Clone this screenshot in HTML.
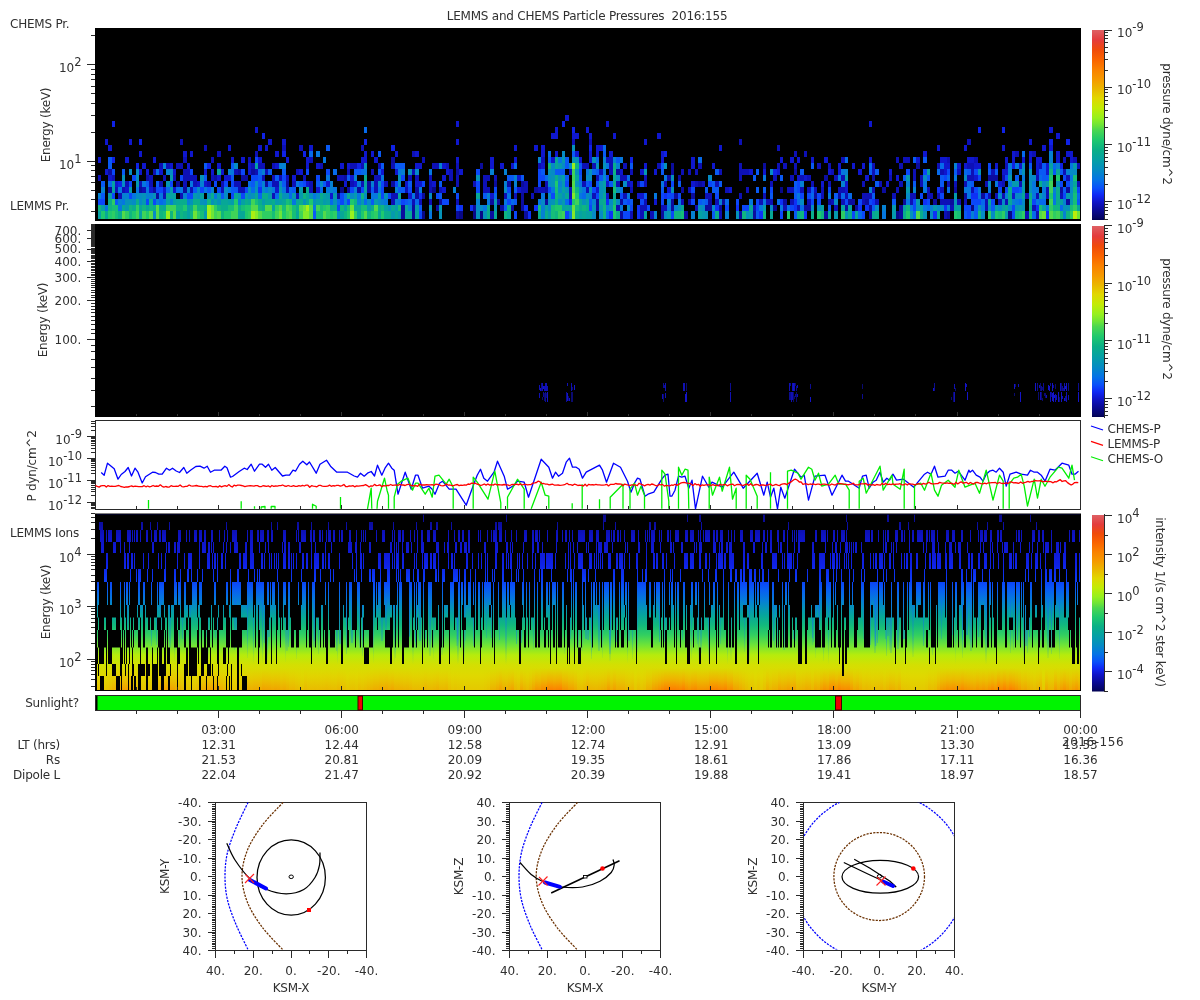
<!DOCTYPE html>
<html><head><meta charset="utf-8"><title>LEMMS and CHEMS Particle Pressures 2016:155</title>
<style>html,body{margin:0;padding:0;background:#fff;width:1200px;height:1000px;overflow:hidden}</style></head>
<body>
<svg width="1200" height="1000" viewBox="0 0 1200 1000" style="position:absolute;left:0;top:0;will-change:transform" font-family="'DejaVu Sans','Liberation Sans',sans-serif" font-size="12" fill="#303030"><style>.t{letter-spacing:-0.22px}</style>
<defs><linearGradient id="cb" x1="0" y1="0" x2="0" y2="1"><stop offset="0.000" stop-color="#de6064"/><stop offset="0.053" stop-color="#e43c3c"/><stop offset="0.105" stop-color="#f04b0a"/><stop offset="0.158" stop-color="#fa6400"/><stop offset="0.210" stop-color="#fa8200"/><stop offset="0.263" stop-color="#f59b00"/><stop offset="0.305" stop-color="#ebb400"/><stop offset="0.358" stop-color="#e1d700"/><stop offset="0.410" stop-color="#c3eb05"/><stop offset="0.463" stop-color="#96f01e"/><stop offset="0.500" stop-color="#6ee437"/><stop offset="0.526" stop-color="#4bd750"/><stop offset="0.579" stop-color="#1ec86e"/><stop offset="0.632" stop-color="#0aaf87"/><stop offset="0.684" stop-color="#05a0a5"/><stop offset="0.737" stop-color="#058cc3"/><stop offset="0.789" stop-color="#0573e6"/><stop offset="0.832" stop-color="#0a50fa"/><stop offset="0.868" stop-color="#0f28f5"/><stop offset="0.905" stop-color="#0f14c8"/><stop offset="0.947" stop-color="#0a0a96"/><stop offset="0.989" stop-color="#050564"/><stop offset="1.000" stop-color="#000050"/></linearGradient></defs>
<rect width="1200" height="1000" fill="#fff"/>
<text x="587.0" y="20.0" text-anchor="middle" font-size="12" xml:space="preserve" class="t">LEMMS and CHEMS Particle Pressures  2016:155</text>
<rect x="95" y="28" width="986" height="193" fill="#000"/>
<rect x="91" y="211" width="4" height="1" fill="#2a2a2a"/>
<rect x="91" y="199" width="4" height="1" fill="#2a2a2a"/>
<rect x="91" y="190" width="4" height="1" fill="#2a2a2a"/>
<rect x="91" y="182" width="4" height="1" fill="#2a2a2a"/>
<rect x="91" y="176" width="4" height="1" fill="#2a2a2a"/>
<rect x="91" y="170" width="4" height="1" fill="#2a2a2a"/>
<rect x="91" y="165" width="4" height="1" fill="#2a2a2a"/>
<rect x="87" y="161" width="8" height="1" fill="#2a2a2a"/>
<rect x="91" y="132" width="4" height="1" fill="#2a2a2a"/>
<rect x="91" y="115" width="4" height="1" fill="#2a2a2a"/>
<rect x="91" y="103" width="4" height="1" fill="#2a2a2a"/>
<rect x="91" y="93" width="4" height="1" fill="#2a2a2a"/>
<rect x="91" y="86" width="4" height="1" fill="#2a2a2a"/>
<rect x="91" y="79" width="4" height="1" fill="#2a2a2a"/>
<rect x="91" y="74" width="4" height="1" fill="#2a2a2a"/>
<rect x="91" y="69" width="4" height="1" fill="#2a2a2a"/>
<rect x="87" y="64" width="8" height="1" fill="#2a2a2a"/>
<rect x="91" y="35" width="4" height="1" fill="#2a2a2a"/>
<text x="81.5" y="72.1" text-anchor="end" font-size="12">10<tspan dy="-6" font-size="11.5">2</tspan></text>
<text x="81.5" y="168.8" text-anchor="end" font-size="12">10<tspan dy="-6" font-size="11.5">1</tspan></text>
<text class="t" transform="translate(50,125) rotate(-90)" text-anchor="middle">Energy (keV)</text>
<text x="10.0" y="28.0" text-anchor="start" font-size="12"  class="t">CHEMS Pr.</text>
<text x="10.0" y="210.0" text-anchor="start" font-size="12"  class="t">LEMMS Pr.</text>
<path fill="#080887" d="M340 187h4v6h-4zM422 211h3v8h-3zM432 187h4v6h-4zM459 211h4v8h-4zM473 211h3v8h-3zM480 211h3v8h-3zM773 205h4v6h-4zM780 187h3v6h-3zM896 211h3v8h-3zM971 205h3v6h-3zM1008 211h4v8h-4z"/>
<path fill="#0b0c9e" d="M108 187h4v6h-4zM108 169h4v6h-4zM139 187h3v6h-3zM146 175h3v6h-3zM153 187h3v6h-3zM156 193h3v6h-3zM176 181h4v6h-4zM183 187h4v6h-4zM214 175h3v6h-3zM238 169h3v6h-3zM241 175h4v6h-4zM245 175h3v6h-3zM251 169h4v6h-4zM265 181h3v6h-3zM286 181h3v6h-3zM337 193h3v6h-3zM344 175h3v6h-3zM347 187h3v6h-3zM357 187h4v6h-4zM367 187h4v6h-4zM367 181h4v6h-4zM391 181h4v6h-4zM391 157h4v6h-4zM401 211h4v8h-4zM401 205h4v6h-4zM412 211h3v8h-3zM412 205h3v6h-3zM415 193h4v6h-4zM415 187h4v6h-4zM422 193h3v6h-3zM436 205h3v6h-3zM439 199h3v6h-3zM456 211h3v8h-3zM456 169h3v6h-3zM473 205h3v6h-3zM480 163h3v6h-3zM490 211h4v8h-4zM490 199h4v6h-4zM494 181h3v6h-3zM497 199h3v6h-3zM500 205h4v6h-4zM507 181h4v6h-4zM511 205h3v6h-3zM521 205h3v6h-3zM521 199h3v6h-3zM521 193h3v6h-3zM521 181h3v6h-3zM524 211h4v8h-4zM534 187h4v6h-4zM545 199h3v6h-3zM545 187h3v6h-3zM596 205h3v6h-3zM596 199h3v6h-3zM616 169h4v6h-4zM620 211h3v8h-3zM620 199h3v6h-3zM661 211h3v8h-3zM667 175h4v6h-4zM671 205h3v6h-3zM671 199h3v6h-3zM671 169h3v6h-3zM671 163h3v6h-3zM674 193h4v6h-4zM678 175h3v6h-3zM681 187h3v6h-3zM684 211h4v8h-4zM688 199h3v6h-3zM691 193h4v6h-4zM698 181h4v6h-4zM705 205h3v6h-3zM708 205h4v6h-4zM708 199h4v6h-4zM719 205h3v6h-3zM722 199h3v6h-3zM739 211h3v8h-3zM753 211h3v8h-3zM763 163h3v6h-3zM783 199h4v6h-4zM794 169h3v6h-3zM804 205h3v6h-3zM807 205h4v6h-4zM814 193h3v6h-3zM824 211h4v8h-4zM824 175h4v6h-4zM828 199h3v6h-3zM838 193h3v6h-3zM845 205h3v6h-3zM848 199h4v6h-4zM852 199h3v6h-3zM855 205h3v6h-3zM865 199h4v6h-4zM869 211h3v8h-3zM869 205h3v6h-3zM872 175h3v6h-3zM882 187h4v6h-4zM899 211h4v8h-4zM899 205h4v6h-4zM903 199h3v6h-3zM916 163h4v6h-4zM933 199h4v6h-4zM947 211h3v8h-3zM950 199h4v6h-4zM954 187h3v6h-3zM964 193h3v6h-3zM981 193h4v6h-4zM988 175h3v6h-3zM991 175h4v6h-4zM995 175h3v6h-3zM1060 187h3v6h-3zM1066 199h4v6h-4zM1066 187h4v6h-4z"/>
<path fill="#0d10b6" d="M98 175h3v6h-3zM112 175h3v6h-3zM115 187h3v6h-3zM118 193h4v6h-4zM122 187h3v6h-3zM125 181h4v6h-4zM139 181h3v6h-3zM142 187h4v6h-4zM149 181h4v6h-4zM149 175h4v6h-4zM153 169h3v6h-3zM159 181h4v6h-4zM159 163h4v6h-4zM163 193h3v6h-3zM163 175h3v6h-3zM166 163h4v6h-4zM173 175h3v6h-3zM176 163h4v6h-4zM180 193h3v6h-3zM180 163h3v6h-3zM180 139h3v6h-3zM183 181h4v6h-4zM183 175h4v6h-4zM183 169h4v6h-4zM183 157h4v6h-4zM187 175h3v6h-3zM187 169h3v6h-3zM190 187h3v6h-3zM190 175h3v6h-3zM193 181h4v6h-4zM193 175h4v6h-4zM204 145h3v6h-3zM207 181h4v6h-4zM211 175h3v6h-3zM211 157h3v6h-3zM217 151h4v6h-4zM221 187h3v6h-3zM221 181h3v6h-3zM234 181h4v6h-4zM234 169h4v6h-4zM238 187h3v6h-3zM238 181h3v6h-3zM241 187h4v6h-4zM248 157h3v6h-3zM251 163h4v6h-4zM255 169h3v6h-3zM255 151h3v6h-3zM258 163h4v6h-4zM262 175h3v6h-3zM262 163h3v6h-3zM265 169h3v6h-3zM272 193h3v6h-3zM272 181h3v6h-3zM272 175h3v6h-3zM272 163h3v6h-3zM275 181h4v6h-4zM279 175h3v6h-3zM282 145h4v6h-4zM286 187h3v6h-3zM286 175h3v6h-3zM292 181h4v6h-4zM296 193h3v6h-3zM296 169h3v6h-3zM299 145h4v6h-4zM303 175h3v6h-3zM309 187h4v6h-4zM309 181h4v6h-4zM309 157h4v6h-4zM320 163h3v6h-3zM337 175h3v6h-3zM340 175h4v6h-4zM347 169h3v6h-3zM350 181h4v6h-4zM350 163h4v6h-4zM354 163h3v6h-3zM361 181h3v6h-3zM361 163h3v6h-3zM361 145h3v6h-3zM371 169h3v6h-3zM374 187h4v6h-4zM374 181h4v6h-4zM374 175h4v6h-4zM378 175h3v6h-3zM378 163h3v6h-3zM384 181h4v6h-4zM391 199h4v6h-4zM391 193h4v6h-4zM391 163h4v6h-4zM395 193h3v6h-3zM405 187h3v6h-3zM408 175h4v6h-4zM412 199h3v6h-3zM412 169h3v6h-3zM412 151h3v6h-3zM415 175h4v6h-4zM419 199h3v6h-3zM422 157h3v6h-3zM429 199h3v6h-3zM429 187h3v6h-3zM429 181h3v6h-3zM429 175h3v6h-3zM432 163h4v6h-4zM436 163h3v6h-3zM439 187h3v6h-3zM446 163h3v6h-3zM449 175h4v6h-4zM449 169h4v6h-4zM456 199h3v6h-3zM456 181h3v6h-3zM456 175h3v6h-3zM456 163h3v6h-3zM473 181h3v6h-3zM483 187h4v6h-4zM483 181h4v6h-4zM483 175h4v6h-4zM487 187h3v6h-3zM487 175h3v6h-3zM494 175h3v6h-3zM504 193h3v6h-3zM514 193h3v6h-3zM521 187h3v6h-3zM524 187h4v6h-4zM524 181h4v6h-4zM531 193h3v6h-3zM538 187h3v6h-3zM538 163h3v6h-3zM541 187h4v6h-4zM541 157h4v6h-4zM545 181h3v6h-3zM569 193h3v6h-3zM569 187h3v6h-3zM569 169h3v6h-3zM572 139h3v6h-3zM582 181h4v6h-4zM582 163h4v6h-4zM586 187h3v6h-3zM586 163h3v6h-3zM589 139h3v6h-3zM592 193h4v6h-4zM592 163h4v6h-4zM596 175h3v6h-3zM599 169h4v6h-4zM606 157h3v6h-3zM609 169h4v6h-4zM609 163h4v6h-4zM609 157h4v6h-4zM616 205h4v6h-4zM616 181h4v6h-4zM620 175h3v6h-3zM623 193h4v6h-4zM623 175h4v6h-4zM623 163h4v6h-4zM627 181h3v6h-3zM630 211h3v8h-3zM630 187h3v6h-3zM630 169h3v6h-3zM637 181h3v6h-3zM640 211h4v8h-4zM640 205h4v6h-4zM644 205h3v6h-3zM644 199h3v6h-3zM644 181h3v6h-3zM644 175h3v6h-3zM650 211h4v8h-4zM657 163h4v6h-4zM661 205h3v6h-3zM664 205h3v6h-3zM664 181h3v6h-3zM681 199h3v6h-3zM681 169h3v6h-3zM688 187h3v6h-3zM688 169h3v6h-3zM695 205h3v6h-3zM695 181h3v6h-3zM695 169h3v6h-3zM698 163h4v6h-4zM702 181h3v6h-3zM705 193h3v6h-3zM708 193h4v6h-4zM715 199h4v6h-4zM715 181h4v6h-4zM719 211h3v8h-3zM719 169h3v6h-3zM725 187h4v6h-4zM739 193h3v6h-3zM739 175h3v6h-3zM739 169h3v6h-3zM739 163h3v6h-3zM739 139h3v6h-3zM742 169h4v6h-4zM746 187h3v6h-3zM746 169h3v6h-3zM753 205h3v6h-3zM759 199h4v6h-4zM763 193h3v6h-3zM766 199h4v6h-4zM770 199h3v6h-3zM770 181h3v6h-3zM773 175h4v6h-4zM777 163h3v6h-3zM777 145h3v6h-3zM783 205h4v6h-4zM783 163h4v6h-4zM787 187h3v6h-3zM790 199h4v6h-4zM790 187h4v6h-4zM790 175h4v6h-4zM794 163h3v6h-3zM794 151h3v6h-3zM797 205h3v6h-3zM800 187h4v6h-4zM800 175h4v6h-4zM804 151h3v6h-3zM807 199h4v6h-4zM807 187h4v6h-4zM807 175h4v6h-4zM811 181h3v6h-3zM814 187h3v6h-3zM817 163h4v6h-4zM821 193h3v6h-3zM821 187h3v6h-3zM828 181h3v6h-3zM828 163h3v6h-3zM831 199h3v6h-3zM831 169h3v6h-3zM834 205h4v6h-4zM834 175h4v6h-4zM838 187h3v6h-3zM841 199h4v6h-4zM841 187h4v6h-4zM841 175h4v6h-4zM841 157h4v6h-4zM845 193h3v6h-3zM862 199h3v6h-3zM862 193h3v6h-3zM862 181h3v6h-3zM865 193h4v6h-4zM869 193h3v6h-3zM872 187h3v6h-3zM872 169h3v6h-3zM872 163h3v6h-3zM875 199h4v6h-4zM879 181h3v6h-3zM889 175h3v6h-3zM892 193h4v6h-4zM896 187h3v6h-3zM896 157h3v6h-3zM899 181h4v6h-4zM899 163h4v6h-4zM903 157h3v6h-3zM906 157h4v6h-4zM910 199h3v6h-3zM910 193h3v6h-3zM913 193h3v6h-3zM913 175h3v6h-3zM913 169h3v6h-3zM920 181h3v6h-3zM920 175h3v6h-3zM927 193h3v6h-3zM927 187h3v6h-3zM930 193h3v6h-3zM937 193h3v6h-3zM937 163h3v6h-3zM940 199h4v6h-4zM940 187h4v6h-4zM940 169h4v6h-4zM944 211h3v8h-3zM944 199h3v6h-3zM947 199h3v6h-3zM947 181h3v6h-3zM947 157h3v6h-3zM950 205h4v6h-4zM954 181h3v6h-3zM957 199h4v6h-4zM957 169h4v6h-4zM964 199h3v6h-3zM964 181h3v6h-3zM967 175h4v6h-4zM967 163h4v6h-4zM967 139h4v6h-4zM971 187h3v6h-3zM971 175h3v6h-3zM971 169h3v6h-3zM971 163h3v6h-3zM974 157h4v6h-4zM985 205h3v6h-3zM985 199h3v6h-3zM985 181h3v6h-3zM988 193h3v6h-3zM991 169h4v6h-4zM995 193h3v6h-3zM998 199h4v6h-4zM1002 193h3v6h-3zM1002 181h3v6h-3zM1002 175h3v6h-3zM1005 199h3v6h-3zM1005 163h3v6h-3zM1015 151h4v6h-4zM1019 181h3v6h-3zM1025 211h4v8h-4zM1025 193h4v6h-4zM1032 205h4v6h-4zM1032 151h4v6h-4zM1036 211h3v8h-3zM1036 193h3v6h-3zM1036 175h3v6h-3zM1039 163h3v6h-3zM1046 193h3v6h-3zM1046 187h3v6h-3zM1060 193h3v6h-3zM1063 169h3v6h-3zM1063 157h3v6h-3zM1066 175h4v6h-4zM1073 157h4v6h-4zM1077 181h3v6h-3zM1077 163h3v6h-3z"/>
<path fill="#0f17ce" d="M98 157h3v6h-3zM105 169h3v6h-3zM105 139h3v6h-3zM108 175h4v6h-4zM108 145h4v6h-4zM115 181h3v6h-3zM125 187h4v6h-4zM125 157h4v6h-4zM129 139h3v6h-3zM139 169h3v6h-3zM139 151h3v6h-3zM142 163h4v6h-4zM146 169h3v6h-3zM149 187h4v6h-4zM153 157h3v6h-3zM159 169h4v6h-4zM163 187h3v6h-3zM170 163h3v6h-3zM173 187h3v6h-3zM173 169h3v6h-3zM183 151h4v6h-4zM187 163h3v6h-3zM190 151h3v6h-3zM197 181h3v6h-3zM204 181h3v6h-3zM204 169h3v6h-3zM211 169h3v6h-3zM217 175h4v6h-4zM217 163h4v6h-4zM221 169h3v6h-3zM224 175h4v6h-4zM228 175h3v6h-3zM228 145h3v6h-3zM231 157h3v6h-3zM241 157h4v6h-4zM248 169h3v6h-3zM248 163h3v6h-3zM255 127h3v6h-3zM258 157h4v6h-4zM258 145h4v6h-4zM265 145h3v6h-3zM268 139h4v6h-4zM275 187h4v6h-4zM275 163h4v6h-4zM275 151h4v6h-4zM282 139h4v6h-4zM286 157h3v6h-3zM292 175h4v6h-4zM299 169h4v6h-4zM306 181h3v6h-3zM306 163h3v6h-3zM306 157h3v6h-3zM309 145h4v6h-4zM316 187h4v6h-4zM316 163h4v6h-4zM326 181h4v6h-4zM330 193h3v6h-3zM340 163h4v6h-4zM344 181h3v6h-3zM347 163h3v6h-3zM350 175h4v6h-4zM354 181h3v6h-3zM361 157h3v6h-3zM364 157h3v6h-3zM364 151h3v6h-3zM371 151h3v6h-3zM374 157h4v6h-4zM381 169h3v6h-3zM395 169h3v6h-3zM395 151h3v6h-3zM405 181h3v6h-3zM408 193h4v6h-4zM415 181h4v6h-4zM415 163h4v6h-4zM415 151h4v6h-4zM419 181h3v6h-3zM419 163h3v6h-3zM432 181h4v6h-4zM442 187h4v6h-4zM442 175h4v6h-4zM442 163h4v6h-4zM446 169h3v6h-3zM456 157h3v6h-3zM456 139h3v6h-3zM456 121h3v6h-3zM459 169h4v6h-4zM490 193h4v6h-4zM490 163h4v6h-4zM490 157h4v6h-4zM500 163h4v6h-4zM511 163h3v6h-3zM514 157h3v6h-3zM514 145h3v6h-3zM517 187h4v6h-4zM517 175h4v6h-4zM534 145h4v6h-4zM541 163h4v6h-4zM541 151h4v6h-4zM541 145h4v6h-4zM551 157h4v6h-4zM551 133h4v6h-4zM555 151h3v6h-3zM555 133h3v6h-3zM555 127h3v6h-3zM565 115h4v6h-4zM572 133h3v6h-3zM575 151h4v6h-4zM575 133h4v6h-4zM579 157h3v6h-3zM586 127h3v6h-3zM589 157h3v6h-3zM589 151h3v6h-3zM589 133h3v6h-3zM596 187h3v6h-3zM596 151h3v6h-3zM596 145h3v6h-3zM599 145h4v6h-4zM606 193h3v6h-3zM606 181h3v6h-3zM606 121h3v6h-3zM609 151h4v6h-4zM613 133h3v6h-3zM620 169h3v6h-3zM630 181h3v6h-3zM637 193h3v6h-3zM640 193h4v6h-4zM640 169h4v6h-4zM644 163h3v6h-3zM644 139h3v6h-3zM654 199h3v6h-3zM654 169h3v6h-3zM657 133h4v6h-4zM661 157h3v6h-3zM661 151h3v6h-3zM667 187h4v6h-4zM691 181h4v6h-4zM691 163h4v6h-4zM691 157h4v6h-4zM712 163h3v6h-3zM719 145h3v6h-3zM729 187h3v6h-3zM749 169h4v6h-4zM763 169h3v6h-3zM777 169h3v6h-3zM780 157h3v6h-3zM790 157h4v6h-4zM797 175h3v6h-3zM797 157h3v6h-3zM804 175h3v6h-3zM811 157h3v6h-3zM821 181h3v6h-3zM824 157h4v6h-4zM828 169h3v6h-3zM838 169h3v6h-3zM838 163h3v6h-3zM845 187h3v6h-3zM845 181h3v6h-3zM852 163h3v6h-3zM858 169h4v6h-4zM862 163h3v6h-3zM865 175h4v6h-4zM869 157h3v6h-3zM869 121h3v6h-3zM886 181h3v6h-3zM889 169h3v6h-3zM896 175h3v6h-3zM916 157h4v6h-4zM923 151h4v6h-4zM937 145h3v6h-3zM940 157h4v6h-4zM944 169h3v6h-3zM944 163h3v6h-3zM944 157h3v6h-3zM947 163h3v6h-3zM957 163h4v6h-4zM964 163h3v6h-3zM964 145h3v6h-3zM967 157h4v6h-4zM971 157h3v6h-3zM974 175h4v6h-4zM974 163h4v6h-4zM978 163h3v6h-3zM995 163h3v6h-3zM998 181h4v6h-4zM1002 169h3v6h-3zM1002 145h3v6h-3zM1005 169h3v6h-3zM1005 157h3v6h-3zM1012 193h3v6h-3zM1012 157h3v6h-3zM1012 151h3v6h-3zM1019 163h3v6h-3zM1022 157h3v6h-3zM1029 157h3v6h-3zM1029 151h3v6h-3zM1029 139h3v6h-3zM1036 169h3v6h-3zM1036 163h3v6h-3zM1036 157h3v6h-3zM1039 157h3v6h-3zM1042 145h4v6h-4zM1046 169h3v6h-3zM1046 163h3v6h-3zM1049 145h4v6h-4zM1049 127h4v6h-4zM1056 157h4v6h-4zM1056 151h4v6h-4zM1056 133h4v6h-4zM1066 151h4v6h-4zM1070 157h3v6h-3zM1070 151h3v6h-3z"/>
<path fill="#0f22e6" d="M112 157h3v6h-3zM112 121h3v6h-3zM118 181h4v6h-4zM136 163h3v6h-3zM139 139h3v6h-3zM207 163h4v6h-4zM262 133h3v6h-3zM282 151h4v6h-4zM303 151h3v6h-3zM357 163h4v6h-4zM364 139h3v6h-3zM391 145h4v6h-4zM562 121h3v6h-3zM569 199h3v6h-3zM572 127h3v6h-3zM589 145h3v6h-3zM630 157h3v6h-3zM664 151h3v6h-3zM773 169h4v6h-4zM978 127h3v6h-3zM1002 127h3v6h-3zM1012 163h3v6h-3zM1049 139h4v6h-4zM1060 163h3v6h-3zM1066 139h4v6h-4z"/>
<path fill="#0e31f6" d="M258 187h4v6h-4zM419 193h3v6h-3zM459 205h4v6h-4zM470 205h3v6h-3zM524 205h4v6h-4zM528 211h3v8h-3zM534 205h4v6h-4zM606 199h3v6h-3zM609 211h4v8h-4zM637 211h3v8h-3zM637 205h3v6h-3zM664 193h3v6h-3zM715 205h4v6h-4zM736 205h3v6h-3zM759 211h4v8h-4zM780 199h3v6h-3zM794 205h3v6h-3zM794 199h3v6h-3zM804 211h3v8h-3zM858 205h4v6h-4zM865 205h4v6h-4zM872 199h3v6h-3zM923 199h4v6h-4zM933 211h4v8h-4zM937 187h3v6h-3zM944 205h3v6h-3zM971 193h3v6h-3zM974 193h4v6h-4zM1036 205h3v6h-3zM1046 211h3v8h-3z"/>
<path fill="#0b47f9" d="M98 199h3v6h-3zM101 199h4v6h-4zM112 193h3v6h-3zM112 169h3v6h-3zM129 193h3v6h-3zM129 181h3v6h-3zM132 175h4v6h-4zM146 199h3v6h-3zM153 199h3v6h-3zM156 187h3v6h-3zM159 187h4v6h-4zM170 181h3v6h-3zM180 175h3v6h-3zM187 193h3v6h-3zM190 193h3v6h-3zM190 169h3v6h-3zM200 187h4v6h-4zM214 181h3v6h-3zM217 187h4v6h-4zM224 181h4v6h-4zM231 193h3v6h-3zM231 181h3v6h-3zM241 193h4v6h-4zM241 169h4v6h-4zM245 187h3v6h-3zM251 175h4v6h-4zM255 175h3v6h-3zM255 157h3v6h-3zM282 175h4v6h-4zM303 181h3v6h-3zM306 169h3v6h-3zM316 175h4v6h-4zM326 169h4v6h-4zM337 205h3v6h-3zM340 199h4v6h-4zM340 193h4v6h-4zM347 199h3v6h-3zM350 187h4v6h-4zM361 187h3v6h-3zM381 193h3v6h-3zM381 187h3v6h-3zM381 181h3v6h-3zM388 193h3v6h-3zM395 181h3v6h-3zM401 199h4v6h-4zM401 175h4v6h-4zM408 187h4v6h-4zM419 211h3v8h-3zM422 181h3v6h-3zM436 193h3v6h-3zM442 199h4v6h-4zM446 199h3v6h-3zM456 205h3v6h-3zM456 193h3v6h-3zM476 187h4v6h-4zM476 181h4v6h-4zM476 169h4v6h-4zM494 187h3v6h-3zM507 199h4v6h-4zM507 187h4v6h-4zM514 211h3v8h-3zM538 181h3v6h-3zM538 175h3v6h-3zM538 169h3v6h-3zM541 175h4v6h-4zM548 187h3v6h-3zM551 193h4v6h-4zM565 211h4v8h-4zM565 181h4v6h-4zM579 169h3v6h-3zM589 205h3v6h-3zM589 181h3v6h-3zM592 187h4v6h-4zM596 193h3v6h-3zM606 175h3v6h-3zM620 193h3v6h-3zM623 211h4v8h-4zM627 211h3v8h-3zM627 199h3v6h-3zM630 205h3v6h-3zM640 199h4v6h-4zM640 181h4v6h-4zM647 205h3v6h-3zM661 199h3v6h-3zM661 193h3v6h-3zM667 193h4v6h-4zM671 211h3v8h-3zM671 193h3v6h-3zM671 181h3v6h-3zM678 193h3v6h-3zM691 199h4v6h-4zM691 187h4v6h-4zM708 181h4v6h-4zM715 193h4v6h-4zM725 205h4v6h-4zM736 199h3v6h-3zM742 205h4v6h-4zM746 205h3v6h-3zM756 205h3v6h-3zM756 199h3v6h-3zM770 187h3v6h-3zM780 211h3v8h-3zM790 205h4v6h-4zM797 187h3v6h-3zM797 181h3v6h-3zM800 193h4v6h-4zM807 193h4v6h-4zM811 199h3v6h-3zM817 199h4v6h-4zM817 193h4v6h-4zM828 187h3v6h-3zM845 199h3v6h-3zM852 211h3v8h-3zM858 199h4v6h-4zM862 211h3v8h-3zM869 199h3v6h-3zM906 169h4v6h-4zM913 205h3v6h-3zM913 199h3v6h-3zM920 193h3v6h-3zM923 169h4v6h-4zM927 199h3v6h-3zM940 193h4v6h-4zM944 175h3v6h-3zM947 169h3v6h-3zM964 205h3v6h-3zM967 211h4v8h-4zM967 205h4v6h-4zM971 199h3v6h-3zM974 199h4v6h-4zM974 187h4v6h-4zM974 169h4v6h-4zM978 199h3v6h-3zM978 175h3v6h-3zM985 193h3v6h-3zM988 163h3v6h-3zM991 199h4v6h-4zM998 187h4v6h-4zM1005 187h3v6h-3zM1005 175h3v6h-3zM1012 211h3v8h-3zM1012 205h3v6h-3zM1012 187h3v6h-3zM1015 187h4v6h-4zM1032 199h4v6h-4zM1060 181h3v6h-3zM1063 193h3v6h-3zM1063 175h3v6h-3zM1066 181h4v6h-4zM1077 187h3v6h-3z"/>
<path fill="#095af4" d="M101 193h4v6h-4zM101 181h4v6h-4zM108 163h4v6h-4zM108 157h4v6h-4zM115 199h3v6h-3zM122 169h3v6h-3zM146 181h3v6h-3zM156 181h3v6h-3zM193 187h4v6h-4zM204 175h3v6h-3zM204 163h3v6h-3zM207 187h4v6h-4zM221 193h3v6h-3zM231 187h3v6h-3zM231 175h3v6h-3zM231 163h3v6h-3zM234 187h4v6h-4zM251 181h4v6h-4zM258 181h4v6h-4zM258 175h4v6h-4zM268 181h4v6h-4zM268 169h4v6h-4zM275 175h4v6h-4zM282 181h4v6h-4zM282 169h4v6h-4zM292 187h4v6h-4zM299 181h4v6h-4zM313 211h3v8h-3zM316 181h4v6h-4zM323 181h3v6h-3zM326 145h4v6h-4zM347 175h3v6h-3zM354 169h3v6h-3zM357 169h4v6h-4zM371 199h3v6h-3zM371 187h3v6h-3zM378 169h3v6h-3zM378 151h3v6h-3zM381 163h3v6h-3zM395 163h3v6h-3zM398 187h3v6h-3zM398 163h3v6h-3zM401 187h4v6h-4zM401 163h4v6h-4zM405 199h3v6h-3zM408 181h4v6h-4zM419 205h3v6h-3zM439 193h3v6h-3zM439 181h3v6h-3zM483 193h4v6h-4zM504 205h3v6h-3zM507 175h4v6h-4zM511 175h3v6h-3zM514 199h3v6h-3zM514 187h3v6h-3zM521 175h3v6h-3zM541 169h4v6h-4zM548 157h3v6h-3zM555 169h3v6h-3zM558 169h4v6h-4zM562 169h3v6h-3zM565 175h4v6h-4zM565 163h4v6h-4zM565 157h4v6h-4zM572 151h3v6h-3zM579 175h3v6h-3zM579 163h3v6h-3zM586 181h3v6h-3zM589 199h3v6h-3zM596 181h3v6h-3zM596 169h3v6h-3zM599 175h4v6h-4zM603 151h3v6h-3zM609 181h4v6h-4zM616 157h4v6h-4zM623 199h4v6h-4zM630 199h3v6h-3zM630 163h3v6h-3zM644 193h3v6h-3zM661 187h3v6h-3zM661 169h3v6h-3zM661 163h3v6h-3zM678 181h3v6h-3zM698 199h4v6h-4zM705 199h3v6h-3zM705 187h3v6h-3zM712 211h3v8h-3zM712 187h3v6h-3zM712 181h3v6h-3zM715 187h4v6h-4zM715 169h4v6h-4zM719 181h3v6h-3zM753 175h3v6h-3zM756 211h3v8h-3zM756 187h3v6h-3zM756 169h3v6h-3zM763 187h3v6h-3zM770 193h3v6h-3zM780 175h3v6h-3zM794 211h3v8h-3zM794 193h3v6h-3zM794 187h3v6h-3zM794 181h3v6h-3zM800 169h4v6h-4zM811 187h3v6h-3zM811 163h3v6h-3zM828 205h3v6h-3zM834 193h4v6h-4zM869 169h3v6h-3zM872 205h3v6h-3zM872 193h3v6h-3zM875 181h4v6h-4zM875 169h4v6h-4zM892 199h4v6h-4zM903 175h3v6h-3zM913 181h3v6h-3zM913 157h3v6h-3zM923 157h4v6h-4zM927 175h3v6h-3zM940 181h4v6h-4zM940 175h4v6h-4zM954 169h3v6h-3zM964 211h3v8h-3zM967 169h4v6h-4zM971 181h3v6h-3zM974 211h4v8h-4zM974 205h4v6h-4zM988 169h3v6h-3zM991 205h4v6h-4zM995 169h3v6h-3zM1015 175h4v6h-4zM1019 187h3v6h-3zM1029 163h3v6h-3zM1039 169h3v6h-3zM1042 175h4v6h-4zM1042 169h4v6h-4zM1042 163h4v6h-4zM1046 175h3v6h-3zM1053 169h3v6h-3zM1060 169h3v6h-3zM1063 187h3v6h-3zM1077 199h3v6h-3z"/>
<path fill="#066aeb" d="M108 181h4v6h-4zM156 169h3v6h-3zM159 199h4v6h-4zM166 187h4v6h-4zM176 187h4v6h-4zM248 181h3v6h-3zM251 187h4v6h-4zM258 193h4v6h-4zM258 169h4v6h-4zM275 193h4v6h-4zM289 193h3v6h-3zM289 187h3v6h-3zM309 151h4v6h-4zM320 187h3v6h-3zM330 199h3v6h-3zM333 169h4v6h-4zM337 199h3v6h-3zM361 169h3v6h-3zM364 199h3v6h-3zM364 127h3v6h-3zM408 199h4v6h-4zM415 199h4v6h-4zM494 193h3v6h-3zM511 199h3v6h-3zM514 163h3v6h-3zM545 175h3v6h-3zM548 151h3v6h-3zM565 199h4v6h-4zM582 193h4v6h-4zM592 169h4v6h-4zM596 157h3v6h-3zM603 145h3v6h-3zM606 211h3v8h-3zM627 175h3v6h-3zM698 157h4v6h-4zM702 199h3v6h-3zM725 199h4v6h-4zM777 199h3v6h-3zM787 205h3v6h-3zM797 199h3v6h-3zM800 205h4v6h-4zM811 193h3v6h-3zM841 193h4v6h-4zM845 157h3v6h-3zM848 193h4v6h-4zM858 211h4v8h-4zM869 163h3v6h-3zM913 211h3v8h-3zM927 205h3v6h-3zM937 169h3v6h-3zM940 163h4v6h-4zM947 187h3v6h-3zM947 175h3v6h-3zM964 169h3v6h-3zM967 181h4v6h-4zM981 199h4v6h-4zM1019 199h3v6h-3zM1022 151h3v6h-3zM1032 211h4v8h-4zM1039 199h3v6h-3zM1039 175h3v6h-3zM1042 199h4v6h-4zM1053 163h3v6h-3zM1060 205h3v6h-3zM1077 193h3v6h-3z"/>
<path fill="#0577e0" d="M105 205h3v6h-3zM118 205h4v6h-4zM118 187h4v6h-4zM122 199h3v6h-3zM132 193h4v6h-4zM136 187h3v6h-3zM142 181h4v6h-4zM146 187h3v6h-3zM159 193h4v6h-4zM163 199h3v6h-3zM180 187h3v6h-3zM190 181h3v6h-3zM204 187h3v6h-3zM214 193h3v6h-3zM228 187h3v6h-3zM231 169h3v6h-3zM265 187h3v6h-3zM272 187h3v6h-3zM282 187h4v6h-4zM292 199h4v6h-4zM296 181h3v6h-3zM313 205h3v6h-3zM313 193h3v6h-3zM316 151h4v6h-4zM323 157h3v6h-3zM326 187h4v6h-4zM326 175h4v6h-4zM333 187h4v6h-4zM344 193h3v6h-3zM357 193h4v6h-4zM357 181h4v6h-4zM364 169h3v6h-3zM371 193h3v6h-3zM374 193h4v6h-4zM378 187h3v6h-3zM381 175h3v6h-3zM384 199h4v6h-4zM398 199h3v6h-3zM398 169h3v6h-3zM412 193h3v6h-3zM419 187h3v6h-3zM429 211h3v8h-3zM429 169h3v6h-3zM483 205h4v6h-4zM487 199h3v6h-3zM504 199h3v6h-3zM507 193h4v6h-4zM538 199h3v6h-3zM541 193h4v6h-4zM551 187h4v6h-4zM558 157h4v6h-4zM579 193h3v6h-3zM579 181h3v6h-3zM582 187h4v6h-4zM586 169h3v6h-3zM603 169h3v6h-3zM606 163h3v6h-3zM620 205h3v6h-3zM620 187h3v6h-3zM620 157h3v6h-3zM627 193h3v6h-3zM654 193h3v6h-3zM661 181h3v6h-3zM664 175h3v6h-3zM667 205h4v6h-4zM678 199h3v6h-3zM749 199h4v6h-4zM759 205h4v6h-4zM763 199h3v6h-3zM763 175h3v6h-3zM780 205h3v6h-3zM797 193h3v6h-3zM828 193h3v6h-3zM838 175h3v6h-3zM841 169h4v6h-4zM882 211h4v8h-4zM906 199h4v6h-4zM910 205h3v6h-3zM923 205h4v6h-4zM923 187h4v6h-4zM923 181h4v6h-4zM954 175h3v6h-3zM964 187h3v6h-3zM967 193h4v6h-4zM967 187h4v6h-4zM978 193h3v6h-3zM978 187h3v6h-3zM981 205h4v6h-4zM988 187h3v6h-3zM995 181h3v6h-3zM1008 181h4v6h-4zM1008 163h4v6h-4zM1015 199h4v6h-4zM1015 163h4v6h-4zM1019 169h3v6h-3zM1022 175h3v6h-3zM1032 193h4v6h-4zM1032 187h4v6h-4zM1032 181h4v6h-4zM1036 199h3v6h-3zM1036 187h3v6h-3zM1042 187h4v6h-4zM1046 205h3v6h-3zM1053 199h3v6h-3zM1053 193h3v6h-3zM1070 175h3v6h-3zM1070 163h3v6h-3z"/>
<path fill="#0581d2" d="M98 193h3v6h-3zM101 187h4v6h-4zM118 199h4v6h-4zM122 193h3v6h-3zM125 193h4v6h-4zM146 193h3v6h-3zM149 193h4v6h-4zM156 199h3v6h-3zM163 163h3v6h-3zM166 169h4v6h-4zM170 199h3v6h-3zM183 193h4v6h-4zM187 199h3v6h-3zM187 187h3v6h-3zM200 181h4v6h-4zM211 187h3v6h-3zM228 169h3v6h-3zM238 199h3v6h-3zM262 181h3v6h-3zM262 169h3v6h-3zM279 163h3v6h-3zM282 163h4v6h-4zM330 187h3v6h-3zM330 181h3v6h-3zM344 199h3v6h-3zM354 187h3v6h-3zM354 175h3v6h-3zM357 199h4v6h-4zM371 181h3v6h-3zM381 199h3v6h-3zM395 199h3v6h-3zM395 187h3v6h-3zM401 169h4v6h-4zM408 205h4v6h-4zM439 163h3v6h-3zM453 187h3v6h-3zM476 199h4v6h-4zM487 193h3v6h-3zM490 169h4v6h-4zM504 181h3v6h-3zM504 169h3v6h-3zM514 181h3v6h-3zM514 175h3v6h-3zM538 157h3v6h-3zM541 211h4v8h-4zM541 205h4v6h-4zM558 181h4v6h-4zM569 211h3v8h-3zM589 193h3v6h-3zM592 199h4v6h-4zM603 157h3v6h-3zM606 205h3v6h-3zM613 157h3v6h-3zM616 163h4v6h-4zM654 211h3v8h-3zM667 199h4v6h-4zM674 205h4v6h-4zM691 211h4v8h-4zM719 199h3v6h-3zM725 211h4v8h-4zM800 181h4v6h-4zM841 181h4v6h-4zM845 169h3v6h-3zM869 187h3v6h-3zM882 205h4v6h-4zM906 181h4v6h-4zM913 187h3v6h-3zM930 205h3v6h-3zM947 205h3v6h-3zM954 163h3v6h-3zM971 211h3v8h-3zM1005 193h3v6h-3zM1008 169h4v6h-4zM1012 199h3v6h-3zM1042 193h4v6h-4zM1049 157h4v6h-4zM1049 151h4v6h-4zM1053 187h3v6h-3zM1056 163h4v6h-4zM1063 211h3v8h-3zM1063 199h3v6h-3zM1066 169h4v6h-4z"/>
<path fill="#058bc5" d="M122 181h3v6h-3zM129 169h3v6h-3zM132 199h4v6h-4zM136 193h3v6h-3zM136 175h3v6h-3zM136 169h3v6h-3zM139 199h3v6h-3zM139 193h3v6h-3zM153 211h3v8h-3zM170 169h3v6h-3zM197 187h3v6h-3zM204 199h3v6h-3zM224 193h4v6h-4zM224 187h4v6h-4zM234 163h4v6h-4zM248 193h3v6h-3zM255 181h3v6h-3zM262 187h3v6h-3zM268 187h4v6h-4zM279 181h3v6h-3zM316 193h4v6h-4zM320 181h3v6h-3zM337 211h3v8h-3zM350 193h4v6h-4zM364 193h3v6h-3zM367 199h4v6h-4zM378 199h3v6h-3zM378 181h3v6h-3zM398 181h3v6h-3zM415 169h4v6h-4zM429 193h3v6h-3zM476 205h4v6h-4zM480 205h3v6h-3zM504 187h3v6h-3zM541 199h4v6h-4zM548 205h3v6h-3zM548 199h3v6h-3zM548 193h3v6h-3zM548 181h3v6h-3zM548 175h3v6h-3zM551 169h4v6h-4zM551 163h4v6h-4zM558 199h4v6h-4zM558 187h4v6h-4zM562 163h3v6h-3zM562 151h3v6h-3zM569 163h3v6h-3zM579 187h3v6h-3zM586 193h3v6h-3zM586 175h3v6h-3zM589 175h3v6h-3zM592 211h4v8h-4zM599 211h4v8h-4zM603 175h3v6h-3zM609 199h4v6h-4zM616 199h4v6h-4zM616 175h4v6h-4zM623 181h4v6h-4zM627 205h3v6h-3zM664 211h3v8h-3zM702 205h3v6h-3zM708 175h4v6h-4zM712 205h3v6h-3zM770 205h3v6h-3zM770 169h3v6h-3zM800 199h4v6h-4zM811 205h3v6h-3zM834 199h4v6h-4zM875 205h4v6h-4zM906 193h4v6h-4zM923 175h4v6h-4zM930 211h3v8h-3zM937 205h3v6h-3zM940 205h4v6h-4zM964 175h3v6h-3zM981 211h4v8h-4zM988 181h3v6h-3zM991 211h4v8h-4zM998 205h4v6h-4zM998 193h4v6h-4zM1002 199h3v6h-3zM1008 205h4v6h-4zM1015 193h4v6h-4zM1019 193h3v6h-3zM1022 199h3v6h-3zM1022 163h3v6h-3zM1029 175h3v6h-3zM1032 175h4v6h-4zM1042 181h4v6h-4zM1070 187h3v6h-3zM1070 181h3v6h-3zM1070 169h3v6h-3zM1073 169h4v6h-4z"/>
<path fill="#0592b9" d="M122 175h3v6h-3zM125 199h4v6h-4zM129 199h3v6h-3zM142 193h4v6h-4zM153 193h3v6h-3zM166 181h4v6h-4zM190 199h3v6h-3zM197 193h3v6h-3zM200 199h4v6h-4zM200 175h4v6h-4zM207 193h4v6h-4zM211 199h3v6h-3zM217 199h4v6h-4zM248 187h3v6h-3zM251 193h4v6h-4zM255 187h3v6h-3zM282 193h4v6h-4zM286 193h3v6h-3zM303 199h3v6h-3zM309 193h4v6h-4zM313 199h3v6h-3zM333 199h4v6h-4zM364 163h3v6h-3zM384 193h4v6h-4zM388 205h3v6h-3zM398 175h3v6h-3zM408 169h4v6h-4zM429 205h3v6h-3zM439 211h3v8h-3zM476 211h4v8h-4zM476 175h4v6h-4zM483 211h4v8h-4zM494 205h3v6h-3zM548 169h3v6h-3zM551 199h4v6h-4zM551 181h4v6h-4zM551 175h4v6h-4zM558 175h4v6h-4zM562 193h3v6h-3zM565 187h4v6h-4zM572 157h3v6h-3zM572 145h3v6h-3zM575 181h4v6h-4zM575 169h4v6h-4zM575 157h4v6h-4zM582 199h4v6h-4zM589 187h3v6h-3zM589 169h3v6h-3zM592 205h4v6h-4zM592 157h4v6h-4zM596 163h3v6h-3zM599 193h4v6h-4zM599 187h4v6h-4zM599 181h4v6h-4zM603 163h3v6h-3zM609 205h4v6h-4zM616 187h4v6h-4zM664 163h3v6h-3zM671 187h3v6h-3zM671 175h3v6h-3zM678 205h3v6h-3zM698 205h4v6h-4zM705 211h3v8h-3zM736 211h3v8h-3zM746 211h3v8h-3zM817 205h4v6h-4zM845 211h3v8h-3zM910 211h3v8h-3zM916 205h4v6h-4zM923 211h4v8h-4zM954 199h3v6h-3zM978 205h3v6h-3zM978 169h3v6h-3zM988 205h3v6h-3zM1015 205h4v6h-4zM1022 205h3v6h-3zM1022 169h3v6h-3zM1029 187h3v6h-3zM1029 181h3v6h-3zM1029 169h3v6h-3zM1056 181h4v6h-4zM1063 205h3v6h-3zM1066 205h4v6h-4zM1070 193h3v6h-3z"/>
<path fill="#059aae" d="M108 193h4v6h-4zM125 205h4v6h-4zM129 187h3v6h-3zM136 181h3v6h-3zM142 199h4v6h-4zM170 187h3v6h-3zM170 175h3v6h-3zM193 193h4v6h-4zM204 211h3v8h-3zM217 193h4v6h-4zM231 199h3v6h-3zM238 193h3v6h-3zM245 193h3v6h-3zM262 199h3v6h-3zM268 193h4v6h-4zM275 199h4v6h-4zM279 187h3v6h-3zM292 193h4v6h-4zM299 193h4v6h-4zM299 187h4v6h-4zM323 199h3v6h-3zM326 193h4v6h-4zM333 193h4v6h-4zM354 193h3v6h-3zM361 199h3v6h-3zM367 205h4v6h-4zM374 199h4v6h-4zM391 211h4v8h-4zM395 205h3v6h-3zM398 211h3v8h-3zM415 205h4v6h-4zM439 205h3v6h-3zM494 199h3v6h-3zM548 211h3v8h-3zM558 163h4v6h-4zM562 199h3v6h-3zM562 181h3v6h-3zM562 157h3v6h-3zM599 205h4v6h-4zM603 187h3v6h-3zM644 169h3v6h-3zM667 211h4v8h-4zM702 211h3v8h-3zM749 211h4v8h-4zM763 205h3v6h-3zM834 211h4v8h-4zM845 175h3v6h-3zM892 211h4v8h-4zM892 205h4v6h-4zM906 187h4v6h-4zM906 175h4v6h-4zM916 199h4v6h-4zM933 205h4v6h-4zM954 193h3v6h-3zM995 205h3v6h-3zM1005 211h3v8h-3zM1008 175h4v6h-4zM1012 181h3v6h-3zM1015 181h4v6h-4zM1019 205h3v6h-3zM1022 187h3v6h-3zM1022 181h3v6h-3zM1039 193h3v6h-3zM1046 181h3v6h-3zM1066 193h4v6h-4zM1070 199h3v6h-3zM1073 163h4v6h-4z"/>
<path fill="#05a1a3" d="M98 211h3v8h-3zM101 205h4v6h-4zM112 187h3v6h-3zM112 181h3v6h-3zM139 211h3v8h-3zM166 199h4v6h-4zM170 193h3v6h-3zM173 199h3v6h-3zM173 193h3v6h-3zM176 211h4v8h-4zM187 211h3v8h-3zM187 205h3v6h-3zM200 193h4v6h-4zM214 199h3v6h-3zM228 199h3v6h-3zM241 199h4v6h-4zM255 163h3v6h-3zM272 205h3v6h-3zM279 199h3v6h-3zM316 199h4v6h-4zM323 193h3v6h-3zM326 199h4v6h-4zM344 205h3v6h-3zM364 187h3v6h-3zM364 181h3v6h-3zM378 193h3v6h-3zM384 205h4v6h-4zM405 205h3v6h-3zM415 211h4v8h-4zM545 205h3v6h-3zM558 193h4v6h-4zM562 205h3v6h-3zM562 187h3v6h-3zM562 175h3v6h-3zM569 205h3v6h-3zM579 211h3v8h-3zM586 211h3v8h-3zM586 199h3v6h-3zM589 211h3v8h-3zM603 181h3v6h-3zM644 211h3v8h-3zM698 211h4v8h-4zM821 205h3v6h-3zM841 205h4v6h-4zM848 205h4v6h-4zM903 205h3v6h-3zM920 205h3v6h-3zM927 169h3v6h-3zM954 205h3v6h-3zM957 205h4v6h-4zM1002 205h3v6h-3zM1042 205h4v6h-4zM1049 163h4v6h-4zM1060 199h3v6h-3z"/>
<path fill="#07a797" d="M105 211h3v8h-3zM122 205h3v6h-3zM139 205h3v6h-3zM146 205h3v6h-3zM163 205h3v6h-3zM166 193h4v6h-4zM176 199h4v6h-4zM217 169h4v6h-4zM221 199h3v6h-3zM224 199h4v6h-4zM234 193h4v6h-4zM238 211h3v8h-3zM241 211h4v8h-4zM248 199h3v6h-3zM255 193h3v6h-3zM265 199h3v6h-3zM268 199h4v6h-4zM282 199h4v6h-4zM296 211h3v8h-3zM296 199h3v6h-3zM306 199h3v6h-3zM306 193h3v6h-3zM320 199h3v6h-3zM340 211h4v8h-4zM347 193h3v6h-3zM354 205h3v6h-3zM357 211h4v8h-4zM357 205h4v6h-4zM378 211h3v8h-3zM391 205h4v6h-4zM395 211h3v8h-3zM398 193h3v6h-3zM405 211h3v8h-3zM408 211h4v8h-4zM476 193h4v6h-4zM494 211h3v8h-3zM507 211h4v8h-4zM555 163h3v6h-3zM555 157h3v6h-3zM565 205h4v6h-4zM565 193h4v6h-4zM575 175h4v6h-4zM579 199h3v6h-3zM582 211h4v8h-4zM599 199h4v6h-4zM603 193h3v6h-3zM613 193h3v6h-3zM613 175h3v6h-3zM681 205h3v6h-3zM749 205h4v6h-4zM770 211h3v8h-3zM797 211h3v8h-3zM828 211h3v8h-3zM855 211h3v8h-3zM872 211h3v8h-3zM937 211h3v8h-3zM988 199h3v6h-3zM1005 205h3v6h-3zM1008 199h4v6h-4zM1008 193h4v6h-4zM1022 193h3v6h-3zM1056 169h4v6h-4zM1073 181h4v6h-4zM1077 205h3v6h-3z"/>
<path fill="#09ad8c" d="M108 199h4v6h-4zM118 211h4v8h-4zM132 205h4v6h-4zM136 199h3v6h-3zM149 199h4v6h-4zM153 205h3v6h-3zM159 205h4v6h-4zM180 199h3v6h-3zM183 211h4v8h-4zM183 199h4v6h-4zM190 205h3v6h-3zM193 199h4v6h-4zM197 199h3v6h-3zM204 205h3v6h-3zM211 193h3v6h-3zM221 205h3v6h-3zM224 205h4v6h-4zM238 205h3v6h-3zM245 199h3v6h-3zM258 199h4v6h-4zM262 205h3v6h-3zM262 193h3v6h-3zM265 193h3v6h-3zM272 199h3v6h-3zM279 193h3v6h-3zM296 205h3v6h-3zM299 199h4v6h-4zM306 187h3v6h-3zM320 193h3v6h-3zM330 205h3v6h-3zM333 205h4v6h-4zM364 175h3v6h-3zM371 205h3v6h-3zM378 205h3v6h-3zM384 211h4v8h-4zM388 211h3v8h-3zM487 211h3v8h-3zM487 205h3v6h-3zM507 205h4v6h-4zM538 211h3v8h-3zM545 211h3v8h-3zM555 199h3v6h-3zM555 175h3v6h-3zM575 211h4v8h-4zM579 205h3v6h-3zM586 205h3v6h-3zM603 199h3v6h-3zM613 181h3v6h-3zM613 163h3v6h-3zM616 211h4v8h-4zM715 211h4v8h-4zM811 211h3v8h-3zM848 211h4v8h-4zM875 211h4v8h-4zM903 211h3v8h-3zM920 211h3v8h-3zM1008 187h4v6h-4zM1029 205h3v6h-3zM1029 193h3v6h-3zM1039 181h3v6h-3zM1056 199h4v6h-4zM1056 193h4v6h-4zM1056 187h4v6h-4z"/>
<path fill="#0fb581" d="M98 205h3v6h-3zM108 205h4v6h-4zM129 211h3v8h-3zM129 205h3v6h-3zM142 205h4v6h-4zM149 205h4v6h-4zM159 211h4v8h-4zM170 211h3v8h-3zM176 205h4v6h-4zM180 211h3v8h-3zM180 205h3v6h-3zM190 211h3v8h-3zM197 205h3v6h-3zM200 205h4v6h-4zM207 199h4v6h-4zM217 205h4v6h-4zM221 211h3v8h-3zM258 205h4v6h-4zM289 199h3v6h-3zM303 193h3v6h-3zM340 205h4v6h-4zM344 211h3v8h-3zM354 199h3v6h-3zM361 193h3v6h-3zM367 211h4v8h-4zM381 205h3v6h-3zM504 211h3v8h-3zM548 163h3v6h-3zM555 211h3v8h-3zM555 193h3v6h-3zM575 187h4v6h-4zM575 163h4v6h-4zM582 205h4v6h-4zM603 211h3v8h-3zM603 205h3v6h-3zM613 199h3v6h-3zM613 169h3v6h-3zM674 211h4v8h-4zM678 211h3v8h-3zM742 211h4v8h-4zM763 211h3v8h-3zM800 211h4v8h-4zM821 211h3v8h-3zM906 205h4v6h-4zM978 211h3v8h-3zM1015 211h4v8h-4zM1029 199h3v6h-3zM1049 169h4v6h-4zM1053 205h3v6h-3zM1056 205h4v6h-4zM1060 211h3v8h-3zM1066 211h4v8h-4zM1073 187h4v6h-4z"/>
<path fill="#16be78" d="M112 205h3v6h-3zM115 211h3v8h-3zM115 205h3v6h-3zM163 211h3v8h-3zM200 211h4v8h-4zM228 205h3v6h-3zM231 205h3v6h-3zM241 205h4v6h-4zM255 199h3v6h-3zM272 211h3v8h-3zM282 205h4v6h-4zM286 199h3v6h-3zM292 211h4v8h-4zM292 205h4v6h-4zM316 211h4v8h-4zM320 211h3v8h-3zM320 205h3v6h-3zM347 205h3v6h-3zM361 205h3v6h-3zM364 205h3v6h-3zM398 205h3v6h-3zM538 205h3v6h-3zM551 211h4v8h-4zM551 205h4v6h-4zM555 187h3v6h-3zM575 205h4v6h-4zM613 187h3v6h-3zM681 211h3v8h-3zM957 211h4v8h-4zM998 211h4v8h-4zM1019 211h3v8h-3zM1029 211h3v8h-3zM1039 205h3v6h-3zM1070 205h3v6h-3zM1073 199h4v6h-4zM1073 193h4v6h-4zM1073 175h4v6h-4z"/>
<path fill="#1ec86e" d="M101 211h4v8h-4zM108 211h4v8h-4zM132 211h4v8h-4zM146 211h3v8h-3zM183 205h4v6h-4zM224 211h4v8h-4zM228 211h3v8h-3zM234 199h4v6h-4zM245 211h3v8h-3zM245 205h3v6h-3zM248 205h3v6h-3zM282 211h4v8h-4zM309 199h4v6h-4zM323 205h3v6h-3zM330 211h3v8h-3zM347 211h3v8h-3zM350 199h4v6h-4zM361 211h3v8h-3zM371 211h3v8h-3zM381 211h3v8h-3zM555 205h3v6h-3zM555 181h3v6h-3zM558 205h4v6h-4zM572 199h3v6h-3zM575 193h4v6h-4zM613 211h3v8h-3zM613 205h3v6h-3zM787 211h3v8h-3zM817 211h4v8h-4zM906 211h4v8h-4zM954 211h3v8h-3zM995 211h3v8h-3zM1049 193h4v6h-4zM1049 175h4v6h-4zM1056 175h4v6h-4z"/>
<path fill="#2ecd63" d="M112 211h3v8h-3zM112 199h3v6h-3zM125 211h4v8h-4zM136 205h3v6h-3zM197 211h3v8h-3zM214 205h3v6h-3zM248 211h3v8h-3zM262 211h3v8h-3zM265 211h3v8h-3zM268 211h4v8h-4zM275 205h4v6h-4zM326 211h4v8h-4zM326 205h4v6h-4zM333 211h4v8h-4zM354 211h3v8h-3zM374 211h4v8h-4zM558 211h4v8h-4zM841 211h4v8h-4zM988 211h3v8h-3zM1002 211h3v8h-3zM1022 211h3v8h-3zM1049 205h4v6h-4zM1053 211h3v8h-3zM1070 211h3v8h-3zM1073 205h4v6h-4z"/>
<path fill="#3fd358" d="M136 211h3v8h-3zM142 211h4v8h-4zM166 205h4v6h-4zM170 205h3v6h-3zM173 205h3v6h-3zM193 205h4v6h-4zM214 211h3v8h-3zM231 211h3v8h-3zM234 211h4v8h-4zM234 205h4v6h-4zM251 199h4v6h-4zM275 211h4v8h-4zM286 211h3v8h-3zM289 205h3v6h-3zM299 211h4v8h-4zM316 205h4v6h-4zM562 211h3v8h-3zM572 175h3v6h-3zM572 169h3v6h-3zM575 199h4v6h-4zM1049 199h4v6h-4zM1049 187h4v6h-4zM1049 181h4v6h-4zM1056 211h4v8h-4z"/>
<path fill="#53da4a" d="M122 211h3v8h-3zM149 211h4v8h-4zM156 211h3v8h-3zM156 205h3v6h-3zM173 211h3v8h-3zM217 211h4v8h-4zM251 205h4v6h-4zM255 205h3v6h-3zM258 211h4v8h-4zM265 205h3v6h-3zM268 205h4v6h-4zM279 205h3v6h-3zM286 205h3v6h-3zM289 211h3v8h-3zM299 205h4v6h-4zM309 211h4v8h-4zM309 205h4v6h-4zM323 211h3v8h-3zM364 211h3v8h-3zM374 205h4v6h-4zM572 187h3v6h-3zM572 181h3v6h-3zM916 211h4v8h-4zM1039 211h3v8h-3zM1049 211h4v8h-4z"/>
<path fill="#6ee437" d="M193 211h4v8h-4zM211 211h3v8h-3zM211 205h3v6h-3zM279 211h3v8h-3zM303 205h3v6h-3zM350 205h4v6h-4zM572 205h3v6h-3zM1042 211h4v8h-4zM1077 211h3v8h-3z"/>
<path fill="#84ea29" d="M255 211h3v8h-3zM303 211h3v8h-3zM306 211h3v8h-3zM572 211h3v8h-3zM572 193h3v6h-3z"/>
<path fill="#99f01d" d="M166 211h4v8h-4zM207 205h4v6h-4zM350 211h4v8h-4zM572 163h3v6h-3z"/>
<path fill="#aaee13" d="M207 211h4v8h-4zM251 211h4v8h-4zM306 205h3v6h-3z"/>
<path fill="#bbec0a" d="M1073 211h4v8h-4z"/>
<rect x="1092" y="30.0" width="12" height="190.0" fill="url(#cb)"/>
<rect x="1104" y="30" width="1" height="190" fill="#2a2a2a"/>
<rect x="1104" y="219" width="4" height="1" fill="#2a2a2a"/>
<rect x="1104" y="214" width="4" height="1" fill="#2a2a2a"/>
<rect x="1104" y="210" width="4" height="1" fill="#2a2a2a"/>
<rect x="1104" y="207" width="4" height="1" fill="#2a2a2a"/>
<rect x="1104" y="204" width="4" height="1" fill="#2a2a2a"/>
<rect x="1104" y="201" width="8" height="1" fill="#2a2a2a"/>
<rect x="1104" y="184" width="4" height="1" fill="#2a2a2a"/>
<rect x="1104" y="174" width="4" height="1" fill="#2a2a2a"/>
<rect x="1104" y="167" width="4" height="1" fill="#2a2a2a"/>
<rect x="1104" y="161" width="4" height="1" fill="#2a2a2a"/>
<rect x="1104" y="157" width="4" height="1" fill="#2a2a2a"/>
<rect x="1104" y="153" width="4" height="1" fill="#2a2a2a"/>
<rect x="1104" y="150" width="4" height="1" fill="#2a2a2a"/>
<rect x="1104" y="147" width="4" height="1" fill="#2a2a2a"/>
<rect x="1104" y="144" width="8" height="1" fill="#2a2a2a"/>
<rect x="1104" y="127" width="4" height="1" fill="#2a2a2a"/>
<rect x="1104" y="117" width="4" height="1" fill="#2a2a2a"/>
<rect x="1104" y="110" width="4" height="1" fill="#2a2a2a"/>
<rect x="1104" y="104" width="4" height="1" fill="#2a2a2a"/>
<rect x="1104" y="100" width="4" height="1" fill="#2a2a2a"/>
<rect x="1104" y="96" width="4" height="1" fill="#2a2a2a"/>
<rect x="1104" y="92" width="4" height="1" fill="#2a2a2a"/>
<rect x="1104" y="89" width="4" height="1" fill="#2a2a2a"/>
<rect x="1104" y="87" width="8" height="1" fill="#2a2a2a"/>
<rect x="1104" y="70" width="4" height="1" fill="#2a2a2a"/>
<rect x="1104" y="59" width="4" height="1" fill="#2a2a2a"/>
<rect x="1104" y="52" width="4" height="1" fill="#2a2a2a"/>
<rect x="1104" y="47" width="4" height="1" fill="#2a2a2a"/>
<rect x="1104" y="42" width="4" height="1" fill="#2a2a2a"/>
<rect x="1104" y="38" width="4" height="1" fill="#2a2a2a"/>
<rect x="1104" y="35" width="4" height="1" fill="#2a2a2a"/>
<rect x="1104" y="32" width="4" height="1" fill="#2a2a2a"/>
<rect x="1104" y="30" width="8" height="1" fill="#2a2a2a"/>
<text x="1117.0" y="36.9" text-anchor="start" font-size="12">10<tspan dy="-6" font-size="11.5">-9</tspan></text>
<text x="1117.0" y="94.2" text-anchor="start" font-size="12">10<tspan dy="-6" font-size="11.5">-10</tspan></text>
<text x="1117.0" y="151.5" text-anchor="start" font-size="12">10<tspan dy="-6" font-size="11.5">-11</tspan></text>
<text x="1117.0" y="208.8" text-anchor="start" font-size="12">10<tspan dy="-6" font-size="11.5">-12</tspan></text>
<text class="t" transform="translate(1163,124) rotate(90)" text-anchor="middle">pressure dyne/cm^2</text>
<rect x="95" y="224" width="986" height="193" fill="#000"/>
<rect x="91" y="406" width="4" height="1" fill="#2a2a2a"/>
<rect x="91" y="390" width="4" height="1" fill="#2a2a2a"/>
<rect x="91" y="378" width="4" height="1" fill="#2a2a2a"/>
<rect x="91" y="367" width="4" height="1" fill="#2a2a2a"/>
<rect x="91" y="359" width="4" height="1" fill="#2a2a2a"/>
<rect x="91" y="351" width="4" height="1" fill="#2a2a2a"/>
<rect x="91" y="345" width="4" height="1" fill="#2a2a2a"/>
<rect x="87" y="339" width="8" height="1" fill="#2a2a2a"/>
<rect x="91" y="333" width="4" height="1" fill="#2a2a2a"/>
<rect x="91" y="329" width="4" height="1" fill="#2a2a2a"/>
<rect x="91" y="324" width="4" height="1" fill="#2a2a2a"/>
<rect x="91" y="320" width="4" height="1" fill="#2a2a2a"/>
<rect x="91" y="316" width="4" height="1" fill="#2a2a2a"/>
<rect x="91" y="312" width="4" height="1" fill="#2a2a2a"/>
<rect x="91" y="309" width="4" height="1" fill="#2a2a2a"/>
<rect x="91" y="306" width="4" height="1" fill="#2a2a2a"/>
<rect x="91" y="303" width="4" height="1" fill="#2a2a2a"/>
<rect x="87" y="300" width="8" height="1" fill="#2a2a2a"/>
<rect x="91" y="297" width="4" height="1" fill="#2a2a2a"/>
<rect x="91" y="295" width="4" height="1" fill="#2a2a2a"/>
<rect x="91" y="292" width="4" height="1" fill="#2a2a2a"/>
<rect x="91" y="290" width="4" height="1" fill="#2a2a2a"/>
<rect x="91" y="287" width="4" height="1" fill="#2a2a2a"/>
<rect x="91" y="285" width="4" height="1" fill="#2a2a2a"/>
<rect x="91" y="283" width="4" height="1" fill="#2a2a2a"/>
<rect x="91" y="281" width="4" height="1" fill="#2a2a2a"/>
<rect x="91" y="279" width="4" height="1" fill="#2a2a2a"/>
<rect x="87" y="277" width="8" height="1" fill="#2a2a2a"/>
<rect x="91" y="275" width="4" height="1" fill="#2a2a2a"/>
<rect x="91" y="274" width="4" height="1" fill="#2a2a2a"/>
<rect x="91" y="272" width="4" height="1" fill="#2a2a2a"/>
<rect x="91" y="270" width="4" height="1" fill="#2a2a2a"/>
<rect x="91" y="269" width="4" height="1" fill="#2a2a2a"/>
<rect x="91" y="267" width="4" height="1" fill="#2a2a2a"/>
<rect x="91" y="266" width="4" height="1" fill="#2a2a2a"/>
<rect x="91" y="264" width="4" height="1" fill="#2a2a2a"/>
<rect x="91" y="263" width="4" height="1" fill="#2a2a2a"/>
<rect x="87" y="261" width="8" height="1" fill="#2a2a2a"/>
<rect x="91" y="260" width="4" height="1" fill="#2a2a2a"/>
<rect x="91" y="258" width="4" height="1" fill="#2a2a2a"/>
<rect x="91" y="257" width="4" height="1" fill="#2a2a2a"/>
<rect x="91" y="256" width="4" height="1" fill="#2a2a2a"/>
<rect x="91" y="255" width="4" height="1" fill="#2a2a2a"/>
<rect x="91" y="253" width="4" height="1" fill="#2a2a2a"/>
<rect x="91" y="252" width="4" height="1" fill="#2a2a2a"/>
<rect x="91" y="251" width="4" height="1" fill="#2a2a2a"/>
<rect x="91" y="250" width="4" height="1" fill="#2a2a2a"/>
<rect x="87" y="249" width="8" height="1" fill="#2a2a2a"/>
<rect x="91" y="248" width="4" height="1" fill="#2a2a2a"/>
<rect x="91" y="246" width="4" height="1" fill="#2a2a2a"/>
<rect x="91" y="245" width="4" height="1" fill="#2a2a2a"/>
<rect x="91" y="244" width="4" height="1" fill="#2a2a2a"/>
<rect x="91" y="243" width="4" height="1" fill="#2a2a2a"/>
<rect x="91" y="242" width="4" height="1" fill="#2a2a2a"/>
<rect x="91" y="241" width="4" height="1" fill="#2a2a2a"/>
<rect x="91" y="240" width="4" height="1" fill="#2a2a2a"/>
<rect x="91" y="239" width="4" height="1" fill="#2a2a2a"/>
<rect x="87" y="238" width="8" height="1" fill="#2a2a2a"/>
<rect x="91" y="237" width="4" height="1" fill="#2a2a2a"/>
<rect x="91" y="237" width="4" height="1" fill="#2a2a2a"/>
<rect x="91" y="236" width="4" height="1" fill="#2a2a2a"/>
<rect x="91" y="235" width="4" height="1" fill="#2a2a2a"/>
<rect x="91" y="234" width="4" height="1" fill="#2a2a2a"/>
<rect x="91" y="233" width="4" height="1" fill="#2a2a2a"/>
<rect x="91" y="232" width="4" height="1" fill="#2a2a2a"/>
<rect x="91" y="231" width="4" height="1" fill="#2a2a2a"/>
<rect x="91" y="231" width="4" height="1" fill="#2a2a2a"/>
<rect x="87" y="230" width="8" height="1" fill="#2a2a2a"/>
<rect x="91" y="229" width="4" height="1" fill="#2a2a2a"/>
<rect x="91" y="228" width="4" height="1" fill="#2a2a2a"/>
<rect x="91" y="227" width="4" height="1" fill="#2a2a2a"/>
<rect x="91" y="227" width="4" height="1" fill="#2a2a2a"/>
<rect x="91" y="226" width="4" height="1" fill="#2a2a2a"/>
<rect x="91" y="225" width="4" height="1" fill="#2a2a2a"/>
<rect x="91" y="224" width="4" height="1" fill="#2a2a2a"/>
<rect x="91" y="224" width="4" height="1" fill="#2a2a2a"/>
<text x="81.3" y="234.6" text-anchor="end" font-size="12" >700.</text>
<text x="81.3" y="243.2" text-anchor="end" font-size="12" >600.</text>
<text x="81.3" y="253.4" text-anchor="end" font-size="12" >500.</text>
<text x="81.3" y="265.9" text-anchor="end" font-size="12" >400.</text>
<text x="81.3" y="282.1" text-anchor="end" font-size="12" >300.</text>
<text x="81.3" y="304.8" text-anchor="end" font-size="12" >200.</text>
<text x="81.3" y="343.6" text-anchor="end" font-size="12" >100.</text>
<text class="t" transform="translate(46.5,320) rotate(-90)" text-anchor="middle">Energy (keV)</text>
<rect x="539" y="385" width="1" height="5" fill="#1010b4"/>
<rect x="539" y="393" width="1" height="5" fill="#1010b4"/>
<rect x="540" y="388" width="1" height="3" fill="#1414c8"/>
<rect x="541" y="383" width="1" height="8" fill="#0c0c90"/>
<rect x="542" y="383" width="1" height="8" fill="#1010b4"/>
<rect x="542" y="397" width="1" height="3" fill="#0a0a70"/>
<rect x="543" y="386" width="1" height="3" fill="#1414c8"/>
<rect x="543" y="392" width="1" height="5" fill="#0c0c90"/>
<rect x="544" y="386" width="1" height="5" fill="#1010b4"/>
<rect x="544" y="393" width="1" height="8" fill="#0a0a70"/>
<rect x="545" y="383" width="1" height="8" fill="#1010b4"/>
<rect x="545" y="392" width="1" height="10" fill="#0c0c90"/>
<rect x="546" y="383" width="1" height="8" fill="#1010b4"/>
<rect x="546" y="393" width="1" height="5" fill="#0a0a70"/>
<rect x="547" y="386" width="1" height="5" fill="#1010b4"/>
<rect x="547" y="392" width="1" height="10" fill="#1414c8"/>
<rect x="566" y="392" width="1" height="10" fill="#0c0c90"/>
<rect x="567" y="383" width="1" height="3" fill="#1010b4"/>
<rect x="567" y="393" width="1" height="8" fill="#1414c8"/>
<rect x="568" y="396" width="1" height="5" fill="#0a0a70"/>
<rect x="569" y="398" width="1" height="3" fill="#1414c8"/>
<rect x="571" y="383" width="1" height="8" fill="#1010b4"/>
<rect x="571" y="392" width="1" height="10" fill="#0a0a70"/>
<rect x="572" y="387" width="1" height="3" fill="#0a0a70"/>
<rect x="572" y="392" width="1" height="10" fill="#0a0a70"/>
<rect x="574" y="385" width="1" height="5" fill="#1414c8"/>
<rect x="662" y="394" width="1" height="5" fill="#1010b4"/>
<rect x="663" y="383" width="1" height="5" fill="#0c0c90"/>
<rect x="663" y="394" width="1" height="8" fill="#0a0a70"/>
<rect x="664" y="385" width="1" height="3" fill="#0c0c90"/>
<rect x="665" y="383" width="1" height="8" fill="#1010b4"/>
<rect x="665" y="393" width="1" height="5" fill="#1010b4"/>
<rect x="683" y="383" width="1" height="8" fill="#1010b4"/>
<rect x="684" y="383" width="1" height="8" fill="#1010b4"/>
<rect x="685" y="394" width="1" height="8" fill="#1414c8"/>
<rect x="686" y="383" width="1" height="8" fill="#0a0a70"/>
<rect x="686" y="392" width="1" height="10" fill="#1414c8"/>
<rect x="730" y="383" width="1" height="8" fill="#0c0c90"/>
<rect x="730" y="392" width="1" height="10" fill="#1010b4"/>
<rect x="789" y="383" width="1" height="8" fill="#1010b4"/>
<rect x="789" y="392" width="1" height="8" fill="#0c0c90"/>
<rect x="790" y="383" width="1" height="3" fill="#0c0c90"/>
<rect x="790" y="392" width="1" height="8" fill="#0c0c90"/>
<rect x="791" y="392" width="1" height="10" fill="#1010b4"/>
<rect x="792" y="383" width="1" height="8" fill="#1010b4"/>
<rect x="792" y="392" width="1" height="8" fill="#1010b4"/>
<rect x="793" y="383" width="1" height="8" fill="#1414c8"/>
<rect x="793" y="392" width="1" height="10" fill="#0a0a70"/>
<rect x="794" y="383" width="1" height="8" fill="#1010b4"/>
<rect x="794" y="396" width="1" height="3" fill="#0a0a70"/>
<rect x="795" y="383" width="1" height="3" fill="#0a0a70"/>
<rect x="795" y="394" width="1" height="3" fill="#0c0c90"/>
<rect x="796" y="386" width="1" height="5" fill="#0c0c90"/>
<rect x="796" y="392" width="1" height="10" fill="#0a0a70"/>
<rect x="797" y="385" width="1" height="3" fill="#1010b4"/>
<rect x="797" y="394" width="1" height="3" fill="#1010b4"/>
<rect x="810" y="384" width="1" height="5" fill="#0c0c90"/>
<rect x="810" y="397" width="1" height="5" fill="#1414c8"/>
<rect x="862" y="384" width="1" height="5" fill="#0a0a70"/>
<rect x="862" y="394" width="1" height="5" fill="#0c0c90"/>
<rect x="933" y="388" width="1" height="3" fill="#1414c8"/>
<rect x="934" y="383" width="1" height="8" fill="#0c0c90"/>
<rect x="951" y="397" width="1" height="3" fill="#0a0a70"/>
<rect x="953" y="392" width="1" height="10" fill="#0a0a70"/>
<rect x="954" y="384" width="1" height="5" fill="#1010b4"/>
<rect x="954" y="392" width="1" height="10" fill="#1010b4"/>
<rect x="955" y="388" width="1" height="3" fill="#0a0a70"/>
<rect x="965" y="383" width="1" height="8" fill="#1414c8"/>
<rect x="966" y="384" width="1" height="3" fill="#1010b4"/>
<rect x="967" y="392" width="1" height="8" fill="#1414c8"/>
<rect x="1014" y="384" width="1" height="5" fill="#1414c8"/>
<rect x="1014" y="393" width="1" height="3" fill="#0a0a70"/>
<rect x="1015" y="384" width="1" height="3" fill="#0a0a70"/>
<rect x="1018" y="384" width="1" height="3" fill="#1010b4"/>
<rect x="1020" y="392" width="1" height="10" fill="#1414c8"/>
<rect x="1035" y="383" width="1" height="8" fill="#1414c8"/>
<rect x="1037" y="383" width="1" height="8" fill="#0c0c90"/>
<rect x="1038" y="392" width="1" height="8" fill="#0a0a70"/>
<rect x="1039" y="385" width="1" height="3" fill="#1010b4"/>
<rect x="1040" y="383" width="1" height="8" fill="#0a0a70"/>
<rect x="1040" y="392" width="1" height="8" fill="#1010b4"/>
<rect x="1041" y="386" width="1" height="5" fill="#0c0c90"/>
<rect x="1041" y="392" width="1" height="8" fill="#0a0a70"/>
<rect x="1042" y="387" width="1" height="3" fill="#0a0a70"/>
<rect x="1042" y="398" width="1" height="3" fill="#0a0a70"/>
<rect x="1043" y="383" width="1" height="8" fill="#0c0c90"/>
<rect x="1044" y="393" width="1" height="3" fill="#0a0a70"/>
<rect x="1045" y="393" width="1" height="5" fill="#0a0a70"/>
<rect x="1046" y="395" width="1" height="3" fill="#1010b4"/>
<rect x="1048" y="385" width="1" height="5" fill="#1414c8"/>
<rect x="1049" y="386" width="1" height="5" fill="#1414c8"/>
<rect x="1050" y="383" width="1" height="3" fill="#0c0c90"/>
<rect x="1050" y="392" width="1" height="10" fill="#1010b4"/>
<rect x="1051" y="392" width="1" height="5" fill="#0c0c90"/>
<rect x="1052" y="383" width="1" height="8" fill="#1414c8"/>
<rect x="1052" y="393" width="1" height="8" fill="#1414c8"/>
<rect x="1053" y="385" width="1" height="3" fill="#0c0c90"/>
<rect x="1053" y="392" width="1" height="10" fill="#1414c8"/>
<rect x="1054" y="395" width="1" height="3" fill="#1414c8"/>
<rect x="1055" y="384" width="1" height="5" fill="#0a0a70"/>
<rect x="1055" y="394" width="1" height="8" fill="#1010b4"/>
<rect x="1056" y="395" width="1" height="5" fill="#1010b4"/>
<rect x="1058" y="392" width="1" height="10" fill="#1414c8"/>
<rect x="1059" y="397" width="1" height="5" fill="#0a0a70"/>
<rect x="1060" y="383" width="1" height="8" fill="#1010b4"/>
<rect x="1061" y="383" width="1" height="8" fill="#0a0a70"/>
<rect x="1061" y="392" width="1" height="10" fill="#1414c8"/>
<rect x="1062" y="386" width="1" height="5" fill="#0c0c90"/>
<rect x="1062" y="396" width="1" height="3" fill="#1010b4"/>
<rect x="1063" y="388" width="1" height="3" fill="#0c0c90"/>
<rect x="1064" y="383" width="1" height="8" fill="#1010b4"/>
<rect x="1064" y="398" width="1" height="3" fill="#1414c8"/>
<rect x="1065" y="386" width="1" height="3" fill="#1414c8"/>
<rect x="1065" y="396" width="1" height="5" fill="#0c0c90"/>
<rect x="1066" y="383" width="1" height="8" fill="#1414c8"/>
<rect x="1066" y="392" width="1" height="10" fill="#1010b4"/>
<rect x="1068" y="383" width="1" height="8" fill="#0c0c90"/>
<rect x="1068" y="395" width="1" height="5" fill="#1010b4"/>
<rect x="1078" y="383" width="1" height="8" fill="#0c0c90"/>
<rect x="1078" y="392" width="1" height="10" fill="#1414c8"/>
<rect x="1092" y="226" width="12" height="191" fill="url(#cb)"/>
<rect x="1104" y="226" width="1" height="192" fill="#2a2a2a"/>
<rect x="1104" y="415" width="4" height="1" fill="#2a2a2a"/>
<rect x="1104" y="411" width="4" height="1" fill="#2a2a2a"/>
<rect x="1104" y="407" width="4" height="1" fill="#2a2a2a"/>
<rect x="1104" y="404" width="4" height="1" fill="#2a2a2a"/>
<rect x="1104" y="401" width="4" height="1" fill="#2a2a2a"/>
<rect x="1104" y="398" width="8" height="1" fill="#2a2a2a"/>
<rect x="1104" y="381" width="4" height="1" fill="#2a2a2a"/>
<rect x="1104" y="371" width="4" height="1" fill="#2a2a2a"/>
<rect x="1104" y="363" width="4" height="1" fill="#2a2a2a"/>
<rect x="1104" y="358" width="4" height="1" fill="#2a2a2a"/>
<rect x="1104" y="353" width="4" height="1" fill="#2a2a2a"/>
<rect x="1104" y="349" width="4" height="1" fill="#2a2a2a"/>
<rect x="1104" y="346" width="4" height="1" fill="#2a2a2a"/>
<rect x="1104" y="343" width="4" height="1" fill="#2a2a2a"/>
<rect x="1104" y="340" width="8" height="1" fill="#2a2a2a"/>
<rect x="1104" y="323" width="4" height="1" fill="#2a2a2a"/>
<rect x="1104" y="313" width="4" height="1" fill="#2a2a2a"/>
<rect x="1104" y="306" width="4" height="1" fill="#2a2a2a"/>
<rect x="1104" y="300" width="4" height="1" fill="#2a2a2a"/>
<rect x="1104" y="296" width="4" height="1" fill="#2a2a2a"/>
<rect x="1104" y="292" width="4" height="1" fill="#2a2a2a"/>
<rect x="1104" y="288" width="4" height="1" fill="#2a2a2a"/>
<rect x="1104" y="285" width="4" height="1" fill="#2a2a2a"/>
<rect x="1104" y="283" width="8" height="1" fill="#2a2a2a"/>
<rect x="1104" y="265" width="4" height="1" fill="#2a2a2a"/>
<rect x="1104" y="255" width="4" height="1" fill="#2a2a2a"/>
<rect x="1104" y="248" width="4" height="1" fill="#2a2a2a"/>
<rect x="1104" y="242" width="4" height="1" fill="#2a2a2a"/>
<rect x="1104" y="238" width="4" height="1" fill="#2a2a2a"/>
<rect x="1104" y="234" width="4" height="1" fill="#2a2a2a"/>
<rect x="1104" y="231" width="4" height="1" fill="#2a2a2a"/>
<rect x="1104" y="228" width="4" height="1" fill="#2a2a2a"/>
<rect x="1104" y="225" width="8" height="1" fill="#2a2a2a"/>
<text x="1117.0" y="233.1" text-anchor="start" font-size="12">10<tspan dy="-6" font-size="11.5">-9</tspan></text>
<text x="1117.0" y="290.8" text-anchor="start" font-size="12">10<tspan dy="-6" font-size="11.5">-10</tspan></text>
<text x="1117.0" y="348.5" text-anchor="start" font-size="12">10<tspan dy="-6" font-size="11.5">-11</tspan></text>
<text x="1117.0" y="406.2" text-anchor="start" font-size="12">10<tspan dy="-6" font-size="11.5">-12</tspan></text>
<text class="t" transform="translate(1163,319) rotate(90)" text-anchor="middle">pressure dyne/cm^2</text>
<rect x="95.5" y="420.5" width="985" height="89.0" fill="#fff" stroke="#2a2a2a" stroke-width="1"/>
<rect x="91" y="508" width="4" height="1" fill="#2a2a2a"/>
<rect x="91" y="507" width="4" height="1" fill="#2a2a2a"/>
<rect x="91" y="505" width="4" height="1" fill="#2a2a2a"/>
<rect x="91" y="504" width="4" height="1" fill="#2a2a2a"/>
<rect x="91" y="503" width="4" height="1" fill="#2a2a2a"/>
<rect x="87" y="502" width="8" height="1" fill="#2a2a2a"/>
<rect x="91" y="495" width="4" height="1" fill="#2a2a2a"/>
<rect x="91" y="491" width="4" height="1" fill="#2a2a2a"/>
<rect x="91" y="489" width="4" height="1" fill="#2a2a2a"/>
<rect x="91" y="487" width="4" height="1" fill="#2a2a2a"/>
<rect x="91" y="485" width="4" height="1" fill="#2a2a2a"/>
<rect x="91" y="483" width="4" height="1" fill="#2a2a2a"/>
<rect x="91" y="482" width="4" height="1" fill="#2a2a2a"/>
<rect x="91" y="481" width="4" height="1" fill="#2a2a2a"/>
<rect x="87" y="480" width="8" height="1" fill="#2a2a2a"/>
<rect x="91" y="473" width="4" height="1" fill="#2a2a2a"/>
<rect x="91" y="470" width="4" height="1" fill="#2a2a2a"/>
<rect x="91" y="467" width="4" height="1" fill="#2a2a2a"/>
<rect x="91" y="465" width="4" height="1" fill="#2a2a2a"/>
<rect x="91" y="463" width="4" height="1" fill="#2a2a2a"/>
<rect x="91" y="461" width="4" height="1" fill="#2a2a2a"/>
<rect x="91" y="460" width="4" height="1" fill="#2a2a2a"/>
<rect x="91" y="459" width="4" height="1" fill="#2a2a2a"/>
<rect x="87" y="458" width="8" height="1" fill="#2a2a2a"/>
<rect x="91" y="452" width="4" height="1" fill="#2a2a2a"/>
<rect x="91" y="448" width="4" height="1" fill="#2a2a2a"/>
<rect x="91" y="445" width="4" height="1" fill="#2a2a2a"/>
<rect x="91" y="443" width="4" height="1" fill="#2a2a2a"/>
<rect x="91" y="441" width="4" height="1" fill="#2a2a2a"/>
<rect x="91" y="440" width="4" height="1" fill="#2a2a2a"/>
<rect x="91" y="438" width="4" height="1" fill="#2a2a2a"/>
<rect x="91" y="437" width="4" height="1" fill="#2a2a2a"/>
<rect x="87" y="436" width="8" height="1" fill="#2a2a2a"/>
<rect x="91" y="430" width="4" height="1" fill="#2a2a2a"/>
<rect x="91" y="426" width="4" height="1" fill="#2a2a2a"/>
<rect x="91" y="423" width="4" height="1" fill="#2a2a2a"/>
<rect x="91" y="421" width="4" height="1" fill="#2a2a2a"/>
<text x="82.0" y="444.3" text-anchor="end" font-size="12">10<tspan dy="-6" font-size="11.5">-9</tspan></text>
<text x="82.0" y="466.2" text-anchor="end" font-size="12">10<tspan dy="-6" font-size="11.5">-10</tspan></text>
<text x="82.0" y="488.1" text-anchor="end" font-size="12">10<tspan dy="-6" font-size="11.5">-11</tspan></text>
<text x="82.0" y="510.0" text-anchor="end" font-size="12">10<tspan dy="-6" font-size="11.5">-12</tspan></text>
<text class="t" transform="translate(35.5,466) rotate(-90)" text-anchor="middle">P dyn/cm^2</text>
<polyline fill="none" stroke="#0000ff" stroke-width="1.3" stroke-linejoin="round" points="101.2,472.5 104.2,475.2 107.5,463.2 114.2,468.8 118.0,479.2 121.2,474.5 125.0,471.5 128.2,467.5 131.5,476.0 135.0,468.2 138.0,472.2 142.2,483.0 145.5,476.8 152.5,472.2 155.5,472.5 158.8,474.2 162.2,474.2 166.5,468.2 169.5,470.2 172.5,468.2 176.2,471.0 179.5,472.5 183.8,467.5 186.8,473.2 190.5,470.2 195.8,466.5 200.0,466.2 204.0,468.2 207.2,466.2 210.5,472.2 214.2,470.2 221.0,470.2 224.8,466.2 227.0,467.8 230.5,477.2 232.5,476.5 239.2,471.5 244.2,468.2 247.2,469.5 251.2,464.2 254.5,471.2 259.5,464.2 262.2,464.2 265.5,467.2 268.5,464.2 271.8,470.2 275.2,467.5 282.5,476.0 286.0,475.2 289.5,475.2 293.0,470.2 295.5,471.2 299.5,464.2 302.8,461.2 306.8,464.8 309.5,462.0 316.2,473.2 320.0,464.2 326.5,460.2 330.5,466.2 336.8,472.2 347.5,472.2 354.2,476.0 357.5,477.2 360.5,473.2 364.2,476.2 367.5,473.2 371.2,471.5 374.5,476.0 377.5,465.2 381.8,475.2 385.0,468.2 388.5,463.2 391.8,468.2 394.2,470.2 398.0,494.2 401.2,484.2 405.2,472.2 408.0,480.2 411.2,489.2 415.5,475.2 418.0,475.2 422.5,488.2 429.0,486.2 432.2,489.2 435.0,494.2 439.5,483.2 442.5,481.2 449.2,489.2 456.0,489.2 466.2,505.2 473.0,486.2 477.2,475.2 480.5,469.2 483.8,478.2 487.5,481.2 494.0,472.2 497.5,461.2 504.2,476.2 507.5,489.2 514.2,485.2 517.5,481.2 524.2,482.2 528.5,497.2 541.2,459.2 548.8,467.2 552.5,478.2 555.5,472.2 558.5,476.2 562.5,473.2 566.2,462.2 569.5,458.2 572.5,467.2 576.2,467.2 579.2,469.2 582.5,478.2 586.2,472.2 599.5,465.2 602.5,470.2 606.5,482.2 613.5,463.2 620.5,467.2 627.5,481.2 631.0,492.2 634.5,483.2 637.5,478.2 640.0,479.2 645.0,496.2 648.0,494.2 653.8,492.2 661.8,479.2 665.0,475.2 668.0,474.2 670.0,496.2 671.8,496.2 675.0,490.2 678.5,476.2 681.8,477.2 685.0,476.2 688.8,488.2 692.0,480.2 695.5,508.8 702.5,476.2 708.8,487.2 712.0,482.2 722.2,487.2 733.8,472.2 743.2,488.2 757.2,473.2 763.8,495.2 767.2,482.2 770.5,497.2 773.8,488.2 777.5,508.8 780.8,487.2 784.8,498.2 794.5,469.2 801.0,477.2 804.2,475.2 808.5,500.2 815.0,476.2 825.0,475.2 832.0,495.2 842.0,475.2 845.5,481.2 848.5,481.2 859.2,488.2 862.5,476.2 866.2,475.2 869.2,488.2 873.0,482.2 876.2,480.2 880.0,472.2 883.2,482.2 886.8,478.2 889.5,480.2 893.0,474.2 896.5,480.2 903.5,479.2 913.8,487.2 924.5,474.2 927.5,472.2 931.0,474.2 934.5,466.2 938.0,477.2 945.0,476.2 948.2,470.2 951.8,470.2 955.0,473.2 958.2,471.2 965.0,480.2 968.8,470.2 970.0,472.2 972.5,470.2 976.2,475.2 980.0,477.2 983.0,481.2 986.2,474.2 989.5,471.2 993.0,470.2 996.2,472.2 999.5,468.2 1003.2,472.2 1006.2,486.2 1010.0,474.2 1016.2,472.2 1021.2,474.2 1027.5,475.2 1030.5,470.2 1034.2,472.2 1037.5,472.2 1041.2,475.2 1045.0,481.2 1050.0,469.2 1055.0,470.2 1062.0,463.2 1068.8,465.2 1072.0,474.2 1075.0,474.2 1078.5,471.2"/>
<path fill="none" stroke="#00ee00" stroke-width="1.3" stroke-linejoin="round" d="M148.5 508.8L148.5 500.0M241.2 508.8L241.2 501.2M254.5 508.8L254.5 506.2M340.5 508.8L340.5 497.0M261.2 508.8L261.2 507.0L265.0 506.5L265.0 508.8M271.2 508.8L271.2 506.5L275.0 506.5L275.0 508.8M312.5 508.8L312.5 504.2L316.2 506.2L316.2 508.8M367.5 508.8L371.2 488.2L371.8 508.8M377.0 508.8L377.5 501.2L384.5 478.2L387.0 490.2L388.5 495.2L388.5 508.8M394.2 508.8L394.2 497.2L397.5 484.2L401.2 481.2L408.0 478.2L412.5 490.2L415.5 483.2L418.0 483.2L425.2 494.2L429.0 488.2L432.2 497.2L435.0 476.2L439.0 475.2L446.2 484.2L449.2 479.2L453.2 487.2L453.2 508.8M473.2 508.8L473.2 477.2L477.2 482.2L488.0 499.2L494.8 471.2L500.8 502.8L500.8 508.8M507.5 508.8L507.5 497.2L517.5 479.2L524.2 489.2L524.2 508.8M531.2 508.8L541.2 482.2L545.2 495.2L548.8 496.2L548.8 508.8M572.2 508.8L572.2 503.2M582.2 508.8L582.2 484.2M599.5 508.8L599.5 499.2M610.2 508.8L610.2 497.2L623.0 484.2L623.0 508.8M630.0 508.8L630.0 489.2L634.5 483.2L637.5 495.2L641.0 486.2L644.5 495.2L644.5 508.8M661.8 508.8L661.8 470.2L665.0 474.2L668.8 501.2L668.8 508.8M678.5 508.8L678.5 467.2L681.8 475.2L685.0 469.2L688.0 470.2L688.8 508.8M709.2 508.8L709.2 477.2L712.5 495.2L719.5 477.2L722.2 491.2L729.5 467.2L732.5 499.2L736.2 488.2L736.2 508.8M746.2 508.8L746.2 475.2L750.0 479.2L757.2 496.2L757.2 508.8M770.5 508.8L770.5 472.2M787.5 508.8L787.5 471.2L791.2 470.2L798.0 473.2L801.0 479.2L808.5 467.2L811.8 469.2L815.0 480.2L818.5 473.2L821.8 486.2L828.5 484.2L835.2 475.2L838.8 484.2L845.5 484.2L849.2 490.2L849.2 508.8M859.2 508.8L859.2 481.2L863.2 478.2L866.2 493.2L880.0 466.2L883.2 490.2L892.0 475.2L893.0 484.2L900.2 489.2L904.2 469.2L904.2 508.8M914.5 508.8L914.5 485.2L920.8 483.2L924.5 490.2L931.0 473.2L934.5 490.2L938.0 496.2L941.5 485.2L948.2 480.2L955.0 487.2L958.8 470.2L965.0 487.2L970.0 485.2L975.0 483.2L979.5 493.2L986.2 470.2L993.0 500.2L999.5 475.2L1003.2 481.2L1003.2 508.8M1009.2 508.8L1009.2 484.2L1013.8 478.2L1017.5 477.2L1021.2 474.2L1024.2 486.2L1027.5 506.2L1034.2 479.2L1037.5 498.2L1041.2 479.2L1045.0 486.2L1050.0 477.2L1058.5 467.2L1062.0 468.2L1068.8 478.2L1072.0 465.2L1074.5 480.2"/>
<polyline fill="none" stroke="#ff0000" stroke-width="1.3" stroke-linejoin="round" points="95.5,485.6 97.3,486.4 99.1,487.1 100.9,485.9 102.7,485.6 104.5,485.6 106.3,487.1 108.1,485.6 109.9,486.3 111.7,486.2 113.5,486.3 115.3,486.3 117.1,485.8 118.9,485.5 120.7,486.5 122.5,486.9 124.3,487.4 126.1,486.8 127.9,487.0 129.7,486.5 131.5,485.8 133.3,486.7 135.1,486.2 136.9,486.4 138.7,486.7 140.5,486.7 142.3,486.6 144.1,485.7 145.9,486.8 147.7,486.0 149.5,486.8 151.3,486.4 153.1,485.5 154.9,486.4 156.7,486.0 158.5,486.3 160.3,484.8 162.1,486.3 163.9,487.1 165.7,486.5 167.5,487.0 169.3,487.1 171.1,485.7 172.9,486.4 174.7,486.3 176.5,486.1 178.3,486.3 180.1,485.0 181.9,486.6 183.7,486.8 185.5,486.4 187.3,486.3 189.1,485.0 190.9,485.9 192.7,486.1 194.5,485.8 196.3,485.5 198.1,486.0 199.9,486.3 201.7,486.4 203.5,486.8 205.3,486.3 207.1,486.9 208.9,485.8 210.7,485.7 212.5,486.7 214.3,486.7 216.1,486.3 217.9,487.2 219.7,485.7 221.5,486.9 223.3,486.2 225.1,485.7 226.9,486.4 228.7,484.6 230.5,486.1 232.3,487.0 234.1,485.2 235.9,485.9 237.7,485.2 239.5,485.2 241.3,485.5 243.1,485.8 244.9,486.6 246.7,486.2 248.5,485.8 250.3,485.6 252.1,485.9 253.9,486.2 255.7,485.6 257.5,485.7 259.3,486.6 261.1,486.7 262.9,485.7 264.7,486.0 266.5,486.3 268.3,485.8 270.1,487.0 271.9,485.5 273.7,486.3 275.5,486.0 277.3,486.2 279.1,485.7 280.9,485.7 282.7,485.0 284.5,486.0 286.3,486.4 288.1,485.5 289.9,486.1 291.7,486.3 293.5,485.7 295.3,486.4 297.1,486.4 298.9,485.6 300.7,486.1 302.5,485.3 304.3,486.0 306.1,485.2 307.9,485.2 309.7,487.2 311.5,485.7 313.3,486.1 315.1,486.3 316.9,486.8 318.7,485.4 320.5,485.4 322.3,486.1 324.1,486.4 325.9,486.3 327.7,486.2 329.5,485.1 331.3,486.3 333.1,485.7 334.9,486.0 336.7,485.4 338.5,485.4 340.3,486.2 342.1,485.6 343.9,484.5 345.7,486.5 347.5,486.6 349.3,485.8 351.1,486.2 352.9,485.6 354.7,486.8 356.5,485.9 358.3,486.2 360.1,485.8 361.9,485.6 363.7,485.5 365.5,484.6 367.3,485.6 369.1,487.0 370.9,485.8 372.7,486.1 374.5,484.4 376.3,485.6 378.1,485.4 379.9,484.8 381.7,486.6 383.5,485.7 385.3,485.8 387.1,485.4 388.9,485.5 390.7,484.5 392.5,485.3 394.3,485.1 396.1,484.9 397.9,485.5 399.7,484.3 401.5,485.0 403.3,485.0 405.1,485.5 406.9,484.6 408.7,484.3 410.5,485.3 412.3,485.5 414.1,485.9 415.9,485.6 417.7,486.3 419.5,484.1 421.3,485.0 423.1,484.9 424.9,485.0 426.7,484.6 428.5,484.8 430.3,484.8 432.1,484.7 433.9,485.4 435.7,484.2 437.5,484.4 439.3,484.9 441.1,485.6 442.9,485.8 444.7,485.3 446.5,484.0 448.3,485.2 450.1,485.0 451.9,485.6 453.7,485.6 455.5,484.9 457.3,484.5 459.1,485.6 460.9,485.1 462.7,485.4 464.5,484.9 466.3,485.1 468.1,484.0 469.9,484.3 471.7,483.1 473.5,483.3 475.3,483.2 477.1,484.2 478.9,484.5 480.7,485.5 482.5,484.8 484.3,484.0 486.1,485.1 487.9,484.0 489.7,485.1 491.5,484.6 493.3,485.1 495.1,484.0 496.9,484.8 498.7,484.6 500.5,484.8 502.3,485.0 504.1,484.5 505.9,484.8 507.7,484.8 509.5,485.7 511.3,484.7 513.1,484.4 514.9,484.6 516.7,484.2 518.5,484.9 520.3,483.9 522.1,485.0 523.9,484.4 525.7,484.3 527.5,484.9 529.3,484.7 531.1,484.6 532.9,483.1 534.7,482.9 536.5,482.5 538.3,481.1 540.1,481.9 541.9,483.7 543.7,483.5 545.5,484.1 547.3,484.2 549.1,484.8 550.9,484.5 552.7,484.2 554.5,485.2 556.3,485.1 558.1,485.0 559.9,485.4 561.7,485.2 563.5,484.9 565.3,484.3 567.1,483.3 568.9,484.7 570.7,484.7 572.5,485.4 574.3,484.2 576.1,484.7 577.9,485.5 579.7,485.2 581.5,485.4 583.3,486.0 585.1,484.2 586.9,486.1 588.7,484.3 590.5,484.9 592.3,484.6 594.1,485.0 595.9,484.4 597.7,484.8 599.5,484.9 601.3,485.1 603.1,485.2 604.9,484.9 606.7,484.3 608.5,485.9 610.3,484.4 612.1,484.3 613.9,484.3 615.7,483.5 617.5,484.0 619.3,484.0 621.1,484.1 622.9,485.7 624.7,484.1 626.5,484.7 628.3,485.1 630.1,485.3 631.9,484.8 633.7,484.8 635.5,485.0 637.3,485.6 639.1,483.2 640.9,484.2 642.7,484.8 644.5,485.9 646.3,484.9 648.1,484.3 649.9,485.1 651.7,484.0 653.5,484.5 655.3,485.3 657.1,486.0 658.9,484.4 660.7,484.8 662.5,484.4 664.3,486.1 666.1,485.3 667.9,485.7 669.7,485.8 671.5,485.0 673.3,485.3 675.1,484.3 676.9,485.4 678.7,484.4 680.5,483.2 682.3,482.6 684.1,482.4 685.9,482.8 687.7,483.1 689.5,483.3 691.3,484.3 693.1,485.6 694.9,483.6 696.7,484.8 698.5,484.3 700.3,486.3 702.1,484.8 703.9,485.3 705.7,484.8 707.5,484.9 709.3,484.9 711.1,485.5 712.9,484.6 714.7,485.3 716.5,485.2 718.3,485.8 720.1,484.3 721.9,485.1 723.7,484.7 725.5,484.5 727.3,485.8 729.1,484.9 730.9,484.4 732.7,484.1 734.5,485.7 736.3,484.7 738.1,484.3 739.9,484.6 741.7,485.1 743.5,485.4 745.3,484.5 747.1,484.1 748.9,485.4 750.7,483.7 752.5,485.6 754.3,485.0 756.1,484.5 757.9,484.6 759.7,485.7 761.5,484.8 763.3,485.0 765.1,485.3 766.9,485.1 768.7,484.6 770.5,484.0 772.3,485.7 774.1,485.1 775.9,484.4 777.7,485.2 779.5,485.6 781.3,484.3 783.1,483.8 784.9,483.7 786.7,484.6 788.5,483.3 790.3,482.4 792.1,481.1 793.9,479.7 795.7,479.2 797.5,480.3 799.3,482.0 801.1,481.9 802.9,484.3 804.7,483.8 806.5,483.9 808.3,484.6 810.1,484.0 811.9,484.4 813.7,484.0 815.5,484.6 817.3,484.2 819.1,484.1 820.9,485.0 822.7,484.2 824.5,484.1 826.3,484.3 828.1,484.9 829.9,485.2 831.7,484.0 833.5,484.7 835.3,485.0 837.1,483.8 838.9,483.4 840.7,483.6 842.5,483.8 844.3,484.4 846.1,484.3 847.9,484.9 849.7,484.3 851.5,484.1 853.3,483.2 855.1,484.9 856.9,484.8 858.7,484.8 860.5,483.8 862.3,483.8 864.1,483.9 865.9,483.5 867.7,485.1 869.5,484.4 871.3,485.1 873.1,484.6 874.9,485.4 876.7,484.5 878.5,484.8 880.3,485.2 882.1,483.4 883.9,484.7 885.7,483.2 887.5,484.7 889.3,484.1 891.1,484.6 892.9,483.9 894.7,484.5 896.5,484.1 898.3,484.1 900.1,483.7 901.9,484.8 903.7,484.9 905.5,483.8 907.3,485.0 909.1,483.6 910.9,484.1 912.7,484.1 914.5,484.8 916.3,484.3 918.1,483.7 919.9,484.2 921.7,484.3 923.5,483.4 925.3,484.1 927.1,483.5 928.9,482.3 930.7,483.5 932.5,483.8 934.3,483.9 936.1,483.7 937.9,483.6 939.7,482.4 941.5,482.9 943.3,483.1 945.1,483.4 946.9,482.9 948.7,483.3 950.5,483.2 952.3,483.5 954.1,484.4 955.9,482.3 957.7,483.9 959.5,482.7 961.3,481.8 963.1,483.3 964.9,482.7 966.7,482.5 968.5,484.0 970.3,482.5 972.1,483.4 973.9,484.1 975.7,482.5 977.5,482.4 979.3,483.2 981.1,483.7 982.9,483.9 984.7,483.2 986.5,483.8 988.3,482.8 990.1,482.8 991.9,482.6 993.7,482.6 995.5,482.5 997.3,483.7 999.1,482.5 1000.9,483.2 1002.7,483.5 1004.5,483.4 1006.3,482.8 1008.1,483.5 1009.9,482.1 1011.7,482.0 1013.5,482.9 1015.3,482.7 1017.1,483.0 1018.9,483.3 1020.7,482.0 1022.5,483.3 1024.3,482.7 1026.1,482.1 1027.9,481.3 1029.7,482.2 1031.5,481.5 1033.3,481.4 1035.1,480.5 1036.9,480.8 1038.7,480.8 1040.5,480.6 1042.3,481.6 1044.1,481.7 1045.9,481.2 1047.7,481.7 1049.5,481.4 1051.3,481.9 1053.1,482.8 1054.9,481.6 1056.7,481.8 1058.5,480.6 1060.3,479.7 1062.1,481.5 1063.9,480.8 1065.7,480.7 1067.5,482.6 1069.3,483.9 1071.1,485.0 1072.9,484.1 1074.7,482.6 1076.5,482.4 1078.3,482.6"/>
<line x1="1091" y1="426.0" x2="1103" y2="430.0" stroke="#0000ff" stroke-width="1.2"/>
<text x="1107.5" y="432.5" text-anchor="start" font-size="12"  class="t">CHEMS-P</text>
<line x1="1091" y1="441.4" x2="1103" y2="445.4" stroke="#ff0000" stroke-width="1.2"/>
<text x="1107.5" y="447.9" text-anchor="start" font-size="12"  class="t">LEMMS-P</text>
<line x1="1091" y1="456.8" x2="1103" y2="460.8" stroke="#00ee00" stroke-width="1.2"/>
<text x="1107.5" y="463.3" text-anchor="start" font-size="12"  class="t">CHEMS-O</text>
<defs><linearGradient id="g4" x1="0" y1="513.5" x2="0" y2="691.0" gradientUnits="userSpaceOnUse"><stop offset="0.0028" stop-color="#080887"/><stop offset="0.0648" stop-color="#0b0da4"/><stop offset="0.1211" stop-color="#0e13c2"/><stop offset="0.2056" stop-color="#0f19d4"/><stop offset="0.2901" stop-color="#0f22e6"/><stop offset="0.3746" stop-color="#0c3cf8"/><stop offset="0.4310" stop-color="#085ef2"/><stop offset="0.4873" stop-color="#057cd9"/><stop offset="0.5268" stop-color="#0591bc"/><stop offset="0.5718" stop-color="#06a49d"/><stop offset="0.6282" stop-color="#12b97d"/><stop offset="0.6845" stop-color="#32cf60"/><stop offset="0.7408" stop-color="#6ee437"/><stop offset="0.7972" stop-color="#b6ec0c"/><stop offset="0.8535" stop-color="#d4df02"/><stop offset="0.9155" stop-color="#e0d800"/><stop offset="0.9662" stop-color="#e3ce00"/><stop offset="0.9972" stop-color="#e5c800"/></linearGradient>
<linearGradient id="og" x1="0" y1="668" x2="0" y2="690" gradientUnits="userSpaceOnUse"><stop offset="0" stop-color="#ff8000" stop-opacity="0"/><stop offset="0.5" stop-color="#ff8c00" stop-opacity="0.45"/><stop offset="1" stop-color="#ff7800" stop-opacity="0.95"/></linearGradient>
<linearGradient id="bg" x1="0" y1="600" x2="0" y2="665" gradientUnits="userSpaceOnUse"><stop offset="0" stop-color="#1060ff" stop-opacity="0.5"/><stop offset="0.6" stop-color="#1080e0" stop-opacity="0.45"/><stop offset="1" stop-color="#20a0a0" stop-opacity="0"/></linearGradient></defs>
<rect x="95" y="513.5" width="986" height="177.5" fill="#000"/>
<rect x="97" y="514.5" width="983" height="175.5" fill="url(#g4)"/>
<rect x="97" y="668" width="3" height="22" fill="url(#og)" opacity="0.09"/>
<rect x="100" y="668" width="3" height="22" fill="url(#og)" opacity="0.05"/>
<rect x="103" y="668" width="3" height="22" fill="url(#og)" opacity="0.06"/>
<rect x="106" y="668" width="3" height="22" fill="url(#og)" opacity="0.11"/>
<rect x="109" y="668" width="3" height="22" fill="url(#og)" opacity="0.20"/>
<rect x="112" y="668" width="3" height="22" fill="url(#og)" opacity="0.30"/>
<rect x="115" y="668" width="3" height="22" fill="url(#og)" opacity="0.41"/>
<rect x="118" y="668" width="3" height="22" fill="url(#og)" opacity="0.49"/>
<rect x="121" y="668" width="3" height="22" fill="url(#og)" opacity="0.54"/>
<rect x="124" y="668" width="3" height="22" fill="url(#og)" opacity="0.55"/>
<rect x="127" y="668" width="3" height="22" fill="url(#og)" opacity="0.51"/>
<rect x="130" y="668" width="3" height="22" fill="url(#og)" opacity="0.43"/>
<rect x="133" y="668" width="3" height="22" fill="url(#og)" opacity="0.33"/>
<rect x="136" y="668" width="3" height="22" fill="url(#og)" opacity="0.23"/>
<rect x="139" y="668" width="3" height="22" fill="url(#og)" opacity="0.13"/>
<rect x="142" y="668" width="3" height="22" fill="url(#og)" opacity="0.07"/>
<rect x="145" y="668" width="3" height="22" fill="url(#og)" opacity="0.05"/>
<rect x="148" y="668" width="3" height="22" fill="url(#og)" opacity="0.07"/>
<rect x="151" y="668" width="3" height="22" fill="url(#og)" opacity="0.14"/>
<rect x="154" y="668" width="3" height="22" fill="url(#og)" opacity="0.23"/>
<rect x="157" y="668" width="3" height="22" fill="url(#og)" opacity="0.34"/>
<rect x="160" y="668" width="3" height="22" fill="url(#og)" opacity="0.44"/>
<rect x="163" y="668" width="3" height="22" fill="url(#og)" opacity="0.51"/>
<rect x="166" y="668" width="3" height="22" fill="url(#og)" opacity="0.55"/>
<rect x="169" y="668" width="3" height="22" fill="url(#og)" opacity="0.54"/>
<rect x="172" y="668" width="3" height="22" fill="url(#og)" opacity="0.49"/>
<rect x="175" y="668" width="3" height="22" fill="url(#og)" opacity="0.40"/>
<rect x="178" y="668" width="3" height="22" fill="url(#og)" opacity="0.30"/>
<rect x="181" y="668" width="3" height="22" fill="url(#og)" opacity="0.19"/>
<rect x="184" y="668" width="3" height="22" fill="url(#og)" opacity="0.11"/>
<rect x="187" y="668" width="3" height="22" fill="url(#og)" opacity="0.06"/>
<rect x="190" y="668" width="3" height="22" fill="url(#og)" opacity="0.05"/>
<rect x="193" y="668" width="3" height="22" fill="url(#og)" opacity="0.09"/>
<rect x="196" y="668" width="3" height="22" fill="url(#og)" opacity="0.17"/>
<rect x="199" y="668" width="3" height="22" fill="url(#og)" opacity="0.27"/>
<rect x="202" y="668" width="3" height="22" fill="url(#og)" opacity="0.37"/>
<rect x="205" y="668" width="3" height="22" fill="url(#og)" opacity="0.47"/>
<rect x="208" y="668" width="3" height="22" fill="url(#og)" opacity="0.53"/>
<rect x="211" y="668" width="3" height="22" fill="url(#og)" opacity="0.55"/>
<rect x="214" y="668" width="3" height="22" fill="url(#og)" opacity="0.53"/>
<rect x="217" y="668" width="3" height="22" fill="url(#og)" opacity="0.46"/>
<rect x="220" y="668" width="3" height="22" fill="url(#og)" opacity="0.37"/>
<rect x="223" y="668" width="3" height="22" fill="url(#og)" opacity="0.26"/>
<rect x="226" y="668" width="3" height="22" fill="url(#og)" opacity="0.16"/>
<rect x="229" y="668" width="3" height="22" fill="url(#og)" opacity="0.09"/>
<rect x="232" y="668" width="3" height="22" fill="url(#og)" opacity="0.05"/>
<rect x="235" y="668" width="3" height="22" fill="url(#og)" opacity="0.06"/>
<rect x="238" y="668" width="3" height="22" fill="url(#og)" opacity="0.11"/>
<rect x="241" y="668" width="3" height="22" fill="url(#og)" opacity="0.20"/>
<rect x="244" y="668" width="3" height="22" fill="url(#og)" opacity="0.30"/>
<rect x="247" y="668" width="3" height="22" fill="url(#og)" opacity="0.41"/>
<rect x="250" y="668" width="3" height="22" fill="url(#og)" opacity="0.35"/>
<rect x="253" y="668" width="3" height="22" fill="url(#og)" opacity="0.40"/>
<rect x="256" y="668" width="3" height="22" fill="url(#og)" opacity="0.41"/>
<rect x="259" y="668" width="3" height="22" fill="url(#og)" opacity="0.42"/>
<rect x="262" y="668" width="3" height="22" fill="url(#og)" opacity="0.53"/>
<rect x="265" y="668" width="3" height="22" fill="url(#og)" opacity="0.51"/>
<rect x="268" y="668" width="3" height="22" fill="url(#og)" opacity="0.50"/>
<rect x="271" y="668" width="3" height="22" fill="url(#og)" opacity="0.46"/>
<rect x="274" y="668" width="3" height="22" fill="url(#og)" opacity="0.49"/>
<rect x="277" y="668" width="3" height="22" fill="url(#og)" opacity="0.47"/>
<rect x="280" y="668" width="3" height="22" fill="url(#og)" opacity="0.38"/>
<rect x="283" y="668" width="3" height="22" fill="url(#og)" opacity="0.42"/>
<rect x="286" y="668" width="3" height="22" fill="url(#og)" opacity="0.34"/>
<rect x="289" y="668" width="3" height="22" fill="url(#og)" opacity="0.26"/>
<rect x="292" y="668" width="3" height="22" fill="url(#og)" opacity="0.27"/>
<rect x="295" y="668" width="3" height="22" fill="url(#og)" opacity="0.20"/>
<rect x="298" y="668" width="3" height="22" fill="url(#og)" opacity="0.15"/>
<rect x="301" y="668" width="3" height="22" fill="url(#og)" opacity="0.09"/>
<rect x="304" y="668" width="3" height="22" fill="url(#og)" opacity="0.21"/>
<rect x="307" y="668" width="3" height="22" fill="url(#og)" opacity="0.14"/>
<rect x="310" y="668" width="3" height="22" fill="url(#og)" opacity="0.17"/>
<rect x="313" y="668" width="3" height="22" fill="url(#og)" opacity="0.18"/>
<rect x="316" y="668" width="3" height="22" fill="url(#og)" opacity="0.17"/>
<rect x="319" y="668" width="3" height="22" fill="url(#og)" opacity="0.18"/>
<rect x="322" y="668" width="3" height="22" fill="url(#og)" opacity="0.19"/>
<rect x="325" y="668" width="3" height="22" fill="url(#og)" opacity="0.22"/>
<rect x="328" y="668" width="3" height="22" fill="url(#og)" opacity="0.20"/>
<rect x="331" y="668" width="3" height="22" fill="url(#og)" opacity="0.18"/>
<rect x="334" y="668" width="3" height="22" fill="url(#og)" opacity="0.17"/>
<rect x="337" y="668" width="3" height="22" fill="url(#og)" opacity="0.24"/>
<rect x="340" y="668" width="3" height="22" fill="url(#og)" opacity="0.20"/>
<rect x="343" y="668" width="3" height="22" fill="url(#og)" opacity="0.16"/>
<rect x="346" y="668" width="3" height="22" fill="url(#og)" opacity="0.06"/>
<rect x="349" y="668" width="3" height="22" fill="url(#og)" opacity="0.11"/>
<rect x="352" y="668" width="3" height="22" fill="url(#og)" opacity="0.12"/>
<rect x="355" y="668" width="3" height="22" fill="url(#og)" opacity="0.08"/>
<rect x="358" y="668" width="3" height="22" fill="url(#og)" opacity="0.17"/>
<rect x="361" y="668" width="3" height="22" fill="url(#og)" opacity="0.14"/>
<rect x="364" y="668" width="3" height="22" fill="url(#og)" opacity="0.19"/>
<rect x="367" y="668" width="3" height="22" fill="url(#og)" opacity="0.25"/>
<rect x="370" y="668" width="3" height="22" fill="url(#og)" opacity="0.31"/>
<rect x="373" y="668" width="3" height="22" fill="url(#og)" opacity="0.37"/>
<rect x="376" y="668" width="3" height="22" fill="url(#og)" opacity="0.38"/>
<rect x="379" y="668" width="3" height="22" fill="url(#og)" opacity="0.44"/>
<rect x="382" y="668" width="3" height="22" fill="url(#og)" opacity="0.43"/>
<rect x="385" y="668" width="3" height="22" fill="url(#og)" opacity="0.47"/>
<rect x="388" y="668" width="3" height="22" fill="url(#og)" opacity="0.40"/>
<rect x="391" y="668" width="3" height="22" fill="url(#og)" opacity="0.46"/>
<rect x="394" y="668" width="3" height="22" fill="url(#og)" opacity="0.34"/>
<rect x="397" y="668" width="3" height="22" fill="url(#og)" opacity="0.34"/>
<rect x="400" y="668" width="3" height="22" fill="url(#og)" opacity="0.33"/>
<rect x="403" y="668" width="3" height="22" fill="url(#og)" opacity="0.30"/>
<rect x="406" y="668" width="3" height="22" fill="url(#og)" opacity="0.31"/>
<rect x="409" y="668" width="3" height="22" fill="url(#og)" opacity="0.27"/>
<rect x="412" y="668" width="3" height="22" fill="url(#og)" opacity="0.20"/>
<rect x="415" y="668" width="3" height="22" fill="url(#og)" opacity="0.20"/>
<rect x="418" y="668" width="3" height="22" fill="url(#og)" opacity="0.20"/>
<rect x="421" y="668" width="3" height="22" fill="url(#og)" opacity="0.22"/>
<rect x="424" y="668" width="3" height="22" fill="url(#og)" opacity="0.29"/>
<rect x="427" y="668" width="3" height="22" fill="url(#og)" opacity="0.23"/>
<rect x="430" y="668" width="3" height="22" fill="url(#og)" opacity="0.24"/>
<rect x="433" y="668" width="3" height="22" fill="url(#og)" opacity="0.28"/>
<rect x="436" y="668" width="3" height="22" fill="url(#og)" opacity="0.33"/>
<rect x="439" y="668" width="3" height="22" fill="url(#og)" opacity="0.24"/>
<rect x="442" y="668" width="3" height="22" fill="url(#og)" opacity="0.24"/>
<rect x="445" y="668" width="3" height="22" fill="url(#og)" opacity="0.28"/>
<rect x="448" y="668" width="3" height="22" fill="url(#og)" opacity="0.14"/>
<rect x="451" y="668" width="3" height="22" fill="url(#og)" opacity="0.06"/>
<rect x="454" y="668" width="3" height="22" fill="url(#og)" opacity="0.09"/>
<rect x="457" y="668" width="3" height="22" fill="url(#og)" opacity="0.06"/>
<rect x="484" y="668" width="3" height="22" fill="url(#og)" opacity="0.04"/>
<rect x="487" y="668" width="3" height="22" fill="url(#og)" opacity="0.09"/>
<rect x="490" y="668" width="3" height="22" fill="url(#og)" opacity="0.28"/>
<rect x="493" y="668" width="3" height="22" fill="url(#og)" opacity="0.30"/>
<rect x="496" y="668" width="3" height="22" fill="url(#og)" opacity="0.41"/>
<rect x="499" y="668" width="3" height="22" fill="url(#og)" opacity="0.53"/>
<rect x="502" y="668" width="3" height="22" fill="url(#og)" opacity="0.38"/>
<rect x="505" y="668" width="3" height="22" fill="url(#og)" opacity="0.35"/>
<rect x="508" y="668" width="3" height="22" fill="url(#og)" opacity="0.43"/>
<rect x="511" y="668" width="3" height="22" fill="url(#og)" opacity="0.50"/>
<rect x="514" y="668" width="3" height="22" fill="url(#og)" opacity="0.25"/>
<rect x="517" y="668" width="3" height="22" fill="url(#og)" opacity="0.17"/>
<rect x="520" y="668" width="3" height="22" fill="url(#og)" opacity="0.44"/>
<rect x="523" y="668" width="3" height="22" fill="url(#og)" opacity="0.30"/>
<rect x="526" y="668" width="3" height="22" fill="url(#og)" opacity="0.22"/>
<rect x="529" y="668" width="3" height="22" fill="url(#og)" opacity="0.32"/>
<rect x="532" y="668" width="3" height="22" fill="url(#og)" opacity="0.49"/>
<rect x="535" y="668" width="3" height="22" fill="url(#og)" opacity="0.67"/>
<rect x="538" y="668" width="3" height="22" fill="url(#og)" opacity="0.65"/>
<rect x="541" y="668" width="3" height="22" fill="url(#og)" opacity="0.81"/>
<rect x="544" y="668" width="3" height="22" fill="url(#og)" opacity="0.80"/>
<rect x="547" y="668" width="3" height="22" fill="url(#og)" opacity="0.95"/>
<rect x="550" y="668" width="3" height="22" fill="url(#og)" opacity="0.97"/>
<rect x="553" y="668" width="3" height="22" fill="url(#og)" opacity="0.91"/>
<rect x="556" y="668" width="3" height="22" fill="url(#og)" opacity="0.95"/>
<rect x="559" y="668" width="3" height="22" fill="url(#og)" opacity="0.97"/>
<rect x="562" y="668" width="3" height="22" fill="url(#og)" opacity="0.73"/>
<rect x="565" y="668" width="3" height="22" fill="url(#og)" opacity="0.70"/>
<rect x="568" y="668" width="3" height="22" fill="url(#og)" opacity="0.55"/>
<rect x="571" y="668" width="3" height="22" fill="url(#og)" opacity="0.54"/>
<rect x="574" y="668" width="3" height="22" fill="url(#og)" opacity="0.41"/>
<rect x="577" y="668" width="3" height="22" fill="url(#og)" opacity="0.22"/>
<rect x="580" y="668" width="3" height="22" fill="url(#og)" opacity="0.16"/>
<rect x="583" y="668" width="3" height="22" fill="url(#og)" opacity="0.24"/>
<rect x="586" y="668" width="3" height="22" fill="url(#og)" opacity="0.38"/>
<rect x="589" y="668" width="3" height="22" fill="url(#og)" opacity="0.29"/>
<rect x="592" y="668" width="3" height="22" fill="url(#og)" opacity="0.27"/>
<rect x="595" y="668" width="3" height="22" fill="url(#og)" opacity="0.26"/>
<rect x="598" y="668" width="3" height="22" fill="url(#og)" opacity="0.30"/>
<rect x="601" y="668" width="3" height="22" fill="url(#og)" opacity="0.35"/>
<rect x="604" y="668" width="3" height="22" fill="url(#og)" opacity="0.40"/>
<rect x="607" y="668" width="3" height="22" fill="url(#og)" opacity="0.59"/>
<rect x="610" y="668" width="3" height="22" fill="url(#og)" opacity="0.40"/>
<rect x="613" y="668" width="3" height="22" fill="url(#og)" opacity="0.55"/>
<rect x="616" y="668" width="3" height="22" fill="url(#og)" opacity="0.38"/>
<rect x="619" y="668" width="3" height="22" fill="url(#og)" opacity="0.39"/>
<rect x="622" y="668" width="3" height="22" fill="url(#og)" opacity="0.38"/>
<rect x="625" y="668" width="3" height="22" fill="url(#og)" opacity="0.27"/>
<rect x="628" y="668" width="3" height="22" fill="url(#og)" opacity="0.20"/>
<rect x="631" y="668" width="3" height="22" fill="url(#og)" opacity="0.24"/>
<rect x="634" y="668" width="3" height="22" fill="url(#og)" opacity="0.06"/>
<rect x="637" y="668" width="3" height="22" fill="url(#og)" opacity="0.17"/>
<rect x="640" y="668" width="3" height="22" fill="url(#og)" opacity="0.09"/>
<rect x="643" y="668" width="3" height="22" fill="url(#og)" opacity="0.15"/>
<rect x="646" y="668" width="3" height="22" fill="url(#og)" opacity="0.35"/>
<rect x="649" y="668" width="3" height="22" fill="url(#og)" opacity="0.36"/>
<rect x="652" y="668" width="3" height="22" fill="url(#og)" opacity="0.55"/>
<rect x="655" y="668" width="3" height="22" fill="url(#og)" opacity="0.63"/>
<rect x="658" y="668" width="3" height="22" fill="url(#og)" opacity="0.74"/>
<rect x="661" y="668" width="3" height="22" fill="url(#og)" opacity="0.87"/>
<rect x="664" y="668" width="3" height="22" fill="url(#og)" opacity="0.98"/>
<rect x="667" y="668" width="3" height="22" fill="url(#og)" opacity="1.00"/>
<rect x="670" y="668" width="3" height="22" fill="url(#og)" opacity="1.00"/>
<rect x="673" y="668" width="3" height="22" fill="url(#og)" opacity="1.00"/>
<rect x="676" y="668" width="3" height="22" fill="url(#og)" opacity="0.95"/>
<rect x="679" y="668" width="3" height="22" fill="url(#og)" opacity="0.90"/>
<rect x="682" y="668" width="3" height="22" fill="url(#og)" opacity="1.00"/>
<rect x="685" y="668" width="3" height="22" fill="url(#og)" opacity="0.80"/>
<rect x="688" y="668" width="3" height="22" fill="url(#og)" opacity="0.71"/>
<rect x="691" y="668" width="3" height="22" fill="url(#og)" opacity="0.81"/>
<rect x="694" y="668" width="3" height="22" fill="url(#og)" opacity="0.85"/>
<rect x="697" y="668" width="3" height="22" fill="url(#og)" opacity="0.71"/>
<rect x="700" y="668" width="3" height="22" fill="url(#og)" opacity="0.71"/>
<rect x="703" y="668" width="3" height="22" fill="url(#og)" opacity="0.72"/>
<rect x="706" y="668" width="3" height="22" fill="url(#og)" opacity="0.74"/>
<rect x="709" y="668" width="3" height="22" fill="url(#og)" opacity="0.94"/>
<rect x="712" y="668" width="3" height="22" fill="url(#og)" opacity="0.96"/>
<rect x="715" y="668" width="3" height="22" fill="url(#og)" opacity="0.96"/>
<rect x="718" y="668" width="3" height="22" fill="url(#og)" opacity="0.89"/>
<rect x="721" y="668" width="3" height="22" fill="url(#og)" opacity="0.86"/>
<rect x="724" y="668" width="3" height="22" fill="url(#og)" opacity="0.93"/>
<rect x="727" y="668" width="3" height="22" fill="url(#og)" opacity="0.72"/>
<rect x="730" y="668" width="3" height="22" fill="url(#og)" opacity="0.80"/>
<rect x="733" y="668" width="3" height="22" fill="url(#og)" opacity="0.53"/>
<rect x="736" y="668" width="3" height="22" fill="url(#og)" opacity="0.50"/>
<rect x="739" y="668" width="3" height="22" fill="url(#og)" opacity="0.39"/>
<rect x="742" y="668" width="3" height="22" fill="url(#og)" opacity="0.29"/>
<rect x="745" y="668" width="3" height="22" fill="url(#og)" opacity="0.18"/>
<rect x="748" y="668" width="3" height="22" fill="url(#og)" opacity="0.09"/>
<rect x="751" y="668" width="3" height="22" fill="url(#og)" opacity="0.11"/>
<rect x="757" y="668" width="3" height="22" fill="url(#og)" opacity="0.09"/>
<rect x="763" y="668" width="3" height="22" fill="url(#og)" opacity="0.13"/>
<rect x="766" y="668" width="3" height="22" fill="url(#og)" opacity="0.34"/>
<rect x="769" y="668" width="3" height="22" fill="url(#og)" opacity="0.23"/>
<rect x="772" y="668" width="3" height="22" fill="url(#og)" opacity="0.33"/>
<rect x="775" y="668" width="3" height="22" fill="url(#og)" opacity="0.35"/>
<rect x="778" y="668" width="3" height="22" fill="url(#og)" opacity="0.52"/>
<rect x="781" y="668" width="3" height="22" fill="url(#og)" opacity="0.46"/>
<rect x="784" y="668" width="3" height="22" fill="url(#og)" opacity="0.50"/>
<rect x="787" y="668" width="3" height="22" fill="url(#og)" opacity="0.57"/>
<rect x="790" y="668" width="3" height="22" fill="url(#og)" opacity="0.48"/>
<rect x="793" y="668" width="3" height="22" fill="url(#og)" opacity="0.54"/>
<rect x="796" y="668" width="3" height="22" fill="url(#og)" opacity="0.26"/>
<rect x="799" y="668" width="3" height="22" fill="url(#og)" opacity="0.30"/>
<rect x="802" y="668" width="3" height="22" fill="url(#og)" opacity="0.34"/>
<rect x="805" y="668" width="3" height="22" fill="url(#og)" opacity="0.42"/>
<rect x="808" y="668" width="3" height="22" fill="url(#og)" opacity="0.40"/>
<rect x="811" y="668" width="3" height="22" fill="url(#og)" opacity="0.28"/>
<rect x="814" y="668" width="3" height="22" fill="url(#og)" opacity="0.46"/>
<rect x="817" y="668" width="3" height="22" fill="url(#og)" opacity="0.41"/>
<rect x="820" y="668" width="3" height="22" fill="url(#og)" opacity="0.60"/>
<rect x="823" y="668" width="3" height="22" fill="url(#og)" opacity="0.74"/>
<rect x="826" y="668" width="3" height="22" fill="url(#og)" opacity="0.66"/>
<rect x="829" y="668" width="3" height="22" fill="url(#og)" opacity="0.87"/>
<rect x="832" y="668" width="3" height="22" fill="url(#og)" opacity="0.92"/>
<rect x="835" y="668" width="3" height="22" fill="url(#og)" opacity="0.76"/>
<rect x="838" y="668" width="3" height="22" fill="url(#og)" opacity="0.92"/>
<rect x="841" y="668" width="3" height="22" fill="url(#og)" opacity="0.84"/>
<rect x="844" y="668" width="3" height="22" fill="url(#og)" opacity="0.81"/>
<rect x="847" y="668" width="3" height="22" fill="url(#og)" opacity="0.82"/>
<rect x="850" y="668" width="3" height="22" fill="url(#og)" opacity="0.63"/>
<rect x="853" y="668" width="3" height="22" fill="url(#og)" opacity="0.42"/>
<rect x="856" y="668" width="3" height="22" fill="url(#og)" opacity="0.48"/>
<rect x="859" y="668" width="3" height="22" fill="url(#og)" opacity="0.34"/>
<rect x="862" y="668" width="3" height="22" fill="url(#og)" opacity="0.21"/>
<rect x="865" y="668" width="3" height="22" fill="url(#og)" opacity="0.24"/>
<rect x="868" y="668" width="3" height="22" fill="url(#og)" opacity="0.21"/>
<rect x="871" y="668" width="3" height="22" fill="url(#og)" opacity="0.15"/>
<rect x="874" y="668" width="3" height="22" fill="url(#og)" opacity="0.18"/>
<rect x="877" y="668" width="3" height="22" fill="url(#og)" opacity="0.18"/>
<rect x="880" y="668" width="3" height="22" fill="url(#og)" opacity="0.27"/>
<rect x="883" y="668" width="3" height="22" fill="url(#og)" opacity="0.18"/>
<rect x="886" y="668" width="3" height="22" fill="url(#og)" opacity="0.26"/>
<rect x="889" y="668" width="3" height="22" fill="url(#og)" opacity="0.36"/>
<rect x="892" y="668" width="3" height="22" fill="url(#og)" opacity="0.33"/>
<rect x="895" y="668" width="3" height="22" fill="url(#og)" opacity="0.23"/>
<rect x="898" y="668" width="3" height="22" fill="url(#og)" opacity="0.32"/>
<rect x="901" y="668" width="3" height="22" fill="url(#og)" opacity="0.09"/>
<rect x="904" y="668" width="3" height="22" fill="url(#og)" opacity="0.07"/>
<rect x="907" y="668" width="3" height="22" fill="url(#og)" opacity="0.06"/>
<rect x="925" y="668" width="3" height="22" fill="url(#og)" opacity="0.05"/>
<rect x="928" y="668" width="3" height="22" fill="url(#og)" opacity="0.17"/>
<rect x="931" y="668" width="3" height="22" fill="url(#og)" opacity="0.15"/>
<rect x="934" y="668" width="3" height="22" fill="url(#og)" opacity="0.21"/>
<rect x="937" y="668" width="3" height="22" fill="url(#og)" opacity="0.41"/>
<rect x="940" y="668" width="3" height="22" fill="url(#og)" opacity="0.61"/>
<rect x="943" y="668" width="3" height="22" fill="url(#og)" opacity="0.67"/>
<rect x="946" y="668" width="3" height="22" fill="url(#og)" opacity="0.76"/>
<rect x="949" y="668" width="3" height="22" fill="url(#og)" opacity="0.73"/>
<rect x="952" y="668" width="3" height="22" fill="url(#og)" opacity="0.78"/>
<rect x="955" y="668" width="3" height="22" fill="url(#og)" opacity="0.73"/>
<rect x="958" y="668" width="3" height="22" fill="url(#og)" opacity="0.74"/>
<rect x="961" y="668" width="3" height="22" fill="url(#og)" opacity="0.84"/>
<rect x="964" y="668" width="3" height="22" fill="url(#og)" opacity="0.73"/>
<rect x="967" y="668" width="3" height="22" fill="url(#og)" opacity="0.68"/>
<rect x="970" y="668" width="3" height="22" fill="url(#og)" opacity="0.62"/>
<rect x="973" y="668" width="3" height="22" fill="url(#og)" opacity="0.58"/>
<rect x="976" y="668" width="3" height="22" fill="url(#og)" opacity="0.68"/>
<rect x="979" y="668" width="3" height="22" fill="url(#og)" opacity="0.61"/>
<rect x="982" y="668" width="3" height="22" fill="url(#og)" opacity="0.67"/>
<rect x="985" y="668" width="3" height="22" fill="url(#og)" opacity="0.60"/>
<rect x="988" y="668" width="3" height="22" fill="url(#og)" opacity="0.73"/>
<rect x="991" y="668" width="3" height="22" fill="url(#og)" opacity="0.84"/>
<rect x="994" y="668" width="3" height="22" fill="url(#og)" opacity="0.72"/>
<rect x="997" y="668" width="3" height="22" fill="url(#og)" opacity="1.00"/>
<rect x="1000" y="668" width="3" height="22" fill="url(#og)" opacity="0.86"/>
<rect x="1003" y="668" width="3" height="22" fill="url(#og)" opacity="1.00"/>
<rect x="1006" y="668" width="3" height="22" fill="url(#og)" opacity="0.83"/>
<rect x="1009" y="668" width="3" height="22" fill="url(#og)" opacity="0.96"/>
<rect x="1012" y="668" width="3" height="22" fill="url(#og)" opacity="0.88"/>
<rect x="1015" y="668" width="3" height="22" fill="url(#og)" opacity="0.75"/>
<rect x="1018" y="668" width="3" height="22" fill="url(#og)" opacity="0.61"/>
<rect x="1021" y="668" width="3" height="22" fill="url(#og)" opacity="0.43"/>
<rect x="1024" y="668" width="3" height="22" fill="url(#og)" opacity="0.47"/>
<rect x="1027" y="668" width="3" height="22" fill="url(#og)" opacity="0.35"/>
<rect x="1030" y="668" width="3" height="22" fill="url(#og)" opacity="0.26"/>
<rect x="1033" y="668" width="3" height="22" fill="url(#og)" opacity="0.19"/>
<rect x="1036" y="668" width="3" height="22" fill="url(#og)" opacity="0.28"/>
<rect x="1039" y="668" width="3" height="22" fill="url(#og)" opacity="0.37"/>
<rect x="1045" y="668" width="3" height="22" fill="url(#og)" opacity="0.43"/>
<rect x="1048" y="668" width="3" height="22" fill="url(#og)" opacity="0.27"/>
<rect x="1051" y="668" width="3" height="22" fill="url(#og)" opacity="0.27"/>
<rect x="1054" y="668" width="3" height="22" fill="url(#og)" opacity="0.60"/>
<rect x="1057" y="668" width="3" height="22" fill="url(#og)" opacity="0.41"/>
<rect x="1060" y="668" width="3" height="22" fill="url(#og)" opacity="0.59"/>
<rect x="1063" y="668" width="3" height="22" fill="url(#og)" opacity="0.73"/>
<rect x="1066" y="668" width="3" height="22" fill="url(#og)" opacity="0.58"/>
<rect x="1069" y="668" width="3" height="22" fill="url(#og)" opacity="0.44"/>
<rect x="1072" y="668" width="3" height="22" fill="url(#og)" opacity="0.58"/>
<rect x="1075" y="668" width="3" height="22" fill="url(#og)" opacity="0.70"/>
<rect x="1078" y="668" width="2" height="22" fill="url(#og)" opacity="0.53"/>
<rect x="923" y="600" width="1" height="46" fill="url(#bg)" opacity="0.91"/>
<rect x="336" y="600" width="1" height="51" fill="url(#bg)" opacity="0.92"/>
<rect x="783" y="600" width="2" height="50" fill="url(#bg)" opacity="0.94"/>
<rect x="848" y="600" width="1" height="50" fill="url(#bg)" opacity="0.79"/>
<rect x="816" y="600" width="1" height="49" fill="url(#bg)" opacity="0.76"/>
<rect x="285" y="600" width="1" height="62" fill="url(#bg)" opacity="0.58"/>
<rect x="812" y="600" width="1" height="38" fill="url(#bg)" opacity="0.88"/>
<rect x="458" y="600" width="1" height="63" fill="url(#bg)" opacity="0.71"/>
<rect x="156" y="600" width="1" height="45" fill="url(#bg)" opacity="0.70"/>
<rect x="890" y="600" width="2" height="53" fill="url(#bg)" opacity="0.94"/>
<rect x="1013" y="600" width="1" height="50" fill="url(#bg)" opacity="0.52"/>
<rect x="564" y="600" width="1" height="54" fill="url(#bg)" opacity="0.52"/>
<rect x="318" y="600" width="1" height="54" fill="url(#bg)" opacity="0.74"/>
<rect x="1039" y="600" width="2" height="40" fill="url(#bg)" opacity="0.51"/>
<rect x="412" y="600" width="2" height="64" fill="url(#bg)" opacity="0.46"/>
<rect x="602" y="600" width="1" height="58" fill="url(#bg)" opacity="0.57"/>
<rect x="682" y="600" width="1" height="40" fill="url(#bg)" opacity="0.67"/>
<rect x="578" y="600" width="1" height="55" fill="url(#bg)" opacity="0.80"/>
<rect x="381" y="600" width="2" height="41" fill="url(#bg)" opacity="0.67"/>
<rect x="262" y="600" width="1" height="63" fill="url(#bg)" opacity="0.74"/>
<rect x="499" y="600" width="1" height="40" fill="url(#bg)" opacity="0.85"/>
<rect x="486" y="600" width="1" height="38" fill="url(#bg)" opacity="0.48"/>
<rect x="235" y="600" width="2" height="40" fill="url(#bg)" opacity="0.71"/>
<rect x="730" y="600" width="2" height="60" fill="url(#bg)" opacity="0.45"/>
<rect x="866" y="600" width="1" height="43" fill="url(#bg)" opacity="0.55"/>
<rect x="268" y="600" width="2" height="37" fill="url(#bg)" opacity="0.69"/>
<rect x="516" y="600" width="1" height="44" fill="url(#bg)" opacity="0.98"/>
<rect x="234" y="600" width="1" height="50" fill="url(#bg)" opacity="0.85"/>
<rect x="217" y="600" width="1" height="65" fill="url(#bg)" opacity="0.83"/>
<rect x="903" y="600" width="2" height="39" fill="url(#bg)" opacity="0.95"/>
<rect x="730" y="600" width="1" height="47" fill="url(#bg)" opacity="0.58"/>
<rect x="351" y="600" width="2" height="43" fill="url(#bg)" opacity="0.88"/>
<rect x="962" y="600" width="1" height="40" fill="url(#bg)" opacity="0.88"/>
<rect x="932" y="600" width="1" height="55" fill="url(#bg)" opacity="0.88"/>
<rect x="815" y="600" width="1" height="58" fill="url(#bg)" opacity="0.48"/>
<rect x="1051" y="600" width="1" height="54" fill="url(#bg)" opacity="0.95"/>
<rect x="1059" y="600" width="1" height="59" fill="url(#bg)" opacity="0.64"/>
<rect x="533" y="600" width="1" height="49" fill="url(#bg)" opacity="0.62"/>
<rect x="581" y="600" width="2" height="51" fill="url(#bg)" opacity="0.40"/>
<rect x="823" y="600" width="1" height="61" fill="url(#bg)" opacity="0.80"/>
<rect x="174" y="600" width="1" height="61" fill="url(#bg)" opacity="0.63"/>
<rect x="659" y="600" width="1" height="42" fill="url(#bg)" opacity="0.92"/>
<rect x="286" y="600" width="2" height="51" fill="url(#bg)" opacity="0.68"/>
<rect x="182" y="600" width="1" height="39" fill="url(#bg)" opacity="0.77"/>
<rect x="1017" y="600" width="1" height="40" fill="url(#bg)" opacity="0.95"/>
<rect x="429" y="600" width="2" height="56" fill="url(#bg)" opacity="0.80"/>
<rect x="536" y="600" width="1" height="35" fill="url(#bg)" opacity="0.84"/>
<rect x="385" y="600" width="2" height="47" fill="url(#bg)" opacity="0.58"/>
<rect x="339" y="600" width="2" height="44" fill="url(#bg)" opacity="0.94"/>
<rect x="864" y="600" width="1" height="44" fill="url(#bg)" opacity="0.75"/>
<rect x="698" y="600" width="1" height="60" fill="url(#bg)" opacity="0.68"/>
<rect x="616" y="600" width="1" height="42" fill="url(#bg)" opacity="0.97"/>
<rect x="877" y="600" width="1" height="43" fill="url(#bg)" opacity="0.89"/>
<rect x="627" y="600" width="1" height="63" fill="url(#bg)" opacity="0.62"/>
<rect x="264" y="600" width="1" height="43" fill="url(#bg)" opacity="0.86"/>
<rect x="520" y="600" width="2" height="43" fill="url(#bg)" opacity="0.97"/>
<rect x="1076" y="600" width="2" height="46" fill="url(#bg)" opacity="0.53"/>
<rect x="688" y="600" width="1" height="54" fill="url(#bg)" opacity="0.62"/>
<rect x="491" y="600" width="2" height="38" fill="url(#bg)" opacity="0.76"/>
<rect x="288" y="600" width="1" height="47" fill="url(#bg)" opacity="0.90"/>
<rect x="935" y="600" width="1" height="43" fill="url(#bg)" opacity="0.66"/>
<rect x="587" y="600" width="1" height="40" fill="url(#bg)" opacity="0.68"/>
<rect x="359" y="600" width="1" height="48" fill="url(#bg)" opacity="0.66"/>
<rect x="266" y="600" width="2" height="64" fill="url(#bg)" opacity="0.99"/>
<rect x="886" y="600" width="1" height="56" fill="url(#bg)" opacity="0.98"/>
<rect x="291" y="600" width="1" height="35" fill="url(#bg)" opacity="0.95"/>
<rect x="897" y="600" width="2" height="49" fill="url(#bg)" opacity="0.87"/>
<rect x="481" y="600" width="1" height="37" fill="url(#bg)" opacity="0.42"/>
<rect x="749" y="600" width="1" height="62" fill="url(#bg)" opacity="0.94"/>
<rect x="969" y="600" width="1" height="39" fill="url(#bg)" opacity="0.46"/>
<rect x="978" y="600" width="1" height="37" fill="url(#bg)" opacity="0.82"/>
<rect x="215" y="600" width="1" height="38" fill="url(#bg)" opacity="0.55"/>
<rect x="1027" y="600" width="1" height="53" fill="url(#bg)" opacity="0.92"/>
<rect x="1039" y="600" width="1" height="57" fill="url(#bg)" opacity="0.47"/>
<rect x="720" y="600" width="1" height="44" fill="url(#bg)" opacity="0.52"/>
<rect x="293" y="600" width="1" height="37" fill="url(#bg)" opacity="0.97"/>
<rect x="464" y="600" width="1" height="61" fill="url(#bg)" opacity="0.73"/>
<rect x="169" y="600" width="2" height="48" fill="url(#bg)" opacity="0.70"/>
<rect x="409" y="600" width="1" height="37" fill="url(#bg)" opacity="0.75"/>
<rect x="259" y="600" width="1" height="58" fill="url(#bg)" opacity="0.53"/>
<rect x="889" y="600" width="1" height="50" fill="url(#bg)" opacity="0.50"/>
<rect x="885" y="600" width="1" height="39" fill="url(#bg)" opacity="0.68"/>
<rect x="465" y="600" width="1" height="41" fill="url(#bg)" opacity="0.42"/>
<rect x="1023" y="600" width="1" height="61" fill="url(#bg)" opacity="0.74"/>
<rect x="609" y="600" width="2" height="61" fill="url(#bg)" opacity="0.95"/>
<rect x="691" y="600" width="1" height="59" fill="url(#bg)" opacity="0.58"/>
<rect x="457" y="600" width="1" height="39" fill="url(#bg)" opacity="0.47"/>
<rect x="700" y="600" width="2" height="53" fill="url(#bg)" opacity="0.63"/>
<rect x="395" y="600" width="1" height="58" fill="url(#bg)" opacity="0.89"/>
<rect x="585" y="600" width="2" height="39" fill="url(#bg)" opacity="0.75"/>
<rect x="708" y="600" width="1" height="64" fill="url(#bg)" opacity="0.93"/>
<rect x="970" y="600" width="2" height="51" fill="url(#bg)" opacity="0.77"/>
<rect x="247" y="600" width="1" height="58" fill="url(#bg)" opacity="0.76"/>
<rect x="560" y="600" width="1" height="40" fill="url(#bg)" opacity="0.73"/>
<rect x="863" y="600" width="1" height="39" fill="url(#bg)" opacity="0.48"/>
<rect x="800" y="600" width="2" height="50" fill="url(#bg)" opacity="0.44"/>
<rect x="296" y="600" width="1" height="59" fill="url(#bg)" opacity="0.71"/>
<rect x="556" y="600" width="1" height="53" fill="url(#bg)" opacity="0.63"/>
<rect x="456" y="600" width="2" height="46" fill="url(#bg)" opacity="0.47"/>
<rect x="151" y="600" width="1" height="46" fill="url(#bg)" opacity="0.81"/>
<rect x="415" y="600" width="1" height="42" fill="url(#bg)" opacity="0.85"/>
<rect x="952" y="600" width="2" height="35" fill="url(#bg)" opacity="0.84"/>
<rect x="313" y="600" width="2" height="47" fill="url(#bg)" opacity="0.53"/>
<rect x="138" y="600" width="1" height="35" fill="url(#bg)" opacity="0.63"/>
<rect x="637" y="600" width="1" height="52" fill="url(#bg)" opacity="0.60"/>
<rect x="818" y="600" width="2" height="36" fill="url(#bg)" opacity="0.88"/>
<rect x="812" y="600" width="1" height="45" fill="url(#bg)" opacity="0.42"/>
<rect x="588" y="600" width="1" height="40" fill="url(#bg)" opacity="0.80"/>
<rect x="912" y="600" width="2" height="57" fill="url(#bg)" opacity="0.52"/>
<rect x="955" y="600" width="1" height="64" fill="url(#bg)" opacity="0.43"/>
<rect x="556" y="600" width="1" height="38" fill="url(#bg)" opacity="0.63"/>
<rect x="874" y="600" width="2" height="53" fill="url(#bg)" opacity="0.71"/>
<rect x="160" y="600" width="2" height="58" fill="url(#bg)" opacity="0.51"/>
<rect x="314" y="600" width="1" height="41" fill="url(#bg)" opacity="0.84"/>
<rect x="744" y="600" width="1" height="52" fill="url(#bg)" opacity="0.54"/>
<rect x="875" y="600" width="1" height="46" fill="url(#bg)" opacity="0.94"/>
<rect x="828" y="600" width="1" height="64" fill="url(#bg)" opacity="0.67"/>
<rect x="373" y="600" width="1" height="63" fill="url(#bg)" opacity="0.64"/>
<rect x="962" y="600" width="1" height="58" fill="url(#bg)" opacity="0.73"/>
<rect x="813" y="600" width="1" height="42" fill="url(#bg)" opacity="0.64"/>
<rect x="473" y="600" width="1" height="46" fill="url(#bg)" opacity="0.94"/>
<rect x="569" y="600" width="2" height="39" fill="url(#bg)" opacity="0.67"/>
<rect x="688" y="600" width="2" height="63" fill="url(#bg)" opacity="0.74"/>
<rect x="598" y="600" width="2" height="51" fill="url(#bg)" opacity="0.86"/>
<rect x="697" y="600" width="1" height="44" fill="url(#bg)" opacity="0.57"/>
<rect x="591" y="600" width="1" height="59" fill="url(#bg)" opacity="0.76"/>
<rect x="409" y="600" width="1" height="36" fill="url(#bg)" opacity="0.80"/>
<rect x="394" y="600" width="1" height="65" fill="url(#bg)" opacity="0.77"/>
<rect x="887" y="600" width="2" height="36" fill="url(#bg)" opacity="0.57"/>
<rect x="208" y="600" width="1" height="59" fill="url(#bg)" opacity="0.68"/>
<rect x="1025" y="600" width="2" height="46" fill="url(#bg)" opacity="0.96"/>
<rect x="609" y="600" width="2" height="54" fill="url(#bg)" opacity="0.80"/>
<rect x="441" y="600" width="2" height="55" fill="url(#bg)" opacity="0.56"/>
<rect x="664" y="600" width="1" height="42" fill="url(#bg)" opacity="0.78"/>
<rect x="773" y="600" width="1" height="41" fill="url(#bg)" opacity="0.93"/>
<rect x="632" y="600" width="1" height="59" fill="url(#bg)" opacity="0.78"/>
<rect x="776" y="600" width="2" height="48" fill="url(#bg)" opacity="0.72"/>
<rect x="415" y="600" width="2" height="48" fill="url(#bg)" opacity="0.97"/>
<rect x="941" y="600" width="1" height="39" fill="url(#bg)" opacity="0.60"/>
<rect x="793" y="600" width="2" height="39" fill="url(#bg)" opacity="0.83"/>
<rect x="190" y="600" width="1" height="41" fill="url(#bg)" opacity="0.54"/>
<rect x="774" y="600" width="1" height="49" fill="url(#bg)" opacity="0.50"/>
<rect x="666" y="600" width="1" height="49" fill="url(#bg)" opacity="0.63"/>
<rect x="1010" y="600" width="1" height="53" fill="url(#bg)" opacity="0.63"/>
<rect x="433" y="600" width="1" height="59" fill="url(#bg)" opacity="0.47"/>
<rect x="591" y="600" width="1" height="59" fill="url(#bg)" opacity="0.65"/>
<rect x="870" y="600" width="1" height="45" fill="url(#bg)" opacity="0.89"/>
<rect x="1047" y="600" width="2" height="58" fill="url(#bg)" opacity="0.71"/>
<rect x="425" y="600" width="1" height="39" fill="url(#bg)" opacity="0.83"/>
<rect x="419" y="600" width="2" height="41" fill="url(#bg)" opacity="0.81"/>
<rect x="895" y="600" width="1" height="51" fill="url(#bg)" opacity="0.66"/>
<rect x="253" y="600" width="1" height="64" fill="url(#bg)" opacity="0.79"/>
<rect x="875" y="600" width="2" height="46" fill="url(#bg)" opacity="0.41"/>
<rect x="99" y="600" width="1" height="57" fill="url(#bg)" opacity="0.67"/>
<rect x="800" y="600" width="2" height="55" fill="url(#bg)" opacity="0.79"/>
<rect x="238" y="600" width="2" height="57" fill="url(#bg)" opacity="0.47"/>
<rect x="985" y="600" width="2" height="64" fill="url(#bg)" opacity="0.76"/>
<rect x="346" y="600" width="1" height="54" fill="url(#bg)" opacity="0.98"/>
<rect x="362" y="600" width="1" height="56" fill="url(#bg)" opacity="0.93"/>
<rect x="179" y="600" width="1" height="55" fill="url(#bg)" opacity="0.57"/>
<rect x="457" y="600" width="1" height="64" fill="url(#bg)" opacity="0.88"/>
<rect x="628" y="600" width="2" height="41" fill="url(#bg)" opacity="0.72"/>
<rect x="126" y="600" width="2" height="35" fill="url(#bg)" opacity="0.73"/>
<rect x="206" y="600" width="2" height="37" fill="url(#bg)" opacity="0.50"/>
<rect x="727" y="600" width="1" height="65" fill="url(#bg)" opacity="0.78"/>
<rect x="337" y="600" width="1" height="64" fill="url(#bg)" opacity="0.69"/>
<rect x="1029" y="600" width="1" height="37" fill="url(#bg)" opacity="0.92"/>
<rect x="795" y="600" width="1" height="41" fill="url(#bg)" opacity="0.55"/>
<rect x="966" y="600" width="2" height="35" fill="url(#bg)" opacity="0.94"/>
<rect x="505" y="600" width="2" height="65" fill="url(#bg)" opacity="0.66"/>
<path fill="#000" d="M97 647.5v16.5h1v-16.5zM97 617.5v12.5h1v-12.5zM97 514.5v67.5h1v-67.5zM98 664v12h1v-12zM98 630v17.5h1v-17.5zM98 605v12.5h1v-12.5zM98 514.5v67.5h1v-67.5zM99 530v134h1v-134zM99 514.5v7.5h1v-7.5zM100 676v14h1v-14zM100 542v122h1v-122zM100 514.5v7.5h1v-7.5zM101 676v14h1v-14zM101 553v111h1v-111zM101 514.5v7.5h1v-7.5zM102 676v14h1v-14zM102 553v111h1v-111zM102 514.5v7.5h1v-7.5zM103 676v14h1v-14zM103 553v111h1v-111zM103 514.5v15.5h1v-15.5zM104 630v17.5h1v-17.5zM104 582v35.5h1v-35.5zM104 514.5v54.5h1v-54.5zM105 630v17.5h1v-17.5zM105 582v35.5h1v-35.5zM105 514.5v54.5h1v-54.5zM106 582v94h1v-94zM106 542v11h1v-11zM106 514.5v15.5h1v-15.5zM107 605v25h1v-25zM107 569v13h1v-13zM107 514.5v38.5h1v-38.5zM108 542v122h1v-122zM108 514.5v15.5h1v-15.5zM109 542v122h1v-122zM109 514.5v15.5h1v-15.5zM110 605v59h1v-59zM110 542v40h1v-40zM110 514.5v15.5h1v-15.5zM111 605v59h1v-59zM111 542v40h1v-40zM111 514.5v15.5h1v-15.5zM112 664v12h1v-12zM112 630v17.5h1v-17.5zM112 514.5v103h1v-103zM113 664v12h1v-12zM113 630v17.5h1v-17.5zM113 553v64.5h1v-64.5zM113 514.5v27.5h1v-27.5zM114 664v12h1v-12zM114 630v17.5h1v-17.5zM114 553v64.5h1v-64.5zM114 514.5v27.5h1v-27.5zM115 664v12h1v-12zM115 630v17.5h1v-17.5zM115 553v64.5h1v-64.5zM115 514.5v27.5h1v-27.5zM116 676v14h1v-14zM116 542v105.5h1v-105.5zM116 514.5v15.5h1v-15.5zM117 676v14h1v-14zM117 542v105.5h1v-105.5zM117 514.5v15.5h1v-15.5zM118 676v14h1v-14zM118 542v105.5h1v-105.5zM118 514.5v15.5h1v-15.5zM119 676v14h1v-14zM119 542v105.5h1v-105.5zM119 514.5v15.5h1v-15.5zM120 630v46h1v-46zM120 553v29h1v-29zM120 514.5v15.5h1v-15.5zM121 647.5v42.5h1v-42.5zM121 514.5v103h1v-103zM122 514.5v149.5h1v-149.5zM123 514.5v115.5h1v-115.5zM124 630v34h1v-34zM124 569v13h1v-13zM124 514.5v27.5h1v-27.5zM125 664v12h1v-12zM125 569v48.5h1v-48.5zM125 514.5v38.5h1v-38.5zM126 605v59h1v-59zM126 514.5v67.5h1v-67.5zM127 630v17.5h1v-17.5zM127 569v13h1v-13zM127 542v11h1v-11zM127 514.5v15.5h1v-15.5zM128 664v26h1v-26zM128 630v17.5h1v-17.5zM128 569v36h1v-36zM128 542v11h1v-11zM128 514.5v15.5h1v-15.5zM129 605v59h1v-59zM129 553v29h1v-29zM129 514.5v15.5h1v-15.5zM130 582v35.5h1v-35.5zM130 542v27h1v-27zM130 514.5v15.5h1v-15.5zM131 676v14h1v-14zM131 569v78.5h1v-78.5zM131 514.5v38.5h1v-38.5zM132 647.5v42.5h1v-42.5zM132 569v61h1v-61zM132 542v11h1v-11zM132 514.5v15.5h1v-15.5zM133 664v12h1v-12zM133 630v17.5h1v-17.5zM133 514.5v103h1v-103zM134 676v14h1v-14zM134 569v61h1v-61zM134 542v11h1v-11zM134 514.5v15.5h1v-15.5zM135 676v14h1v-14zM135 514.5v115.5h1v-115.5zM136 582v48h1v-48zM136 542v27h1v-27zM136 514.5v15.5h1v-15.5zM137 617.5v12.5h1v-12.5zM137 542v63h1v-63zM137 514.5v15.5h1v-15.5zM138 664v26h1v-26zM138 630v17.5h1v-17.5zM138 605v12.5h1v-12.5zM138 514.5v54.5h1v-54.5zM139 664v26h1v-26zM139 630v17.5h1v-17.5zM139 605v12.5h1v-12.5zM139 514.5v54.5h1v-54.5zM140 617.5v72.5h1v-72.5zM140 582v23h1v-23zM140 542v27h1v-27zM140 514.5v15.5h1v-15.5zM141 664v12h1v-12zM141 530v75h1v-75zM141 514.5v7.5h1v-7.5zM142 664v12h1v-12zM142 530v75h1v-75zM142 514.5v7.5h1v-7.5zM143 664v12h1v-12zM143 605v42.5h1v-42.5zM143 569v13h1v-13zM143 514.5v38.5h1v-38.5zM144 664v12h1v-12zM144 605v42.5h1v-42.5zM144 514.5v67.5h1v-67.5zM145 514.5v90.5h1v-90.5zM146 647.5v42.5h1v-42.5zM146 542v75.5h1v-75.5zM146 514.5v15.5h1v-15.5zM147 647.5v42.5h1v-42.5zM147 582v35.5h1v-35.5zM147 542v27h1v-27zM147 514.5v15.5h1v-15.5zM148 664v12h1v-12zM148 569v61h1v-61zM148 514.5v38.5h1v-38.5zM149 664v12h1v-12zM149 514.5v115.5h1v-115.5zM150 530v87.5h1v-87.5zM150 514.5v7.5h1v-7.5zM151 605v25h1v-25zM151 542v40h1v-40zM151 514.5v15.5h1v-15.5zM152 647.5v42.5h1v-42.5zM152 582v48h1v-48zM152 553v16h1v-16zM152 514.5v27.5h1v-27.5zM153 664v26h1v-26zM153 553v77h1v-77zM153 514.5v27.5h1v-27.5zM154 664v26h1v-26zM154 542v75.5h1v-75.5zM154 514.5v15.5h1v-15.5zM155 664v26h1v-26zM155 542v75.5h1v-75.5zM155 514.5v15.5h1v-15.5zM156 664v26h1v-26zM156 542v75.5h1v-75.5zM156 514.5v15.5h1v-15.5zM157 647.5v42.5h1v-42.5zM157 617.5v12.5h1v-12.5zM157 530v52h1v-52zM157 514.5v7.5h1v-7.5zM158 617.5v30h1v-30zM158 569v36h1v-36zM158 514.5v38.5h1v-38.5zM159 617.5v58.5h1v-58.5zM159 542v40h1v-40zM159 514.5v15.5h1v-15.5zM160 617.5v58.5h1v-58.5zM160 542v40h1v-40zM160 514.5v15.5h1v-15.5zM161 630v60h1v-60zM161 605v12.5h1v-12.5zM161 569v13h1v-13zM161 514.5v38.5h1v-38.5zM162 664v26h1v-26zM162 605v42.5h1v-42.5zM162 542v40h1v-40zM162 514.5v15.5h1v-15.5zM163 664v26h1v-26zM163 605v42.5h1v-42.5zM163 542v40h1v-40zM163 514.5v15.5h1v-15.5zM164 647.5v28.5h1v-28.5zM164 617.5v12.5h1v-12.5zM164 582v23h1v-23zM164 542v27h1v-27zM164 514.5v15.5h1v-15.5zM165 630v46h1v-46zM165 582v35.5h1v-35.5zM165 542v11h1v-11zM165 514.5v15.5h1v-15.5zM166 553v64.5h1v-64.5zM166 514.5v27.5h1v-27.5zM167 514.5v149.5h1v-149.5zM168 676v14h1v-14zM168 647.5v16.5h1v-16.5zM168 553v52h1v-52zM168 514.5v27.5h1v-27.5zM169 676v14h1v-14zM169 647.5v16.5h1v-16.5zM169 553v52h1v-52zM169 530v12h1v-12zM169 514.5v7.5h1v-7.5zM170 664v12h1v-12zM170 514.5v103h1v-103zM171 514.5v90.5h1v-90.5zM172 514.5v90.5h1v-90.5zM173 514.5v90.5h1v-90.5zM174 605v42.5h1v-42.5zM174 553v16h1v-16zM174 514.5v27.5h1v-27.5zM175 605v42.5h1v-42.5zM175 553v16h1v-16zM175 514.5v27.5h1v-27.5zM176 605v42.5h1v-42.5zM176 514.5v67.5h1v-67.5zM177 630v60h1v-60zM177 569v48.5h1v-48.5zM177 514.5v27.5h1v-27.5zM178 647.5v16.5h1v-16.5zM178 605v25h1v-25zM178 553v29h1v-29zM178 514.5v15.5h1v-15.5zM179 647.5v16.5h1v-16.5zM179 605v25h1v-25zM179 553v29h1v-29zM179 514.5v15.5h1v-15.5zM180 542v27h1v-27zM180 514.5v15.5h1v-15.5zM181 514.5v103h1v-103zM182 514.5v103h1v-103zM183 514.5v103h1v-103zM184 664v26h1v-26zM184 630v17.5h1v-17.5zM184 569v13h1v-13zM184 514.5v38.5h1v-38.5zM185 664v26h1v-26zM185 630v17.5h1v-17.5zM185 514.5v67.5h1v-67.5zM186 647.5v28.5h1v-28.5zM186 617.5v12.5h1v-12.5zM186 542v63h1v-63zM186 514.5v15.5h1v-15.5zM187 647.5v28.5h1v-28.5zM187 617.5v12.5h1v-12.5zM187 582v23h1v-23zM187 514.5v54.5h1v-54.5zM188 582v35.5h1v-35.5zM188 514.5v38.5h1v-38.5zM189 617.5v58.5h1v-58.5zM189 569v36h1v-36zM189 542v11h1v-11zM189 514.5v15.5h1v-15.5zM190 617.5v58.5h1v-58.5zM190 569v36h1v-36zM190 514.5v38.5h1v-38.5zM191 647.5v42.5h1v-42.5zM191 582v23h1v-23zM191 514.5v38.5h1v-38.5zM192 647.5v28.5h1v-28.5zM192 514.5v67.5h1v-67.5zM193 647.5v28.5h1v-28.5zM193 514.5v67.5h1v-67.5zM194 647.5v28.5h1v-28.5zM194 542v40h1v-40zM194 514.5v15.5h1v-15.5zM195 647.5v28.5h1v-28.5zM195 542v40h1v-40zM195 514.5v15.5h1v-15.5zM196 647.5v28.5h1v-28.5zM196 542v40h1v-40zM196 514.5v15.5h1v-15.5zM197 630v17.5h1v-17.5zM197 582v35.5h1v-35.5zM197 514.5v54.5h1v-54.5zM198 617.5v46.5h1v-46.5zM198 514.5v90.5h1v-90.5zM199 676v14h1v-14zM199 569v13h1v-13zM199 514.5v15.5h1v-15.5zM200 676v14h1v-14zM200 605v12.5h1v-12.5zM200 542v40h1v-40zM200 514.5v15.5h1v-15.5zM201 605v71h1v-71zM201 542v40h1v-40zM201 514.5v15.5h1v-15.5zM202 647.5v28.5h1v-28.5zM202 582v48h1v-48zM202 553v16h1v-16zM202 514.5v27.5h1v-27.5zM203 647.5v28.5h1v-28.5zM203 553v77h1v-77zM203 514.5v27.5h1v-27.5zM204 553v111h1v-111zM204 514.5v15.5h1v-15.5zM205 553v111h1v-111zM205 514.5v15.5h1v-15.5zM206 676v14h1v-14zM206 647.5v16.5h1v-16.5zM206 514.5v115.5h1v-115.5zM207 569v107h1v-107zM207 514.5v38.5h1v-38.5zM208 664v12h1v-12zM208 630v17.5h1v-17.5zM208 569v48.5h1v-48.5zM208 514.5v27.5h1v-27.5zM209 664v12h1v-12zM209 630v17.5h1v-17.5zM209 569v48.5h1v-48.5zM209 514.5v27.5h1v-27.5zM210 647.5v28.5h1v-28.5zM210 514.5v115.5h1v-115.5zM211 553v52h1v-52zM211 514.5v15.5h1v-15.5zM212 664v12h1v-12zM212 569v78.5h1v-78.5zM212 542v11h1v-11zM212 514.5v15.5h1v-15.5zM213 676v14h1v-14zM213 582v35.5h1v-35.5zM213 553v16h1v-16zM213 514.5v27.5h1v-27.5zM214 605v25h1v-25zM214 569v13h1v-13zM214 514.5v38.5h1v-38.5zM215 605v25h1v-25zM215 569v13h1v-13zM215 514.5v38.5h1v-38.5zM216 514.5v115.5h1v-115.5zM217 676v14h1v-14zM217 630v34h1v-34zM217 582v35.5h1v-35.5zM217 514.5v38.5h1v-38.5zM218 617.5v58.5h1v-58.5zM218 514.5v90.5h1v-90.5zM219 542v88h1v-88zM219 514.5v15.5h1v-15.5zM220 514.5v115.5h1v-115.5zM221 569v61h1v-61zM221 514.5v38.5h1v-38.5zM222 569v61h1v-61zM222 514.5v38.5h1v-38.5zM223 647.5v16.5h1v-16.5zM223 553v52h1v-52zM223 514.5v27.5h1v-27.5zM224 647.5v16.5h1v-16.5zM224 542v75.5h1v-75.5zM224 514.5v15.5h1v-15.5zM225 647.5v16.5h1v-16.5zM225 569v48.5h1v-48.5zM225 514.5v38.5h1v-38.5zM226 676v14h1v-14zM226 605v42.5h1v-42.5zM226 553v29h1v-29zM226 530v12h1v-12zM226 514.5v7.5h1v-7.5zM227 664v12h1v-12zM227 605v42.5h1v-42.5zM227 542v40h1v-40zM227 514.5v15.5h1v-15.5zM228 514.5v149.5h1v-149.5zM229 676v14h1v-14zM229 617.5v30h1v-30zM229 514.5v90.5h1v-90.5zM230 553v16h1v-16zM230 514.5v27.5h1v-27.5zM231 664v26h1v-26zM231 514.5v133h1v-133zM232 630v17.5h1v-17.5zM232 605v12.5h1v-12.5zM232 542v40h1v-40zM232 514.5v15.5h1v-15.5zM233 630v17.5h1v-17.5zM233 605v12.5h1v-12.5zM233 542v40h1v-40zM233 514.5v15.5h1v-15.5zM234 630v17.5h1v-17.5zM234 605v12.5h1v-12.5zM234 553v29h1v-29zM234 514.5v15.5h1v-15.5zM235 630v17.5h1v-17.5zM235 605v12.5h1v-12.5zM235 553v29h1v-29zM235 514.5v15.5h1v-15.5zM236 630v17.5h1v-17.5zM236 605v12.5h1v-12.5zM236 553v29h1v-29zM236 514.5v15.5h1v-15.5zM237 605v85h1v-85zM237 553v16h1v-16zM237 514.5v27.5h1v-27.5zM238 605v85h1v-85zM238 514.5v54.5h1v-54.5zM239 605v42.5h1v-42.5zM239 569v13h1v-13zM239 514.5v38.5h1v-38.5zM240 605v42.5h1v-42.5zM240 569v13h1v-13zM240 514.5v38.5h1v-38.5zM241 664v12h1v-12zM241 617.5v30h1v-30zM241 514.5v90.5h1v-90.5zM242 676v14h1v-14zM242 617.5v12.5h1v-12.5zM242 514.5v90.5h1v-90.5zM243 676v14h1v-14zM243 617.5v12.5h1v-12.5zM243 569v36h1v-36zM243 514.5v38.5h1v-38.5zM244 676v14h1v-14zM244 617.5v12.5h1v-12.5zM244 569v36h1v-36zM244 514.5v38.5h1v-38.5zM245 676v14h1v-14zM245 617.5v12.5h1v-12.5zM245 569v36h1v-36zM245 514.5v27.5h1v-27.5zM246 676v14h1v-14zM246 617.5v12.5h1v-12.5zM246 569v36h1v-36zM246 514.5v27.5h1v-27.5zM247 542v40h1v-40zM247 514.5v15.5h1v-15.5zM248 514.5v54.5h1v-54.5zM249 514.5v67.5h1v-67.5zM250 569v13h1v-13zM250 514.5v15.5h1v-15.5zM251 569v13h1v-13zM251 514.5v15.5h1v-15.5zM252 569v13h1v-13zM252 514.5v15.5h1v-15.5zM253 569v48.5h1v-48.5zM253 514.5v38.5h1v-38.5zM254 582v23h1v-23zM254 514.5v54.5h1v-54.5zM255 514.5v133h1v-133zM256 514.5v67.5h1v-67.5zM257 542v27h1v-27zM257 514.5v15.5h1v-15.5zM258 605v59h1v-59zM258 542v40h1v-40zM258 514.5v15.5h1v-15.5zM259 630v17.5h1v-17.5zM259 553v16h1v-16zM259 514.5v27.5h1v-27.5zM260 542v40h1v-40zM260 514.5v15.5h1v-15.5zM261 569v13h1v-13zM261 542v11h1v-11zM261 514.5v15.5h1v-15.5zM262 569v13h1v-13zM262 542v11h1v-11zM262 514.5v15.5h1v-15.5zM263 542v40h1v-40zM263 514.5v15.5h1v-15.5zM264 569v36h1v-36zM264 514.5v38.5h1v-38.5zM265 553v111h1v-111zM265 514.5v27.5h1v-27.5zM266 514.5v149.5h1v-149.5zM267 605v25h1v-25zM267 542v40h1v-40zM267 514.5v15.5h1v-15.5zM268 605v25h1v-25zM268 553v29h1v-29zM268 514.5v15.5h1v-15.5zM269 569v48.5h1v-48.5zM269 514.5v38.5h1v-38.5zM270 514.5v67.5h1v-67.5zM271 617.5v46.5h1v-46.5zM271 569v36h1v-36zM271 542v11h1v-11zM271 514.5v7.5h1v-7.5zM272 542v40h1v-40zM272 514.5v15.5h1v-15.5zM273 514.5v67.5h1v-67.5zM274 569v13h1v-13zM274 514.5v38.5h1v-38.5zM275 514.5v90.5h1v-90.5zM276 569v95h1v-95zM276 514.5v38.5h1v-38.5zM277 582v48h1v-48zM277 530v39h1v-39zM277 514.5v7.5h1v-7.5zM278 569v13h1v-13zM278 514.5v38.5h1v-38.5zM279 514.5v103h1v-103zM280 514.5v133h1v-133zM281 514.5v103h1v-103zM282 553v77h1v-77zM282 514.5v27.5h1v-27.5zM283 569v13h1v-13zM283 542v11h1v-11zM283 514.5v15.5h1v-15.5zM284 605v12.5h1v-12.5zM284 569v13h1v-13zM284 514.5v15.5h1v-15.5zM285 605v12.5h1v-12.5zM285 569v13h1v-13zM285 514.5v15.5h1v-15.5zM286 514.5v115.5h1v-115.5zM287 514.5v115.5h1v-115.5zM288 569v13h1v-13zM288 514.5v27.5h1v-27.5zM289 569v13h1v-13zM289 514.5v27.5h1v-27.5zM290 514.5v103h1v-103zM291 582v65.5h1v-65.5zM291 514.5v38.5h1v-38.5zM292 514.5v133h1v-133zM293 569v78.5h1v-78.5zM293 514.5v38.5h1v-38.5zM294 514.5v115.5h1v-115.5zM295 514.5v115.5h1v-115.5zM296 569v78.5h1v-78.5zM296 542v11h1v-11zM296 514.5v15.5h1v-15.5zM297 530v117.5h1v-117.5zM297 514.5v7.5h1v-7.5zM298 605v42.5h1v-42.5zM298 542v40h1v-40zM298 514.5v7.5h1v-7.5zM299 553v77h1v-77zM299 514.5v27.5h1v-27.5zM300 553v77h1v-77zM300 514.5v27.5h1v-27.5zM301 582v23h1v-23zM301 542v27h1v-27zM301 514.5v15.5h1v-15.5zM302 569v13h1v-13zM302 542v11h1v-11zM302 514.5v15.5h1v-15.5zM303 569v13h1v-13zM303 542v11h1v-11zM303 514.5v15.5h1v-15.5zM304 542v40h1v-40zM304 514.5v15.5h1v-15.5zM305 542v40h1v-40zM305 514.5v15.5h1v-15.5zM306 569v78.5h1v-78.5zM306 514.5v38.5h1v-38.5zM307 569v61h1v-61zM307 514.5v38.5h1v-38.5zM308 514.5v67.5h1v-67.5zM309 514.5v133h1v-133zM310 542v105.5h1v-105.5zM310 514.5v15.5h1v-15.5zM311 569v95h1v-95zM311 514.5v7.5h1v-7.5zM312 514.5v67.5h1v-67.5zM313 542v40h1v-40zM313 514.5v15.5h1v-15.5zM314 542v11h1v-11zM314 514.5v15.5h1v-15.5zM315 582v65.5h1v-65.5zM315 514.5v27.5h1v-27.5zM316 569v48.5h1v-48.5zM316 514.5v38.5h1v-38.5zM317 569v48.5h1v-48.5zM317 514.5v38.5h1v-38.5zM318 569v48.5h1v-48.5zM318 514.5v38.5h1v-38.5zM319 542v88h1v-88zM319 514.5v15.5h1v-15.5zM320 582v65.5h1v-65.5zM320 542v27h1v-27zM320 514.5v15.5h1v-15.5zM321 514.5v90.5h1v-90.5zM322 569v36h1v-36zM322 542v11h1v-11zM322 514.5v15.5h1v-15.5zM323 569v78.5h1v-78.5zM323 514.5v38.5h1v-38.5zM324 514.5v115.5h1v-115.5zM325 605v42.5h1v-42.5zM325 569v13h1v-13zM325 514.5v27.5h1v-27.5zM326 542v122h1v-122zM326 514.5v15.5h1v-15.5zM327 514.5v149.5h1v-149.5zM328 569v13h1v-13zM328 542v11h1v-11zM328 514.5v7.5h1v-7.5zM329 569v61h1v-61zM329 542v11h1v-11zM329 514.5v15.5h1v-15.5zM330 582v65.5h1v-65.5zM330 542v27h1v-27zM330 514.5v15.5h1v-15.5zM331 553v94.5h1v-94.5zM331 514.5v27.5h1v-27.5zM332 514.5v133h1v-133zM333 582v65.5h1v-65.5zM333 542v27h1v-27zM333 514.5v15.5h1v-15.5zM334 542v105.5h1v-105.5zM334 514.5v15.5h1v-15.5zM335 514.5v115.5h1v-115.5zM336 514.5v115.5h1v-115.5zM337 514.5v115.5h1v-115.5zM338 514.5v115.5h1v-115.5zM339 569v13h1v-13zM339 542v11h1v-11zM339 514.5v15.5h1v-15.5zM340 514.5v115.5h1v-115.5zM341 542v122h1v-122zM341 514.5v15.5h1v-15.5zM342 542v122h1v-122zM342 514.5v15.5h1v-15.5zM343 514.5v90.5h1v-90.5zM344 514.5v103h1v-103zM345 514.5v103h1v-103zM346 530v52h1v-52zM346 514.5v7.5h1v-7.5zM347 514.5v133h1v-133zM348 630v17.5h1v-17.5zM348 553v64.5h1v-64.5zM348 514.5v27.5h1v-27.5zM349 553v29h1v-29zM349 514.5v15.5h1v-15.5zM350 553v29h1v-29zM350 514.5v15.5h1v-15.5zM351 553v29h1v-29zM351 514.5v27.5h1v-27.5zM352 569v61h1v-61zM352 514.5v38.5h1v-38.5zM353 514.5v115.5h1v-115.5zM354 582v48h1v-48zM354 514.5v54.5h1v-54.5zM355 553v94.5h1v-94.5zM355 514.5v27.5h1v-27.5zM356 582v48h1v-48zM356 514.5v15.5h1v-15.5zM357 514.5v67.5h1v-67.5zM358 514.5v67.5h1v-67.5zM359 514.5v67.5h1v-67.5zM360 569v78.5h1v-78.5zM360 514.5v27.5h1v-27.5zM361 582v35.5h1v-35.5zM361 542v11h1v-11zM361 514.5v15.5h1v-15.5zM362 514.5v90.5h1v-90.5zM363 617.5v30h1v-30zM363 569v36h1v-36zM363 542v11h1v-11zM363 514.5v15.5h1v-15.5zM364 647.5v16.5h1v-16.5zM364 514.5v115.5h1v-115.5zM365 647.5v16.5h1v-16.5zM365 542v88h1v-88zM365 514.5v15.5h1v-15.5zM366 647.5v16.5h1v-16.5zM366 514.5v115.5h1v-115.5zM367 647.5v16.5h1v-16.5zM367 514.5v115.5h1v-115.5zM368 647.5v16.5h1v-16.5zM368 514.5v115.5h1v-115.5zM369 582v65.5h1v-65.5zM369 553v16h1v-16zM369 530v12h1v-12zM369 514.5v7.5h1v-7.5zM370 582v65.5h1v-65.5zM370 553v16h1v-16zM370 530v12h1v-12zM370 514.5v7.5h1v-7.5zM371 530v117.5h1v-117.5zM371 514.5v7.5h1v-7.5zM372 582v65.5h1v-65.5zM372 530v39h1v-39zM372 514.5v7.5h1v-7.5zM373 514.5v54.5h1v-54.5zM374 514.5v54.5h1v-54.5zM375 514.5v103h1v-103zM376 542v40h1v-40zM376 514.5v15.5h1v-15.5zM377 617.5v12.5h1v-12.5zM377 514.5v90.5h1v-90.5zM378 569v13h1v-13zM378 514.5v38.5h1v-38.5zM379 569v13h1v-13zM379 514.5v38.5h1v-38.5zM380 514.5v38.5h1v-38.5zM381 514.5v103h1v-103zM382 542v75.5h1v-75.5zM382 514.5v15.5h1v-15.5zM383 542v75.5h1v-75.5zM383 514.5v15.5h1v-15.5zM384 605v12.5h1v-12.5zM384 569v13h1v-13zM384 542v11h1v-11zM384 514.5v15.5h1v-15.5zM385 630v17.5h1v-17.5zM385 569v13h1v-13zM385 514.5v38.5h1v-38.5zM386 630v17.5h1v-17.5zM386 569v13h1v-13zM386 514.5v38.5h1v-38.5zM387 630v17.5h1v-17.5zM387 514.5v38.5h1v-38.5zM388 630v17.5h1v-17.5zM388 514.5v38.5h1v-38.5zM389 630v17.5h1v-17.5zM389 514.5v38.5h1v-38.5zM390 617.5v46.5h1v-46.5zM390 553v52h1v-52zM390 514.5v27.5h1v-27.5zM391 617.5v46.5h1v-46.5zM391 553v52h1v-52zM391 514.5v27.5h1v-27.5zM392 569v78.5h1v-78.5zM392 542v11h1v-11zM392 514.5v15.5h1v-15.5zM393 530v75h1v-75zM393 514.5v7.5h1v-7.5zM394 569v36h1v-36zM394 514.5v15.5h1v-15.5zM395 514.5v133h1v-133zM396 582v23h1v-23zM396 514.5v27.5h1v-27.5zM397 569v13h1v-13zM397 514.5v38.5h1v-38.5zM398 582v65.5h1v-65.5zM398 514.5v15.5h1v-15.5zM399 542v40h1v-40zM399 514.5v15.5h1v-15.5zM400 542v27h1v-27zM400 514.5v15.5h1v-15.5zM401 514.5v67.5h1v-67.5zM402 569v95h1v-95zM402 514.5v15.5h1v-15.5zM403 569v95h1v-95zM403 542v11h1v-11zM403 514.5v15.5h1v-15.5zM404 514.5v133h1v-133zM405 514.5v133h1v-133zM406 582v65.5h1v-65.5zM406 553v16h1v-16zM406 514.5v27.5h1v-27.5zM407 582v65.5h1v-65.5zM407 553v16h1v-16zM407 514.5v27.5h1v-27.5zM408 582v65.5h1v-65.5zM408 553v16h1v-16zM408 514.5v27.5h1v-27.5zM409 514.5v54.5h1v-54.5zM410 542v40h1v-40zM410 514.5v15.5h1v-15.5zM411 553v29h1v-29zM411 514.5v27.5h1v-27.5zM412 514.5v133h1v-133zM413 630v17.5h1v-17.5zM413 582v35.5h1v-35.5zM413 514.5v54.5h1v-54.5zM414 569v13h1v-13zM414 542v11h1v-11zM414 514.5v15.5h1v-15.5zM415 514.5v115.5h1v-115.5zM416 630v17.5h1v-17.5zM416 569v13h1v-13zM416 530v23h1v-23zM416 514.5v7.5h1v-7.5zM417 617.5v12.5h1v-12.5zM417 582v23h1v-23zM417 553v16h1v-16zM417 514.5v15.5h1v-15.5zM418 514.5v54.5h1v-54.5zM419 514.5v67.5h1v-67.5zM420 514.5v67.5h1v-67.5zM421 553v64.5h1v-64.5zM421 514.5v15.5h1v-15.5zM422 569v95h1v-95zM422 514.5v15.5h1v-15.5zM423 553v16h1v-16zM423 522v20h1v-20zM424 582v65.5h1v-65.5zM424 514.5v38.5h1v-38.5zM425 569v61h1v-61zM425 514.5v38.5h1v-38.5zM426 569v61h1v-61zM426 514.5v38.5h1v-38.5zM427 569v78.5h1v-78.5zM427 542v11h1v-11zM427 514.5v15.5h1v-15.5zM428 542v40h1v-40zM428 514.5v15.5h1v-15.5zM429 542v40h1v-40zM429 514.5v15.5h1v-15.5zM430 569v13h1v-13zM430 530v23h1v-23zM430 514.5v7.5h1v-7.5zM431 569v13h1v-13zM431 530v23h1v-23zM431 514.5v7.5h1v-7.5zM432 630v17.5h1v-17.5zM432 514.5v103h1v-103zM433 569v48.5h1v-48.5zM433 542v11h1v-11zM433 514.5v15.5h1v-15.5zM434 569v48.5h1v-48.5zM434 542v11h1v-11zM434 514.5v15.5h1v-15.5zM435 582v35.5h1v-35.5zM435 542v11h1v-11zM435 514.5v15.5h1v-15.5zM436 582v48h1v-48zM436 553v16h1v-16zM436 530v12h1v-12zM436 514.5v7.5h1v-7.5zM437 553v77h1v-77zM437 530v12h1v-12zM437 514.5v7.5h1v-7.5zM438 582v23h1v-23zM438 514.5v27.5h1v-27.5zM439 514.5v149.5h1v-149.5zM440 514.5v149.5h1v-149.5zM441 514.5v133h1v-133zM442 514.5v54.5h1v-54.5zM443 582v65.5h1v-65.5zM443 514.5v54.5h1v-54.5zM444 582v23h1v-23zM444 553v16h1v-16zM444 514.5v27.5h1v-27.5zM445 617.5v12.5h1v-12.5zM445 514.5v90.5h1v-90.5zM446 617.5v12.5h1v-12.5zM446 514.5v90.5h1v-90.5zM447 617.5v12.5h1v-12.5zM447 553v52h1v-52zM447 514.5v27.5h1v-27.5zM448 569v61h1v-61zM448 514.5v15.5h1v-15.5zM449 514.5v149.5h1v-149.5zM450 514.5v67.5h1v-67.5zM451 569v13h1v-13zM451 530v23h1v-23zM451 514.5v7.5h1v-7.5zM452 569v13h1v-13zM452 514.5v38.5h1v-38.5zM453 514.5v54.5h1v-54.5zM454 582v48h1v-48zM454 542v11h1v-11zM454 514.5v15.5h1v-15.5zM455 582v35.5h1v-35.5zM455 553v16h1v-16zM455 514.5v27.5h1v-27.5zM456 582v35.5h1v-35.5zM456 553v16h1v-16zM456 514.5v27.5h1v-27.5zM457 582v35.5h1v-35.5zM457 514.5v54.5h1v-54.5zM458 542v40h1v-40zM458 514.5v15.5h1v-15.5zM459 542v27h1v-27zM459 514.5v15.5h1v-15.5zM460 553v94.5h1v-94.5zM460 514.5v27.5h1v-27.5zM461 553v29h1v-29zM461 514.5v27.5h1v-27.5zM462 605v25h1v-25zM462 542v40h1v-40zM462 514.5v15.5h1v-15.5zM463 542v122h1v-122zM463 514.5v15.5h1v-15.5zM464 617.5v12.5h1v-12.5zM464 553v16h1v-16zM464 514.5v27.5h1v-27.5zM465 617.5v12.5h1v-12.5zM465 553v16h1v-16zM465 514.5v27.5h1v-27.5zM466 569v36h1v-36zM466 514.5v27.5h1v-27.5zM467 569v36h1v-36zM467 514.5v38.5h1v-38.5zM468 553v29h1v-29zM468 514.5v15.5h1v-15.5zM469 553v29h1v-29zM469 514.5v15.5h1v-15.5zM470 514.5v54.5h1v-54.5zM471 514.5v103h1v-103zM472 569v48.5h1v-48.5zM472 514.5v38.5h1v-38.5zM473 605v12.5h1v-12.5zM473 514.5v67.5h1v-67.5zM474 514.5v133h1v-133zM475 514.5v54.5h1v-54.5zM476 514.5v115.5h1v-115.5zM477 514.5v115.5h1v-115.5zM478 569v13h1v-13zM478 542v11h1v-11zM478 514.5v15.5h1v-15.5zM479 514.5v67.5h1v-67.5zM480 542v122h1v-122zM480 514.5v15.5h1v-15.5zM481 630v17.5h1v-17.5zM481 569v48.5h1v-48.5zM481 514.5v38.5h1v-38.5zM482 514.5v67.5h1v-67.5zM483 514.5v115.5h1v-115.5zM484 553v29h1v-29zM484 514.5v27.5h1v-27.5zM485 514.5v27.5h1v-27.5zM486 514.5v67.5h1v-67.5zM487 542v11h1v-11zM487 514.5v15.5h1v-15.5zM488 514.5v67.5h1v-67.5zM489 605v12.5h1v-12.5zM489 514.5v67.5h1v-67.5zM490 605v12.5h1v-12.5zM490 514.5v67.5h1v-67.5zM491 542v63h1v-63zM491 514.5v15.5h1v-15.5zM492 582v65.5h1v-65.5zM492 514.5v54.5h1v-54.5zM493 542v40h1v-40zM493 514.5v15.5h1v-15.5zM494 582v82h1v-82zM494 542v27h1v-27zM494 514.5v15.5h1v-15.5zM495 569v61h1v-61zM495 514.5v7.5h1v-7.5zM496 569v61h1v-61zM496 514.5v7.5h1v-7.5zM497 553v77h1v-77zM497 514.5v27.5h1v-27.5zM498 530v52h1v-52zM498 514.5v7.5h1v-7.5zM499 542v75.5h1v-75.5zM499 514.5v7.5h1v-7.5zM500 542v75.5h1v-75.5zM500 514.5v7.5h1v-7.5zM501 542v75.5h1v-75.5zM501 514.5v7.5h1v-7.5zM502 514.5v38.5h1v-38.5zM503 514.5v38.5h1v-38.5zM504 514.5v67.5h1v-67.5zM505 542v40h1v-40zM505 514.5v15.5h1v-15.5zM506 569v48.5h1v-48.5zM506 522v20h1v-20zM507 553v29h1v-29zM507 514.5v27.5h1v-27.5zM508 569v13h1v-13zM508 514.5v38.5h1v-38.5zM509 514.5v90.5h1v-90.5zM510 605v12.5h1v-12.5zM510 569v13h1v-13zM510 514.5v27.5h1v-27.5zM511 542v11h1v-11zM511 514.5v15.5h1v-15.5zM512 553v29h1v-29zM512 514.5v27.5h1v-27.5zM513 514.5v67.5h1v-67.5zM514 514.5v67.5h1v-67.5zM515 514.5v103h1v-103zM516 582v48h1v-48zM516 542v27h1v-27zM516 514.5v15.5h1v-15.5zM517 569v61h1v-61zM517 514.5v38.5h1v-38.5zM518 582v48h1v-48zM518 514.5v54.5h1v-54.5zM519 569v95h1v-95zM519 514.5v38.5h1v-38.5zM520 514.5v149.5h1v-149.5zM521 514.5v115.5h1v-115.5zM522 605v12.5h1v-12.5zM522 569v13h1v-13zM522 514.5v38.5h1v-38.5zM523 553v16h1v-16zM523 514.5v27.5h1v-27.5zM524 630v17.5h1v-17.5zM524 542v75.5h1v-75.5zM524 514.5v15.5h1v-15.5zM525 542v105.5h1v-105.5zM525 514.5v15.5h1v-15.5zM526 542v40h1v-40zM526 514.5v15.5h1v-15.5zM527 569v48.5h1v-48.5zM527 514.5v38.5h1v-38.5zM528 514.5v133h1v-133zM529 514.5v67.5h1v-67.5zM530 514.5v115.5h1v-115.5zM531 514.5v103h1v-103zM532 569v48.5h1v-48.5zM532 514.5v15.5h1v-15.5zM533 553v64.5h1v-64.5zM533 514.5v15.5h1v-15.5zM534 514.5v54.5h1v-54.5zM535 569v78.5h1v-78.5zM535 542v11h1v-11zM535 514.5v15.5h1v-15.5zM536 542v105.5h1v-105.5zM536 514.5v15.5h1v-15.5zM537 553v29h1v-29zM537 514.5v15.5h1v-15.5zM538 553v94.5h1v-94.5zM538 514.5v27.5h1v-27.5zM539 582v65.5h1v-65.5zM539 542v27h1v-27zM539 514.5v15.5h1v-15.5zM540 569v61h1v-61zM540 514.5v38.5h1v-38.5zM541 514.5v38.5h1v-38.5zM542 514.5v27.5h1v-27.5zM543 569v61h1v-61zM543 514.5v38.5h1v-38.5zM544 630v17.5h1v-17.5zM544 569v48.5h1v-48.5zM544 514.5v38.5h1v-38.5zM545 514.5v133h1v-133zM546 617.5v12.5h1v-12.5zM546 569v13h1v-13zM546 514.5v38.5h1v-38.5zM547 617.5v12.5h1v-12.5zM547 569v13h1v-13zM547 542v11h1v-11zM547 514.5v15.5h1v-15.5zM548 630v17.5h1v-17.5zM548 569v36h1v-36zM548 514.5v38.5h1v-38.5zM549 569v13h1v-13zM549 514.5v38.5h1v-38.5zM550 569v95h1v-95zM550 514.5v38.5h1v-38.5zM551 582v48h1v-48zM551 514.5v38.5h1v-38.5zM552 569v13h1v-13zM552 514.5v38.5h1v-38.5zM553 605v42.5h1v-42.5zM553 514.5v67.5h1v-67.5zM554 605v42.5h1v-42.5zM554 514.5v67.5h1v-67.5zM555 569v13h1v-13zM555 514.5v38.5h1v-38.5zM556 553v111h1v-111zM556 514.5v15.5h1v-15.5zM557 542v40h1v-40zM557 514.5v7.5h1v-7.5zM558 514.5v133h1v-133zM559 514.5v133h1v-133zM560 514.5v133h1v-133zM561 514.5v133h1v-133zM562 542v40h1v-40zM562 514.5v15.5h1v-15.5zM563 514.5v67.5h1v-67.5zM564 514.5v133h1v-133zM565 569v61h1v-61zM565 542v11h1v-11zM565 514.5v15.5h1v-15.5zM566 542v63h1v-63zM566 514.5v15.5h1v-15.5zM567 582v82h1v-82zM567 514.5v54.5h1v-54.5zM568 569v78.5h1v-78.5zM568 514.5v27.5h1v-27.5zM569 542v122h1v-122zM569 514.5v15.5h1v-15.5zM570 582v35.5h1v-35.5zM570 514.5v27.5h1v-27.5zM571 514.5v54.5h1v-54.5zM572 542v88h1v-88zM572 514.5v15.5h1v-15.5zM573 553v16h1v-16zM573 514.5v27.5h1v-27.5zM574 569v95h1v-95zM574 514.5v38.5h1v-38.5zM575 514.5v67.5h1v-67.5zM576 514.5v67.5h1v-67.5zM577 553v94.5h1v-94.5zM577 514.5v27.5h1v-27.5zM578 647.5v16.5h1v-16.5zM578 569v61h1v-61zM578 542v11h1v-11zM578 514.5v15.5h1v-15.5zM579 647.5v16.5h1v-16.5zM579 569v61h1v-61zM579 542v11h1v-11zM579 514.5v15.5h1v-15.5zM580 647.5v16.5h1v-16.5zM580 569v61h1v-61zM580 542v11h1v-11zM580 514.5v15.5h1v-15.5zM581 569v78.5h1v-78.5zM581 542v11h1v-11zM581 514.5v15.5h1v-15.5zM582 542v11h1v-11zM582 514.5v15.5h1v-15.5zM583 582v23h1v-23zM583 542v27h1v-27zM583 514.5v15.5h1v-15.5zM584 582v48h1v-48zM584 542v27h1v-27zM584 514.5v15.5h1v-15.5zM585 514.5v54.5h1v-54.5zM586 553v64.5h1v-64.5zM586 514.5v27.5h1v-27.5zM587 514.5v115.5h1v-115.5zM588 582v48h1v-48zM588 553v16h1v-16zM588 514.5v27.5h1v-27.5zM589 569v48.5h1v-48.5zM589 542v11h1v-11zM589 514.5v15.5h1v-15.5zM590 569v48.5h1v-48.5zM590 542v11h1v-11zM590 514.5v15.5h1v-15.5zM591 569v13h1v-13zM591 542v11h1v-11zM591 514.5v15.5h1v-15.5zM592 542v105.5h1v-105.5zM592 514.5v15.5h1v-15.5zM593 514.5v67.5h1v-67.5zM594 569v13h1v-13zM594 514.5v38.5h1v-38.5zM595 582v23h1v-23zM595 514.5v54.5h1v-54.5zM596 569v13h1v-13zM596 514.5v15.5h1v-15.5zM597 542v63h1v-63zM597 514.5v15.5h1v-15.5zM598 569v36h1v-36zM598 514.5v15.5h1v-15.5zM599 553v29h1v-29zM599 514.5v27.5h1v-27.5zM600 569v61h1v-61zM600 514.5v27.5h1v-27.5zM601 553v94.5h1v-94.5zM601 514.5v27.5h1v-27.5zM602 569v13h1v-13zM602 514.5v38.5h1v-38.5zM603 530v100h1v-100zM604 553v29h1v-29zM604 522v20h1v-20zM605 553v29h1v-29zM605 522v20h1v-20zM606 553v29h1v-29zM606 514.5v15.5h1v-15.5zM607 553v29h1v-29zM607 514.5v15.5h1v-15.5zM608 569v13h1v-13zM608 542v11h1v-11zM608 514.5v15.5h1v-15.5zM609 569v61h1v-61zM609 542v11h1v-11zM609 514.5v15.5h1v-15.5zM610 569v13h1v-13zM610 514.5v38.5h1v-38.5zM611 542v40h1v-40zM611 514.5v15.5h1v-15.5zM612 553v77h1v-77zM612 514.5v27.5h1v-27.5zM613 542v27h1v-27zM613 514.5v15.5h1v-15.5zM614 542v27h1v-27zM614 514.5v15.5h1v-15.5zM615 530v117.5h1v-117.5zM615 514.5v7.5h1v-7.5zM616 569v48.5h1v-48.5zM616 514.5v38.5h1v-38.5zM617 630v17.5h1v-17.5zM617 569v48.5h1v-48.5zM617 542v11h1v-11zM617 514.5v15.5h1v-15.5zM618 542v105.5h1v-105.5zM618 514.5v15.5h1v-15.5zM619 569v13h1v-13zM619 514.5v38.5h1v-38.5zM620 569v61h1v-61zM620 542v11h1v-11zM620 514.5v15.5h1v-15.5zM621 630v17.5h1v-17.5zM621 514.5v38.5h1v-38.5zM622 630v17.5h1v-17.5zM622 514.5v38.5h1v-38.5zM623 630v17.5h1v-17.5zM623 514.5v54.5h1v-54.5zM624 617.5v12.5h1v-12.5zM624 569v36h1v-36zM624 542v11h1v-11zM624 514.5v15.5h1v-15.5zM625 605v12.5h1v-12.5zM625 553v29h1v-29zM625 514.5v27.5h1v-27.5zM626 514.5v67.5h1v-67.5zM627 553v94.5h1v-94.5zM627 514.5v27.5h1v-27.5zM628 514.5v67.5h1v-67.5zM629 569v61h1v-61zM629 514.5v38.5h1v-38.5zM630 514.5v115.5h1v-115.5zM631 542v88h1v-88zM631 514.5v15.5h1v-15.5zM632 542v88h1v-88zM632 514.5v15.5h1v-15.5zM633 542v88h1v-88zM633 514.5v15.5h1v-15.5zM634 542v88h1v-88zM634 514.5v15.5h1v-15.5zM635 514.5v115.5h1v-115.5zM636 569v95h1v-95zM636 514.5v38.5h1v-38.5zM637 514.5v38.5h1v-38.5zM638 553v29h1v-29zM638 514.5v15.5h1v-15.5zM639 553v29h1v-29zM639 514.5v27.5h1v-27.5zM640 514.5v67.5h1v-67.5zM641 514.5v67.5h1v-67.5zM642 514.5v54.5h1v-54.5zM643 514.5v67.5h1v-67.5zM644 514.5v67.5h1v-67.5zM645 542v27h1v-27zM645 514.5v15.5h1v-15.5zM646 582v23h1v-23zM646 514.5v27.5h1v-27.5zM647 542v88h1v-88zM647 514.5v15.5h1v-15.5zM648 514.5v115.5h1v-115.5zM649 617.5v12.5h1v-12.5zM649 542v40h1v-40zM649 514.5v7.5h1v-7.5zM650 617.5v12.5h1v-12.5zM650 530v52h1v-52zM650 514.5v7.5h1v-7.5zM651 553v94.5h1v-94.5zM651 514.5v15.5h1v-15.5zM652 553v94.5h1v-94.5zM652 514.5v15.5h1v-15.5zM653 569v36h1v-36zM653 514.5v15.5h1v-15.5zM654 569v13h1v-13zM654 542v11h1v-11zM654 514.5v7.5h1v-7.5zM655 530v87.5h1v-87.5zM655 514.5v7.5h1v-7.5zM656 569v13h1v-13zM656 514.5v38.5h1v-38.5zM657 569v13h1v-13zM657 514.5v38.5h1v-38.5zM658 514.5v67.5h1v-67.5zM659 542v40h1v-40zM659 514.5v15.5h1v-15.5zM660 553v77h1v-77zM660 514.5v27.5h1v-27.5zM661 630v17.5h1v-17.5zM661 542v75.5h1v-75.5zM661 514.5v15.5h1v-15.5zM662 569v13h1v-13zM662 514.5v38.5h1v-38.5zM663 569v78.5h1v-78.5zM663 514.5v38.5h1v-38.5zM664 514.5v54.5h1v-54.5zM665 630v34h1v-34zM665 514.5v103h1v-103zM666 630v34h1v-34zM666 569v48.5h1v-48.5zM666 514.5v38.5h1v-38.5zM667 542v88h1v-88zM667 514.5v15.5h1v-15.5zM668 542v88h1v-88zM668 514.5v15.5h1v-15.5zM669 605v12.5h1v-12.5zM669 514.5v67.5h1v-67.5zM670 582v48h1v-48zM670 553v16h1v-16zM670 514.5v15.5h1v-15.5zM671 553v29h1v-29zM671 514.5v27.5h1v-27.5zM672 514.5v54.5h1v-54.5zM673 553v52h1v-52zM673 514.5v27.5h1v-27.5zM674 569v78.5h1v-78.5zM674 514.5v38.5h1v-38.5zM675 542v40h1v-40zM675 514.5v15.5h1v-15.5zM676 542v122h1v-122zM676 514.5v15.5h1v-15.5zM677 542v40h1v-40zM677 514.5v15.5h1v-15.5zM678 542v40h1v-40zM678 514.5v15.5h1v-15.5zM679 514.5v115.5h1v-115.5zM680 582v65.5h1v-65.5zM680 514.5v54.5h1v-54.5zM681 553v77h1v-77zM681 514.5v27.5h1v-27.5zM682 553v77h1v-77zM682 514.5v27.5h1v-27.5zM683 514.5v67.5h1v-67.5zM684 569v13h1v-13zM684 514.5v38.5h1v-38.5zM685 569v78.5h1v-78.5zM685 542v11h1v-11zM685 514.5v15.5h1v-15.5zM686 630v17.5h1v-17.5zM686 569v36h1v-36zM686 542v11h1v-11zM686 514.5v15.5h1v-15.5zM687 569v95h1v-95zM687 542v11h1v-11zM687 522v8h1v-8zM688 514.5v149.5h1v-149.5zM689 514.5v149.5h1v-149.5zM690 569v36h1v-36zM690 542v11h1v-11zM690 514.5v15.5h1v-15.5zM691 569v13h1v-13zM691 542v11h1v-11zM691 514.5v15.5h1v-15.5zM692 569v13h1v-13zM692 542v11h1v-11zM692 514.5v15.5h1v-15.5zM693 630v17.5h1v-17.5zM693 569v48.5h1v-48.5zM693 542v11h1v-11zM693 514.5v15.5h1v-15.5zM694 553v77h1v-77zM694 514.5v27.5h1v-27.5zM695 605v25h1v-25zM695 514.5v67.5h1v-67.5zM696 605v25h1v-25zM696 553v29h1v-29zM696 514.5v27.5h1v-27.5zM697 514.5v103h1v-103zM698 542v40h1v-40zM698 514.5v15.5h1v-15.5zM699 647.5v16.5h1v-16.5zM699 569v61h1v-61zM699 522v20h1v-20zM700 647.5v16.5h1v-16.5zM700 569v61h1v-61zM700 522v8h1v-8zM701 553v64.5h1v-64.5zM701 530v12h1v-12zM701 514.5v7.5h1v-7.5zM702 582v48h1v-48zM702 514.5v54.5h1v-54.5zM703 542v88h1v-88zM703 514.5v15.5h1v-15.5zM704 514.5v67.5h1v-67.5zM705 569v48.5h1v-48.5zM705 542v11h1v-11zM705 514.5v15.5h1v-15.5zM706 569v48.5h1v-48.5zM706 542v11h1v-11zM706 514.5v15.5h1v-15.5zM707 542v75.5h1v-75.5zM707 514.5v15.5h1v-15.5zM708 582v35.5h1v-35.5zM708 542v27h1v-27zM708 514.5v15.5h1v-15.5zM709 605v59h1v-59zM709 569v13h1v-13zM709 542v11h1v-11zM709 514.5v15.5h1v-15.5zM710 514.5v103h1v-103zM711 514.5v90.5h1v-90.5zM712 514.5v90.5h1v-90.5zM713 553v29h1v-29zM713 514.5v15.5h1v-15.5zM714 553v29h1v-29zM714 514.5v15.5h1v-15.5zM715 582v48h1v-48zM715 553v16h1v-16zM715 514.5v27.5h1v-27.5zM716 582v82h1v-82zM716 542v11h1v-11zM716 514.5v15.5h1v-15.5zM717 542v40h1v-40zM717 514.5v15.5h1v-15.5zM718 569v78.5h1v-78.5zM718 514.5v38.5h1v-38.5zM719 569v36h1v-36zM719 514.5v27.5h1v-27.5zM720 569v48.5h1v-48.5zM720 542v11h1v-11zM720 514.5v15.5h1v-15.5zM721 569v48.5h1v-48.5zM721 514.5v15.5h1v-15.5zM722 569v48.5h1v-48.5zM722 514.5v15.5h1v-15.5zM723 514.5v54.5h1v-54.5zM724 569v61h1v-61zM724 514.5v38.5h1v-38.5zM725 569v61h1v-61zM725 514.5v38.5h1v-38.5zM726 553v94.5h1v-94.5zM726 514.5v27.5h1v-27.5zM727 553v94.5h1v-94.5zM727 514.5v27.5h1v-27.5zM728 542v40h1v-40zM728 514.5v15.5h1v-15.5zM729 569v78.5h1v-78.5zM729 514.5v27.5h1v-27.5zM730 582v65.5h1v-65.5zM730 514.5v27.5h1v-27.5zM731 582v35.5h1v-35.5zM731 514.5v15.5h1v-15.5zM732 569v78.5h1v-78.5zM732 514.5v38.5h1v-38.5zM733 569v78.5h1v-78.5zM733 514.5v38.5h1v-38.5zM734 542v40h1v-40zM734 514.5v15.5h1v-15.5zM735 582v82h1v-82zM735 514.5v54.5h1v-54.5zM736 582v82h1v-82zM736 514.5v54.5h1v-54.5zM737 514.5v67.5h1v-67.5zM738 514.5v67.5h1v-67.5zM739 514.5v115.5h1v-115.5zM740 542v27h1v-27zM740 514.5v15.5h1v-15.5zM741 542v27h1v-27zM741 514.5v15.5h1v-15.5zM742 542v40h1v-40zM742 514.5v15.5h1v-15.5zM743 605v12.5h1v-12.5zM743 514.5v27.5h1v-27.5zM744 605v12.5h1v-12.5zM744 514.5v27.5h1v-27.5zM745 605v12.5h1v-12.5zM745 514.5v67.5h1v-67.5zM746 605v12.5h1v-12.5zM746 514.5v67.5h1v-67.5zM747 617.5v46.5h1v-46.5zM747 569v36h1v-36zM747 514.5v38.5h1v-38.5zM748 617.5v46.5h1v-46.5zM748 569v36h1v-36zM748 514.5v38.5h1v-38.5zM749 514.5v54.5h1v-54.5zM750 542v27h1v-27zM750 514.5v15.5h1v-15.5zM751 542v27h1v-27zM751 514.5v15.5h1v-15.5zM752 542v40h1v-40zM752 514.5v15.5h1v-15.5zM753 553v29h1v-29zM753 514.5v27.5h1v-27.5zM754 582v35.5h1v-35.5zM754 553v16h1v-16zM754 514.5v27.5h1v-27.5zM755 542v27h1v-27zM755 514.5v15.5h1v-15.5zM756 542v63h1v-63zM756 514.5v15.5h1v-15.5zM757 605v12.5h1v-12.5zM757 542v40h1v-40zM757 514.5v15.5h1v-15.5zM758 605v59h1v-59zM758 542v40h1v-40zM758 514.5v15.5h1v-15.5zM759 582v23h1v-23zM759 542v27h1v-27zM759 514.5v15.5h1v-15.5zM760 514.5v67.5h1v-67.5zM761 569v13h1v-13zM761 514.5v38.5h1v-38.5zM762 514.5v27.5h1v-27.5zM763 542v27h1v-27zM763 522v8h1v-8zM764 542v40h1v-40zM764 522v8h1v-8zM765 553v29h1v-29zM765 514.5v27.5h1v-27.5zM766 553v29h1v-29zM766 514.5v27.5h1v-27.5zM767 542v40h1v-40zM767 514.5v15.5h1v-15.5zM768 630v17.5h1v-17.5zM768 514.5v54.5h1v-54.5zM769 514.5v115.5h1v-115.5zM770 553v94.5h1v-94.5zM770 514.5v15.5h1v-15.5zM771 553v94.5h1v-94.5zM771 514.5v15.5h1v-15.5zM772 569v13h1v-13zM772 514.5v38.5h1v-38.5zM773 569v13h1v-13zM773 514.5v38.5h1v-38.5zM774 569v36h1v-36zM774 514.5v38.5h1v-38.5zM775 569v36h1v-36zM775 514.5v38.5h1v-38.5zM776 617.5v30h1v-30zM776 569v36h1v-36zM776 514.5v38.5h1v-38.5zM777 542v75.5h1v-75.5zM777 514.5v15.5h1v-15.5zM778 582v65.5h1v-65.5zM778 553v16h1v-16zM778 514.5v15.5h1v-15.5zM779 617.5v12.5h1v-12.5zM779 514.5v90.5h1v-90.5zM780 553v94.5h1v-94.5zM780 514.5v27.5h1v-27.5zM781 553v94.5h1v-94.5zM781 514.5v27.5h1v-27.5zM782 569v13h1v-13zM782 514.5v38.5h1v-38.5zM783 542v105.5h1v-105.5zM783 514.5v15.5h1v-15.5zM784 569v36h1v-36zM784 542v11h1v-11zM784 514.5v15.5h1v-15.5zM785 605v42.5h1v-42.5zM785 514.5v67.5h1v-67.5zM786 605v42.5h1v-42.5zM786 514.5v67.5h1v-67.5zM787 569v78.5h1v-78.5zM787 514.5v15.5h1v-15.5zM788 569v13h1v-13zM788 530v23h1v-23zM788 514.5v7.5h1v-7.5zM789 582v23h1v-23zM789 514.5v38.5h1v-38.5zM790 569v78.5h1v-78.5zM790 514.5v38.5h1v-38.5zM791 569v78.5h1v-78.5zM791 514.5v38.5h1v-38.5zM792 542v75.5h1v-75.5zM792 514.5v15.5h1v-15.5zM793 569v61h1v-61zM793 514.5v38.5h1v-38.5zM794 553v94.5h1v-94.5zM794 514.5v15.5h1v-15.5zM795 582v35.5h1v-35.5zM795 514.5v54.5h1v-54.5zM796 582v35.5h1v-35.5zM796 542v27h1v-27zM796 514.5v15.5h1v-15.5zM797 569v61h1v-61zM797 514.5v38.5h1v-38.5zM798 553v111h1v-111zM798 514.5v15.5h1v-15.5zM799 553v111h1v-111zM799 514.5v15.5h1v-15.5zM800 542v122h1v-122zM800 514.5v15.5h1v-15.5zM801 542v122h1v-122zM801 514.5v15.5h1v-15.5zM802 542v40h1v-40zM802 514.5v15.5h1v-15.5zM803 542v40h1v-40zM803 514.5v15.5h1v-15.5zM804 542v40h1v-40zM804 514.5v15.5h1v-15.5zM805 514.5v149.5h1v-149.5zM806 514.5v149.5h1v-149.5zM807 582v48h1v-48zM807 514.5v54.5h1v-54.5zM808 514.5v103h1v-103zM809 514.5v103h1v-103zM810 514.5v103h1v-103zM811 514.5v90.5h1v-90.5zM812 569v48.5h1v-48.5zM812 514.5v27.5h1v-27.5zM813 569v48.5h1v-48.5zM813 514.5v27.5h1v-27.5zM814 569v48.5h1v-48.5zM814 514.5v38.5h1v-38.5zM815 617.5v30h1v-30zM815 542v63h1v-63zM815 514.5v15.5h1v-15.5zM816 617.5v30h1v-30zM816 542v63h1v-63zM816 514.5v15.5h1v-15.5zM817 617.5v30h1v-30zM817 514.5v90.5h1v-90.5zM818 617.5v30h1v-30zM818 514.5v90.5h1v-90.5zM819 630v17.5h1v-17.5zM819 514.5v38.5h1v-38.5zM820 630v17.5h1v-17.5zM820 514.5v38.5h1v-38.5zM821 569v13h1v-13zM821 542v11h1v-11zM821 514.5v15.5h1v-15.5zM822 569v78.5h1v-78.5zM822 542v11h1v-11zM822 514.5v15.5h1v-15.5zM823 569v78.5h1v-78.5zM823 542v11h1v-11zM823 514.5v15.5h1v-15.5zM824 569v78.5h1v-78.5zM824 542v11h1v-11zM824 514.5v15.5h1v-15.5zM825 553v64.5h1v-64.5zM825 514.5v15.5h1v-15.5zM826 514.5v54.5h1v-54.5zM827 542v27h1v-27zM827 514.5v15.5h1v-15.5zM828 617.5v12.5h1v-12.5zM828 514.5v54.5h1v-54.5zM829 514.5v67.5h1v-67.5zM830 569v13h1v-13zM830 514.5v38.5h1v-38.5zM831 514.5v133h1v-133zM832 569v48.5h1v-48.5zM832 514.5v27.5h1v-27.5zM833 542v11h1v-11zM833 514.5v15.5h1v-15.5zM834 569v78.5h1v-78.5zM834 542v11h1v-11zM834 514.5v15.5h1v-15.5zM835 605v42.5h1v-42.5zM835 553v29h1v-29zM835 514.5v27.5h1v-27.5zM836 582v48h1v-48zM836 514.5v27.5h1v-27.5zM837 569v36h1v-36zM837 542v11h1v-11zM837 514.5v15.5h1v-15.5zM838 514.5v133h1v-133zM839 569v95h1v-95zM839 514.5v38.5h1v-38.5zM840 553v94.5h1v-94.5zM840 514.5v27.5h1v-27.5zM841 542v27h1v-27zM841 514.5v15.5h1v-15.5zM842 605v71h1v-71zM842 542v40h1v-40zM842 514.5v15.5h1v-15.5zM843 605v71h1v-71zM843 542v40h1v-40zM843 514.5v15.5h1v-15.5zM844 569v48.5h1v-48.5zM844 542v11h1v-11zM844 514.5v15.5h1v-15.5zM845 630v34h1v-34zM845 553v64.5h1v-64.5zM845 514.5v27.5h1v-27.5zM846 569v95h1v-95zM846 522v8h1v-8zM847 553v94.5h1v-94.5zM847 530v12h1v-12zM847 514.5v7.5h1v-7.5zM848 569v78.5h1v-78.5zM848 514.5v38.5h1v-38.5zM849 553v16h1v-16zM849 514.5v27.5h1v-27.5zM850 514.5v90.5h1v-90.5zM851 569v36h1v-36zM851 514.5v27.5h1v-27.5zM852 514.5v67.5h1v-67.5zM853 582v23h1v-23zM853 553v16h1v-16zM853 514.5v27.5h1v-27.5zM854 514.5v133h1v-133zM855 553v94.5h1v-94.5zM855 514.5v27.5h1v-27.5zM856 553v94.5h1v-94.5zM856 514.5v27.5h1v-27.5zM857 514.5v115.5h1v-115.5zM858 514.5v103h1v-103zM859 514.5v103h1v-103zM860 514.5v103h1v-103zM861 553v16h1v-16zM861 514.5v27.5h1v-27.5zM862 569v13h1v-13zM862 514.5v38.5h1v-38.5zM863 569v13h1v-13zM863 514.5v38.5h1v-38.5zM864 582v65.5h1v-65.5zM864 514.5v54.5h1v-54.5zM865 542v105.5h1v-105.5zM865 514.5v15.5h1v-15.5zM866 542v105.5h1v-105.5zM866 514.5v15.5h1v-15.5zM867 542v105.5h1v-105.5zM867 514.5v15.5h1v-15.5zM868 542v105.5h1v-105.5zM868 514.5v15.5h1v-15.5zM869 542v105.5h1v-105.5zM869 514.5v15.5h1v-15.5zM870 569v13h1v-13zM870 514.5v38.5h1v-38.5zM871 605v12.5h1v-12.5zM871 542v40h1v-40zM871 514.5v15.5h1v-15.5zM872 605v12.5h1v-12.5zM872 542v40h1v-40zM872 514.5v15.5h1v-15.5zM873 569v13h1v-13zM873 514.5v38.5h1v-38.5zM874 514.5v67.5h1v-67.5zM875 569v13h1v-13zM875 514.5v38.5h1v-38.5zM876 569v13h1v-13zM876 514.5v38.5h1v-38.5zM877 514.5v54.5h1v-54.5zM878 542v88h1v-88zM878 514.5v15.5h1v-15.5zM879 569v13h1v-13zM879 514.5v38.5h1v-38.5zM880 569v13h1v-13zM880 514.5v38.5h1v-38.5zM881 569v13h1v-13zM881 514.5v38.5h1v-38.5zM882 569v13h1v-13zM882 514.5v38.5h1v-38.5zM883 582v23h1v-23zM883 553v16h1v-16zM883 514.5v15.5h1v-15.5zM884 569v13h1v-13zM884 514.5v38.5h1v-38.5zM885 553v77h1v-77zM885 514.5v15.5h1v-15.5zM886 582v35.5h1v-35.5zM886 553v16h1v-16zM886 514.5v27.5h1v-27.5zM887 542v75.5h1v-75.5zM887 522v8h1v-8zM888 542v75.5h1v-75.5zM888 522v8h1v-8zM889 569v48.5h1v-48.5zM889 514.5v38.5h1v-38.5zM890 569v48.5h1v-48.5zM890 514.5v38.5h1v-38.5zM891 553v29h1v-29zM891 514.5v27.5h1v-27.5zM892 514.5v103h1v-103zM893 569v48.5h1v-48.5zM893 514.5v27.5h1v-27.5zM894 582v65.5h1v-65.5zM894 514.5v54.5h1v-54.5zM895 542v122h1v-122zM895 514.5v15.5h1v-15.5zM896 553v77h1v-77zM896 514.5v15.5h1v-15.5zM897 542v40h1v-40zM897 514.5v15.5h1v-15.5zM898 514.5v67.5h1v-67.5zM899 530v87.5h1v-87.5zM899 514.5v7.5h1v-7.5zM900 530v87.5h1v-87.5zM900 514.5v7.5h1v-7.5zM901 569v78.5h1v-78.5zM901 542v11h1v-11zM901 514.5v15.5h1v-15.5zM902 542v105.5h1v-105.5zM902 514.5v15.5h1v-15.5zM903 514.5v67.5h1v-67.5zM904 569v61h1v-61zM904 542v11h1v-11zM904 514.5v15.5h1v-15.5zM905 514.5v149.5h1v-149.5zM906 569v78.5h1v-78.5zM906 514.5v38.5h1v-38.5zM907 569v13h1v-13zM907 514.5v38.5h1v-38.5zM908 530v100h1v-100zM908 514.5v7.5h1v-7.5zM909 553v29h1v-29zM909 514.5v15.5h1v-15.5zM910 514.5v38.5h1v-38.5zM911 514.5v38.5h1v-38.5zM912 542v63h1v-63zM912 514.5v15.5h1v-15.5zM913 542v63h1v-63zM913 514.5v15.5h1v-15.5zM914 522v83h1v-83zM915 514.5v103h1v-103zM916 569v13h1v-13zM916 514.5v38.5h1v-38.5zM917 569v13h1v-13zM917 542v11h1v-11zM917 514.5v15.5h1v-15.5zM918 605v12.5h1v-12.5zM918 542v40h1v-40zM918 514.5v15.5h1v-15.5zM919 605v12.5h1v-12.5zM919 542v40h1v-40zM919 514.5v15.5h1v-15.5zM920 605v12.5h1v-12.5zM920 542v40h1v-40zM920 514.5v15.5h1v-15.5zM921 542v75.5h1v-75.5zM921 514.5v15.5h1v-15.5zM922 542v75.5h1v-75.5zM922 514.5v15.5h1v-15.5zM923 553v29h1v-29zM923 514.5v27.5h1v-27.5zM924 514.5v54.5h1v-54.5zM925 569v48.5h1v-48.5zM925 514.5v38.5h1v-38.5zM926 630v17.5h1v-17.5zM926 553v64.5h1v-64.5zM926 514.5v15.5h1v-15.5zM927 630v17.5h1v-17.5zM927 542v75.5h1v-75.5zM927 514.5v15.5h1v-15.5zM928 514.5v67.5h1v-67.5zM929 647.5v16.5h1v-16.5zM929 569v61h1v-61zM929 542v11h1v-11zM929 514.5v15.5h1v-15.5zM930 569v13h1v-13zM930 514.5v38.5h1v-38.5zM931 542v105.5h1v-105.5zM931 514.5v15.5h1v-15.5zM932 569v78.5h1v-78.5zM932 514.5v15.5h1v-15.5zM933 569v78.5h1v-78.5zM933 514.5v15.5h1v-15.5zM934 569v78.5h1v-78.5zM934 514.5v15.5h1v-15.5zM935 569v95h1v-95zM935 514.5v38.5h1v-38.5zM936 514.5v90.5h1v-90.5zM937 569v78.5h1v-78.5zM937 542v11h1v-11zM937 514.5v15.5h1v-15.5zM938 569v13h1v-13zM938 514.5v27.5h1v-27.5zM939 569v13h1v-13zM939 514.5v38.5h1v-38.5zM940 569v13h1v-13zM940 514.5v38.5h1v-38.5zM941 514.5v67.5h1v-67.5zM942 514.5v67.5h1v-67.5zM943 514.5v67.5h1v-67.5zM944 514.5v67.5h1v-67.5zM945 569v48.5h1v-48.5zM945 514.5v27.5h1v-27.5zM946 542v11h1v-11zM946 514.5v15.5h1v-15.5zM947 542v105.5h1v-105.5zM947 514.5v15.5h1v-15.5zM948 542v105.5h1v-105.5zM948 514.5v15.5h1v-15.5zM949 569v78.5h1v-78.5zM949 514.5v27.5h1v-27.5zM950 569v78.5h1v-78.5zM950 514.5v27.5h1v-27.5zM951 569v78.5h1v-78.5zM951 514.5v27.5h1v-27.5zM952 569v13h1v-13zM952 542v11h1v-11zM952 514.5v15.5h1v-15.5zM953 542v105.5h1v-105.5zM953 514.5v15.5h1v-15.5zM954 542v75.5h1v-75.5zM954 514.5v15.5h1v-15.5zM955 553v29h1v-29zM955 514.5v27.5h1v-27.5zM956 514.5v67.5h1v-67.5zM957 514.5v115.5h1v-115.5zM958 553v94.5h1v-94.5zM958 514.5v27.5h1v-27.5zM959 569v36h1v-36zM959 514.5v27.5h1v-27.5zM960 569v36h1v-36zM960 514.5v27.5h1v-27.5zM961 542v27h1v-27zM961 514.5v15.5h1v-15.5zM962 542v27h1v-27zM962 514.5v15.5h1v-15.5zM963 605v25h1v-25zM963 514.5v67.5h1v-67.5zM964 514.5v133h1v-133zM965 514.5v133h1v-133zM966 514.5v54.5h1v-54.5zM967 553v29h1v-29zM967 514.5v27.5h1v-27.5zM968 569v13h1v-13zM968 514.5v38.5h1v-38.5zM969 569v13h1v-13zM969 514.5v38.5h1v-38.5zM970 542v40h1v-40zM970 514.5v15.5h1v-15.5zM971 514.5v38.5h1v-38.5zM972 569v78.5h1v-78.5zM972 514.5v38.5h1v-38.5zM973 514.5v54.5h1v-54.5zM974 582v35.5h1v-35.5zM974 514.5v54.5h1v-54.5zM975 582v35.5h1v-35.5zM975 514.5v54.5h1v-54.5zM976 514.5v133h1v-133zM977 530v87.5h1v-87.5zM977 514.5v7.5h1v-7.5zM978 569v13h1v-13zM978 542v11h1v-11zM978 514.5v15.5h1v-15.5zM979 569v13h1v-13zM979 514.5v38.5h1v-38.5zM980 553v29h1v-29zM980 514.5v15.5h1v-15.5zM981 605v42.5h1v-42.5zM981 542v40h1v-40zM981 514.5v15.5h1v-15.5zM982 605v42.5h1v-42.5zM982 542v27h1v-27zM982 514.5v15.5h1v-15.5zM983 605v25h1v-25zM983 553v29h1v-29zM983 514.5v27.5h1v-27.5zM984 569v13h1v-13zM984 542v11h1v-11zM984 514.5v15.5h1v-15.5zM985 569v13h1v-13zM985 542v11h1v-11zM985 514.5v15.5h1v-15.5zM986 569v13h1v-13zM986 542v11h1v-11zM986 514.5v15.5h1v-15.5zM987 530v117.5h1v-117.5zM987 514.5v7.5h1v-7.5zM988 514.5v133h1v-133zM989 514.5v54.5h1v-54.5zM990 605v12.5h1v-12.5zM990 569v13h1v-13zM990 514.5v15.5h1v-15.5zM991 542v105.5h1v-105.5zM991 514.5v15.5h1v-15.5zM992 553v29h1v-29zM992 514.5v27.5h1v-27.5zM993 569v48.5h1v-48.5zM993 514.5v38.5h1v-38.5zM994 514.5v133h1v-133zM995 514.5v133h1v-133zM996 514.5v149.5h1v-149.5zM997 553v29h1v-29zM997 514.5v15.5h1v-15.5zM998 569v61h1v-61zM998 542v11h1v-11zM998 514.5v15.5h1v-15.5zM999 522v108h1v-108zM1000 542v88h1v-88zM1000 522v8h1v-8zM1001 542v88h1v-88zM1001 522v8h1v-8zM1002 553v29h1v-29zM1002 514.5v27.5h1v-27.5zM1003 530v23h1v-23zM1003 514.5v7.5h1v-7.5zM1004 553v29h1v-29zM1004 514.5v27.5h1v-27.5zM1005 553v94.5h1v-94.5zM1005 514.5v27.5h1v-27.5zM1006 553v94.5h1v-94.5zM1006 514.5v27.5h1v-27.5zM1007 553v29h1v-29zM1007 514.5v27.5h1v-27.5zM1008 514.5v67.5h1v-67.5zM1009 617.5v12.5h1v-12.5zM1009 569v13h1v-13zM1009 514.5v38.5h1v-38.5zM1010 617.5v12.5h1v-12.5zM1010 569v13h1v-13zM1010 514.5v38.5h1v-38.5zM1011 617.5v12.5h1v-12.5zM1011 569v13h1v-13zM1011 514.5v38.5h1v-38.5zM1012 617.5v12.5h1v-12.5zM1012 514.5v67.5h1v-67.5zM1013 569v13h1v-13zM1013 514.5v27.5h1v-27.5zM1014 514.5v67.5h1v-67.5zM1015 569v78.5h1v-78.5zM1015 514.5v38.5h1v-38.5zM1016 569v13h1v-13zM1016 542v11h1v-11zM1016 514.5v15.5h1v-15.5zM1017 514.5v67.5h1v-67.5zM1018 542v40h1v-40zM1018 514.5v15.5h1v-15.5zM1019 542v40h1v-40zM1019 514.5v15.5h1v-15.5zM1020 553v94.5h1v-94.5zM1020 514.5v27.5h1v-27.5zM1021 542v40h1v-40zM1021 514.5v15.5h1v-15.5zM1022 514.5v103h1v-103zM1023 514.5v67.5h1v-67.5zM1024 514.5v149.5h1v-149.5zM1025 582v23h1v-23zM1025 514.5v54.5h1v-54.5zM1026 569v61h1v-61zM1026 514.5v38.5h1v-38.5zM1027 569v61h1v-61zM1027 514.5v38.5h1v-38.5zM1028 582v48h1v-48zM1028 514.5v38.5h1v-38.5zM1029 553v64.5h1v-64.5zM1029 514.5v27.5h1v-27.5zM1030 522v60h1v-60zM1031 569v13h1v-13zM1031 514.5v38.5h1v-38.5zM1032 553v94.5h1v-94.5zM1032 514.5v15.5h1v-15.5zM1033 542v88h1v-88zM1033 514.5v15.5h1v-15.5zM1034 542v88h1v-88zM1034 514.5v15.5h1v-15.5zM1035 617.5v12.5h1v-12.5zM1035 582v23h1v-23zM1035 514.5v38.5h1v-38.5zM1036 617.5v12.5h1v-12.5zM1036 569v36h1v-36zM1036 530v23h1v-23zM1036 514.5v7.5h1v-7.5zM1037 569v61h1v-61zM1037 514.5v27.5h1v-27.5zM1038 542v122h1v-122zM1038 514.5v15.5h1v-15.5zM1039 542v105.5h1v-105.5zM1039 514.5v15.5h1v-15.5zM1040 569v61h1v-61zM1040 514.5v38.5h1v-38.5zM1041 514.5v54.5h1v-54.5zM1042 617.5v30h1v-30zM1042 542v63h1v-63zM1042 514.5v15.5h1v-15.5zM1043 553v94.5h1v-94.5zM1043 514.5v15.5h1v-15.5zM1044 514.5v115.5h1v-115.5zM1045 514.5v27.5h1v-27.5zM1046 553v16h1v-16zM1046 514.5v27.5h1v-27.5zM1047 553v29h1v-29zM1047 514.5v27.5h1v-27.5zM1048 553v29h1v-29zM1048 514.5v27.5h1v-27.5zM1049 630v17.5h1v-17.5zM1049 514.5v54.5h1v-54.5zM1050 630v17.5h1v-17.5zM1050 514.5v54.5h1v-54.5zM1051 553v16h1v-16zM1051 514.5v15.5h1v-15.5zM1052 630v17.5h1v-17.5zM1052 514.5v67.5h1v-67.5zM1053 630v17.5h1v-17.5zM1053 514.5v67.5h1v-67.5zM1054 582v65.5h1v-65.5zM1054 514.5v38.5h1v-38.5zM1055 582v23h1v-23zM1055 514.5v38.5h1v-38.5zM1056 617.5v12.5h1v-12.5zM1056 569v13h1v-13zM1056 514.5v27.5h1v-27.5zM1057 617.5v12.5h1v-12.5zM1057 569v13h1v-13zM1057 514.5v27.5h1v-27.5zM1058 617.5v12.5h1v-12.5zM1058 569v13h1v-13zM1058 514.5v27.5h1v-27.5zM1059 514.5v38.5h1v-38.5zM1060 553v29h1v-29zM1060 514.5v27.5h1v-27.5zM1061 514.5v67.5h1v-67.5zM1062 514.5v67.5h1v-67.5zM1063 569v13h1v-13zM1063 514.5v38.5h1v-38.5zM1064 569v48.5h1v-48.5zM1064 514.5v27.5h1v-27.5zM1065 569v48.5h1v-48.5zM1065 514.5v27.5h1v-27.5zM1066 514.5v54.5h1v-54.5zM1067 514.5v67.5h1v-67.5zM1068 617.5v12.5h1v-12.5zM1068 514.5v67.5h1v-67.5zM1069 542v105.5h1v-105.5zM1069 514.5v15.5h1v-15.5zM1070 514.5v115.5h1v-115.5zM1071 514.5v133h1v-133zM1072 542v122h1v-122zM1072 514.5v15.5h1v-15.5zM1073 542v122h1v-122zM1073 514.5v15.5h1v-15.5zM1074 542v122h1v-122zM1074 514.5v15.5h1v-15.5zM1075 514.5v38.5h1v-38.5zM1076 582v65.5h1v-65.5zM1076 514.5v38.5h1v-38.5zM1077 605v59h1v-59zM1077 514.5v67.5h1v-67.5zM1078 514.5v149.5h1v-149.5zM1079 582v35.5h1v-35.5zM1079 542v11h1v-11zM1079 514.5v15.5h1v-15.5z"/>
<rect x="91" y="686" width="4" height="1" fill="#2a2a2a"/>
<rect x="91" y="679" width="4" height="1" fill="#2a2a2a"/>
<rect x="91" y="674" width="4" height="1" fill="#2a2a2a"/>
<rect x="91" y="670" width="4" height="1" fill="#2a2a2a"/>
<rect x="91" y="667" width="4" height="1" fill="#2a2a2a"/>
<rect x="91" y="664" width="4" height="1" fill="#2a2a2a"/>
<rect x="91" y="661" width="4" height="1" fill="#2a2a2a"/>
<rect x="87" y="659" width="8" height="1" fill="#2a2a2a"/>
<rect x="91" y="643" width="4" height="1" fill="#2a2a2a"/>
<rect x="91" y="633" width="4" height="1" fill="#2a2a2a"/>
<rect x="91" y="627" width="4" height="1" fill="#2a2a2a"/>
<rect x="91" y="622" width="4" height="1" fill="#2a2a2a"/>
<rect x="91" y="618" width="4" height="1" fill="#2a2a2a"/>
<rect x="91" y="614" width="4" height="1" fill="#2a2a2a"/>
<rect x="91" y="611" width="4" height="1" fill="#2a2a2a"/>
<rect x="91" y="608" width="4" height="1" fill="#2a2a2a"/>
<rect x="87" y="606" width="8" height="1" fill="#2a2a2a"/>
<rect x="91" y="590" width="4" height="1" fill="#2a2a2a"/>
<rect x="91" y="581" width="4" height="1" fill="#2a2a2a"/>
<rect x="91" y="575" width="4" height="1" fill="#2a2a2a"/>
<rect x="91" y="569" width="4" height="1" fill="#2a2a2a"/>
<rect x="91" y="565" width="4" height="1" fill="#2a2a2a"/>
<rect x="91" y="562" width="4" height="1" fill="#2a2a2a"/>
<rect x="91" y="559" width="4" height="1" fill="#2a2a2a"/>
<rect x="91" y="556" width="4" height="1" fill="#2a2a2a"/>
<rect x="87" y="554" width="8" height="1" fill="#2a2a2a"/>
<rect x="91" y="538" width="4" height="1" fill="#2a2a2a"/>
<rect x="91" y="529" width="4" height="1" fill="#2a2a2a"/>
<rect x="91" y="522" width="4" height="1" fill="#2a2a2a"/>
<rect x="91" y="517" width="4" height="1" fill="#2a2a2a"/>
<rect x="91" y="513" width="4" height="1" fill="#2a2a2a"/>
<text x="81.5" y="561.8" text-anchor="end" font-size="12">10<tspan dy="-6" font-size="11.5">4</tspan></text>
<text x="81.5" y="614.2" text-anchor="end" font-size="12">10<tspan dy="-6" font-size="11.5">3</tspan></text>
<text x="81.5" y="666.6" text-anchor="end" font-size="12">10<tspan dy="-6" font-size="11.5">2</tspan></text>
<text class="t" transform="translate(50,602) rotate(-90)" text-anchor="middle">Energy (keV)</text>
<text x="10.0" y="537.0" text-anchor="start" font-size="12"  class="t">LEMMS Ions</text>
<rect x="1092" y="515" width="12" height="176.5" fill="url(#cb)"/>
<rect x="1104" y="514" width="1" height="178" fill="#2a2a2a"/>
<rect x="1104" y="515" width="8" height="1" fill="#2a2a2a"/>
<rect x="1104" y="535" width="4" height="1" fill="#2a2a2a"/>
<rect x="1104" y="554" width="8" height="1" fill="#2a2a2a"/>
<rect x="1104" y="574" width="4" height="1" fill="#2a2a2a"/>
<rect x="1104" y="593" width="8" height="1" fill="#2a2a2a"/>
<rect x="1104" y="613" width="4" height="1" fill="#2a2a2a"/>
<rect x="1104" y="632" width="8" height="1" fill="#2a2a2a"/>
<rect x="1104" y="652" width="4" height="1" fill="#2a2a2a"/>
<rect x="1104" y="671" width="8" height="1" fill="#2a2a2a"/>
<rect x="1104" y="691" width="4" height="1" fill="#2a2a2a"/>
<text x="1117.0" y="522.6" text-anchor="start" font-size="12">10<tspan dy="-6" font-size="11.5">4</tspan></text>
<text x="1117.0" y="561.7" text-anchor="start" font-size="12">10<tspan dy="-6" font-size="11.5">2</tspan></text>
<text x="1117.0" y="600.8" text-anchor="start" font-size="12">10<tspan dy="-6" font-size="11.5">0</tspan></text>
<text x="1117.0" y="639.9" text-anchor="start" font-size="12">10<tspan dy="-6" font-size="11.5">-2</tspan></text>
<text x="1117.0" y="679.0" text-anchor="start" font-size="12">10<tspan dy="-6" font-size="11.5">-4</tspan></text>
<text class="t" transform="translate(1156,602) rotate(90)" text-anchor="middle">intensity 1/(s cm^2 ster keV)</text>
<rect x="136" y="506" width="1" height="3" fill="#2a2a2a"/>
<rect x="136" y="414" width="1" height="2" fill="#333"/>
<rect x="136" y="687" width="1" height="3" fill="#222"/>
<rect x="177" y="506" width="1" height="3" fill="#2a2a2a"/>
<rect x="177" y="414" width="1" height="2" fill="#333"/>
<rect x="177" y="687" width="1" height="3" fill="#222"/>
<rect x="218" y="505" width="1" height="4" fill="#2a2a2a"/>
<rect x="218" y="412" width="1" height="4" fill="#333"/>
<rect x="218" y="686" width="1" height="4" fill="#222"/>
<rect x="259" y="506" width="1" height="3" fill="#2a2a2a"/>
<rect x="259" y="414" width="1" height="2" fill="#333"/>
<rect x="259" y="687" width="1" height="3" fill="#222"/>
<rect x="300" y="506" width="1" height="3" fill="#2a2a2a"/>
<rect x="300" y="414" width="1" height="2" fill="#333"/>
<rect x="300" y="687" width="1" height="3" fill="#222"/>
<rect x="341" y="505" width="1" height="4" fill="#2a2a2a"/>
<rect x="341" y="412" width="1" height="4" fill="#333"/>
<rect x="341" y="686" width="1" height="4" fill="#222"/>
<rect x="382" y="506" width="1" height="3" fill="#2a2a2a"/>
<rect x="382" y="414" width="1" height="2" fill="#333"/>
<rect x="382" y="687" width="1" height="3" fill="#222"/>
<rect x="423" y="506" width="1" height="3" fill="#2a2a2a"/>
<rect x="423" y="414" width="1" height="2" fill="#333"/>
<rect x="423" y="687" width="1" height="3" fill="#222"/>
<rect x="464" y="505" width="1" height="4" fill="#2a2a2a"/>
<rect x="464" y="412" width="1" height="4" fill="#333"/>
<rect x="464" y="686" width="1" height="4" fill="#222"/>
<rect x="505" y="506" width="1" height="3" fill="#2a2a2a"/>
<rect x="505" y="414" width="1" height="2" fill="#333"/>
<rect x="505" y="687" width="1" height="3" fill="#222"/>
<rect x="546" y="506" width="1" height="3" fill="#2a2a2a"/>
<rect x="546" y="414" width="1" height="2" fill="#333"/>
<rect x="546" y="687" width="1" height="3" fill="#222"/>
<rect x="587" y="505" width="1" height="4" fill="#2a2a2a"/>
<rect x="587" y="412" width="1" height="4" fill="#333"/>
<rect x="587" y="686" width="1" height="4" fill="#222"/>
<rect x="628" y="506" width="1" height="3" fill="#2a2a2a"/>
<rect x="628" y="414" width="1" height="2" fill="#333"/>
<rect x="628" y="687" width="1" height="3" fill="#222"/>
<rect x="669" y="506" width="1" height="3" fill="#2a2a2a"/>
<rect x="669" y="414" width="1" height="2" fill="#333"/>
<rect x="669" y="687" width="1" height="3" fill="#222"/>
<rect x="710" y="505" width="1" height="4" fill="#2a2a2a"/>
<rect x="710" y="412" width="1" height="4" fill="#333"/>
<rect x="710" y="686" width="1" height="4" fill="#222"/>
<rect x="751" y="506" width="1" height="3" fill="#2a2a2a"/>
<rect x="751" y="414" width="1" height="2" fill="#333"/>
<rect x="751" y="687" width="1" height="3" fill="#222"/>
<rect x="792" y="506" width="1" height="3" fill="#2a2a2a"/>
<rect x="792" y="414" width="1" height="2" fill="#333"/>
<rect x="792" y="687" width="1" height="3" fill="#222"/>
<rect x="833" y="505" width="1" height="4" fill="#2a2a2a"/>
<rect x="833" y="412" width="1" height="4" fill="#333"/>
<rect x="833" y="686" width="1" height="4" fill="#222"/>
<rect x="874" y="506" width="1" height="3" fill="#2a2a2a"/>
<rect x="874" y="414" width="1" height="2" fill="#333"/>
<rect x="874" y="687" width="1" height="3" fill="#222"/>
<rect x="915" y="506" width="1" height="3" fill="#2a2a2a"/>
<rect x="915" y="414" width="1" height="2" fill="#333"/>
<rect x="915" y="687" width="1" height="3" fill="#222"/>
<rect x="957" y="505" width="1" height="4" fill="#2a2a2a"/>
<rect x="957" y="412" width="1" height="4" fill="#333"/>
<rect x="957" y="686" width="1" height="4" fill="#222"/>
<rect x="998" y="506" width="1" height="3" fill="#2a2a2a"/>
<rect x="998" y="414" width="1" height="2" fill="#333"/>
<rect x="998" y="687" width="1" height="3" fill="#222"/>
<rect x="1039" y="506" width="1" height="3" fill="#2a2a2a"/>
<rect x="1039" y="414" width="1" height="2" fill="#333"/>
<rect x="1039" y="687" width="1" height="3" fill="#222"/>
<rect x="95.5" y="695.5" width="985" height="15" fill="#00f400" stroke="#2a2a2a"/>
<rect x="96" y="696" width="1.5" height="14" fill="#000"/>
<rect x="358.0" y="696" width="4.5" height="14" fill="#f00000" stroke="#400" stroke-width="1"/>
<rect x="835.5" y="696" width="6.0" height="14" fill="#f00000" stroke="#400" stroke-width="1"/>
<text x="79.0" y="707.0" text-anchor="end" font-size="12"  class="t">Sunlight?</text>
<rect x="136" y="711" width="1" height="3" fill="#2a2a2a"/>
<rect x="177" y="711" width="1" height="3" fill="#2a2a2a"/>
<rect x="218" y="711" width="1" height="7" fill="#2a2a2a"/>
<rect x="259" y="711" width="1" height="3" fill="#2a2a2a"/>
<rect x="300" y="711" width="1" height="3" fill="#2a2a2a"/>
<rect x="341" y="711" width="1" height="7" fill="#2a2a2a"/>
<rect x="382" y="711" width="1" height="3" fill="#2a2a2a"/>
<rect x="423" y="711" width="1" height="3" fill="#2a2a2a"/>
<rect x="464" y="711" width="1" height="7" fill="#2a2a2a"/>
<rect x="505" y="711" width="1" height="3" fill="#2a2a2a"/>
<rect x="546" y="711" width="1" height="3" fill="#2a2a2a"/>
<rect x="587" y="711" width="1" height="7" fill="#2a2a2a"/>
<rect x="628" y="711" width="1" height="3" fill="#2a2a2a"/>
<rect x="669" y="711" width="1" height="3" fill="#2a2a2a"/>
<rect x="710" y="711" width="1" height="7" fill="#2a2a2a"/>
<rect x="751" y="711" width="1" height="3" fill="#2a2a2a"/>
<rect x="792" y="711" width="1" height="3" fill="#2a2a2a"/>
<rect x="833" y="711" width="1" height="7" fill="#2a2a2a"/>
<rect x="874" y="711" width="1" height="3" fill="#2a2a2a"/>
<rect x="915" y="711" width="1" height="3" fill="#2a2a2a"/>
<rect x="957" y="711" width="1" height="7" fill="#2a2a2a"/>
<rect x="998" y="711" width="1" height="3" fill="#2a2a2a"/>
<rect x="1039" y="711" width="1" height="3" fill="#2a2a2a"/>
<rect x="1080" y="711" width="1" height="7" fill="#2a2a2a"/>
<text x="218.6" y="733.8" text-anchor="middle" font-size="12" >03:00</text>
<text x="218.6" y="749.0" text-anchor="middle" font-size="12" >12.31</text>
<text x="218.6" y="764.0" text-anchor="middle" font-size="12" >21.53</text>
<text x="218.6" y="778.8" text-anchor="middle" font-size="12" >22.04</text>
<text x="341.7" y="733.8" text-anchor="middle" font-size="12" >06:00</text>
<text x="341.7" y="749.0" text-anchor="middle" font-size="12" >12.44</text>
<text x="341.7" y="764.0" text-anchor="middle" font-size="12" >20.81</text>
<text x="341.7" y="778.8" text-anchor="middle" font-size="12" >21.47</text>
<text x="464.9" y="733.8" text-anchor="middle" font-size="12" >09:00</text>
<text x="464.9" y="749.0" text-anchor="middle" font-size="12" >12.58</text>
<text x="464.9" y="764.0" text-anchor="middle" font-size="12" >20.09</text>
<text x="464.9" y="778.8" text-anchor="middle" font-size="12" >20.92</text>
<text x="588.0" y="733.8" text-anchor="middle" font-size="12" >12:00</text>
<text x="588.0" y="749.0" text-anchor="middle" font-size="12" >12.74</text>
<text x="588.0" y="764.0" text-anchor="middle" font-size="12" >19.35</text>
<text x="588.0" y="778.8" text-anchor="middle" font-size="12" >20.39</text>
<text x="711.1" y="733.8" text-anchor="middle" font-size="12" >15:00</text>
<text x="711.1" y="749.0" text-anchor="middle" font-size="12" >12.91</text>
<text x="711.1" y="764.0" text-anchor="middle" font-size="12" >18.61</text>
<text x="711.1" y="778.8" text-anchor="middle" font-size="12" >19.88</text>
<text x="834.2" y="733.8" text-anchor="middle" font-size="12" >18:00</text>
<text x="834.2" y="749.0" text-anchor="middle" font-size="12" >13.09</text>
<text x="834.2" y="764.0" text-anchor="middle" font-size="12" >17.86</text>
<text x="834.2" y="778.8" text-anchor="middle" font-size="12" >19.41</text>
<text x="957.3" y="733.8" text-anchor="middle" font-size="12" >21:00</text>
<text x="957.3" y="749.0" text-anchor="middle" font-size="12" >13.30</text>
<text x="957.3" y="764.0" text-anchor="middle" font-size="12" >17.11</text>
<text x="957.3" y="778.8" text-anchor="middle" font-size="12" >18.97</text>
<text x="1080.5" y="733.8" text-anchor="middle" font-size="12" >00:00</text>
<text x="1080.5" y="749.0" text-anchor="middle" font-size="12" >13.53</text>
<text x="1080.5" y="764.0" text-anchor="middle" font-size="12" >16.36</text>
<text x="1080.5" y="778.8" text-anchor="middle" font-size="12" >18.57</text>
<text x="60.0" y="749.0" text-anchor="end" font-size="12"  class="t">LT (hrs)</text>
<text x="60.0" y="764.0" text-anchor="end" font-size="12"  class="t">Rs</text>
<text x="60.0" y="778.8" text-anchor="end" font-size="12"  class="t">Dipole L</text>
<text x="1062.0" y="746.0" text-anchor="start" font-size="12" letter-spacing="0.55">2016-156</text>
<rect x="215.5" y="802.5" width="151.0" height="148.0" fill="#fff" stroke="#2a2a2a"/>
<rect x="208" y="802" width="8" height="1" fill="#2a2a2a"/>
<rect x="212" y="804" width="4" height="1" fill="#2a2a2a"/>
<rect x="212" y="806" width="4" height="1" fill="#2a2a2a"/>
<rect x="212" y="808" width="4" height="1" fill="#2a2a2a"/>
<rect x="212" y="809" width="4" height="1" fill="#2a2a2a"/>
<rect x="212" y="811" width="4" height="1" fill="#2a2a2a"/>
<rect x="212" y="813" width="4" height="1" fill="#2a2a2a"/>
<rect x="212" y="815" width="4" height="1" fill="#2a2a2a"/>
<rect x="212" y="817" width="4" height="1" fill="#2a2a2a"/>
<rect x="212" y="819" width="4" height="1" fill="#2a2a2a"/>
<rect x="208" y="821" width="8" height="1" fill="#2a2a2a"/>
<rect x="212" y="822" width="4" height="1" fill="#2a2a2a"/>
<rect x="212" y="824" width="4" height="1" fill="#2a2a2a"/>
<rect x="212" y="826" width="4" height="1" fill="#2a2a2a"/>
<rect x="212" y="828" width="4" height="1" fill="#2a2a2a"/>
<rect x="212" y="830" width="4" height="1" fill="#2a2a2a"/>
<rect x="212" y="832" width="4" height="1" fill="#2a2a2a"/>
<rect x="212" y="833" width="4" height="1" fill="#2a2a2a"/>
<rect x="212" y="835" width="4" height="1" fill="#2a2a2a"/>
<rect x="212" y="837" width="4" height="1" fill="#2a2a2a"/>
<rect x="208" y="839" width="8" height="1" fill="#2a2a2a"/>
<rect x="212" y="841" width="4" height="1" fill="#2a2a2a"/>
<rect x="212" y="843" width="4" height="1" fill="#2a2a2a"/>
<rect x="212" y="845" width="4" height="1" fill="#2a2a2a"/>
<rect x="212" y="846" width="4" height="1" fill="#2a2a2a"/>
<rect x="212" y="848" width="4" height="1" fill="#2a2a2a"/>
<rect x="212" y="850" width="4" height="1" fill="#2a2a2a"/>
<rect x="212" y="852" width="4" height="1" fill="#2a2a2a"/>
<rect x="212" y="854" width="4" height="1" fill="#2a2a2a"/>
<rect x="212" y="856" width="4" height="1" fill="#2a2a2a"/>
<rect x="208" y="858" width="8" height="1" fill="#2a2a2a"/>
<rect x="212" y="859" width="4" height="1" fill="#2a2a2a"/>
<rect x="212" y="861" width="4" height="1" fill="#2a2a2a"/>
<rect x="212" y="863" width="4" height="1" fill="#2a2a2a"/>
<rect x="212" y="865" width="4" height="1" fill="#2a2a2a"/>
<rect x="212" y="867" width="4" height="1" fill="#2a2a2a"/>
<rect x="212" y="869" width="4" height="1" fill="#2a2a2a"/>
<rect x="212" y="870" width="4" height="1" fill="#2a2a2a"/>
<rect x="212" y="872" width="4" height="1" fill="#2a2a2a"/>
<rect x="212" y="874" width="4" height="1" fill="#2a2a2a"/>
<rect x="208" y="876" width="8" height="1" fill="#2a2a2a"/>
<rect x="212" y="878" width="4" height="1" fill="#2a2a2a"/>
<rect x="212" y="880" width="4" height="1" fill="#2a2a2a"/>
<rect x="212" y="882" width="4" height="1" fill="#2a2a2a"/>
<rect x="212" y="883" width="4" height="1" fill="#2a2a2a"/>
<rect x="212" y="885" width="4" height="1" fill="#2a2a2a"/>
<rect x="212" y="887" width="4" height="1" fill="#2a2a2a"/>
<rect x="212" y="889" width="4" height="1" fill="#2a2a2a"/>
<rect x="212" y="891" width="4" height="1" fill="#2a2a2a"/>
<rect x="212" y="893" width="4" height="1" fill="#2a2a2a"/>
<rect x="208" y="895" width="8" height="1" fill="#2a2a2a"/>
<rect x="212" y="896" width="4" height="1" fill="#2a2a2a"/>
<rect x="212" y="898" width="4" height="1" fill="#2a2a2a"/>
<rect x="212" y="900" width="4" height="1" fill="#2a2a2a"/>
<rect x="212" y="902" width="4" height="1" fill="#2a2a2a"/>
<rect x="212" y="904" width="4" height="1" fill="#2a2a2a"/>
<rect x="212" y="906" width="4" height="1" fill="#2a2a2a"/>
<rect x="212" y="907" width="4" height="1" fill="#2a2a2a"/>
<rect x="212" y="909" width="4" height="1" fill="#2a2a2a"/>
<rect x="212" y="911" width="4" height="1" fill="#2a2a2a"/>
<rect x="208" y="913" width="8" height="1" fill="#2a2a2a"/>
<rect x="212" y="915" width="4" height="1" fill="#2a2a2a"/>
<rect x="212" y="917" width="4" height="1" fill="#2a2a2a"/>
<rect x="212" y="919" width="4" height="1" fill="#2a2a2a"/>
<rect x="212" y="920" width="4" height="1" fill="#2a2a2a"/>
<rect x="212" y="922" width="4" height="1" fill="#2a2a2a"/>
<rect x="212" y="924" width="4" height="1" fill="#2a2a2a"/>
<rect x="212" y="926" width="4" height="1" fill="#2a2a2a"/>
<rect x="212" y="928" width="4" height="1" fill="#2a2a2a"/>
<rect x="212" y="930" width="4" height="1" fill="#2a2a2a"/>
<rect x="208" y="932" width="8" height="1" fill="#2a2a2a"/>
<rect x="212" y="933" width="4" height="1" fill="#2a2a2a"/>
<rect x="212" y="935" width="4" height="1" fill="#2a2a2a"/>
<rect x="212" y="937" width="4" height="1" fill="#2a2a2a"/>
<rect x="212" y="939" width="4" height="1" fill="#2a2a2a"/>
<rect x="212" y="941" width="4" height="1" fill="#2a2a2a"/>
<rect x="212" y="943" width="4" height="1" fill="#2a2a2a"/>
<rect x="212" y="944" width="4" height="1" fill="#2a2a2a"/>
<rect x="212" y="946" width="4" height="1" fill="#2a2a2a"/>
<rect x="212" y="948" width="4" height="1" fill="#2a2a2a"/>
<rect x="208" y="950" width="8" height="1" fill="#2a2a2a"/>
<text x="201.5" y="807.0" text-anchor="end" font-size="12" >-40.</text>
<text x="201.5" y="825.5" text-anchor="end" font-size="12" >-30.</text>
<text x="201.5" y="844.0" text-anchor="end" font-size="12" >-20.</text>
<text x="201.5" y="862.5" text-anchor="end" font-size="12" >-10.</text>
<text x="201.5" y="881.0" text-anchor="end" font-size="12" >0.</text>
<text x="201.5" y="899.5" text-anchor="end" font-size="12" >10.</text>
<text x="201.5" y="918.0" text-anchor="end" font-size="12" >20.</text>
<text x="201.5" y="936.5" text-anchor="end" font-size="12" >30.</text>
<text x="201.5" y="955.0" text-anchor="end" font-size="12" >40.</text>
<rect x="215" y="950" width="1" height="8" fill="#2a2a2a"/>
<rect x="234" y="950" width="1" height="4" fill="#2a2a2a"/>
<rect x="253" y="950" width="1" height="8" fill="#2a2a2a"/>
<rect x="272" y="950" width="1" height="4" fill="#2a2a2a"/>
<rect x="291" y="950" width="1" height="8" fill="#2a2a2a"/>
<rect x="309" y="950" width="1" height="4" fill="#2a2a2a"/>
<rect x="328" y="950" width="1" height="8" fill="#2a2a2a"/>
<rect x="347" y="950" width="1" height="4" fill="#2a2a2a"/>
<rect x="366" y="950" width="1" height="8" fill="#2a2a2a"/>
<text x="215.5" y="975.0" text-anchor="middle" font-size="12" >40.</text>
<text x="253.2" y="975.0" text-anchor="middle" font-size="12" >20.</text>
<text x="291.0" y="975.0" text-anchor="middle" font-size="12" >0.</text>
<text x="328.8" y="975.0" text-anchor="middle" font-size="12" >-20.</text>
<text x="366.5" y="975.0" text-anchor="middle" font-size="12" >-40.</text>
<text x="291.0" y="992.0" text-anchor="middle" font-size="12"  class="t">KSM-X</text>
<text class="t" transform="translate(168.5,876.5) rotate(-90)" text-anchor="middle">KSM-Y</text>
<path fill="none" stroke="#0000ff" stroke-width="1.25" stroke-dasharray="2.2 1.2" d="M248.0 802.5C246.0 806.7 239.7 819.2 236.2 827.5C232.8 835.8 229.4 844.4 227.5 852.5C225.6 860.6 225.0 868.3 225.0 876.2C225.0 884.2 225.6 891.9 227.5 900.0C229.4 908.1 232.8 916.8 236.2 925.0C239.7 933.2 246.0 945.4 248.0 949.5"/>
<path fill="none" stroke="#6a3000" stroke-width="1.25" stroke-dasharray="2.2 1.2" d="M283.0 802.5C279.6 806.2 268.4 817.1 262.5 825.0C256.6 832.9 250.9 841.5 247.5 850.0C244.1 858.5 242.0 867.5 242.0 876.2C242.0 885.0 244.1 894.0 247.5 902.5C250.9 911.0 256.6 919.6 262.5 927.5C268.4 935.4 279.6 946.2 283.0 950.0"/>
<ellipse cx="291.2" cy="877.5" rx="34.2" ry="37.6" fill="none" stroke="#000" stroke-width="1.25"/>
<path fill="none" stroke="#000" stroke-width="1.25"  d="M226.8 843.2C228.1 846.0 231.1 854.1 235.0 860.0C238.9 865.9 244.8 873.9 250.0 878.8C255.2 883.6 260.2 886.8 266.2 889.2C272.3 891.8 280.0 893.7 286.2 893.8C292.5 893.8 299.0 892.2 303.8 889.5C308.5 886.8 312.4 881.6 315.0 877.5C317.6 873.4 318.7 869.2 319.5 865.0C320.3 860.8 319.9 854.6 320.0 852.5"/>
<ellipse cx="291.2" cy="876.8" rx="2.2" ry="1.8" fill="none" stroke="#000" stroke-width="1"/>
<line x1="250" y1="880" x2="266" y2="888.5" stroke="#0000ff" stroke-width="4" stroke-linecap="round"/>
<path d="M245.5 874.5l8.5 8.5M254 874l-9 9" stroke="#ff2020" stroke-width="1.1" fill="none"/>
<rect x="307" y="908" width="4" height="4" fill="#ff0000"/>
<rect x="509.5" y="802.5" width="151.0" height="148.0" fill="#fff" stroke="#2a2a2a"/>
<rect x="502" y="802" width="8" height="1" fill="#2a2a2a"/>
<rect x="506" y="804" width="4" height="1" fill="#2a2a2a"/>
<rect x="506" y="806" width="4" height="1" fill="#2a2a2a"/>
<rect x="506" y="808" width="4" height="1" fill="#2a2a2a"/>
<rect x="506" y="809" width="4" height="1" fill="#2a2a2a"/>
<rect x="506" y="811" width="4" height="1" fill="#2a2a2a"/>
<rect x="506" y="813" width="4" height="1" fill="#2a2a2a"/>
<rect x="506" y="815" width="4" height="1" fill="#2a2a2a"/>
<rect x="506" y="817" width="4" height="1" fill="#2a2a2a"/>
<rect x="506" y="819" width="4" height="1" fill="#2a2a2a"/>
<rect x="502" y="821" width="8" height="1" fill="#2a2a2a"/>
<rect x="506" y="822" width="4" height="1" fill="#2a2a2a"/>
<rect x="506" y="824" width="4" height="1" fill="#2a2a2a"/>
<rect x="506" y="826" width="4" height="1" fill="#2a2a2a"/>
<rect x="506" y="828" width="4" height="1" fill="#2a2a2a"/>
<rect x="506" y="830" width="4" height="1" fill="#2a2a2a"/>
<rect x="506" y="832" width="4" height="1" fill="#2a2a2a"/>
<rect x="506" y="833" width="4" height="1" fill="#2a2a2a"/>
<rect x="506" y="835" width="4" height="1" fill="#2a2a2a"/>
<rect x="506" y="837" width="4" height="1" fill="#2a2a2a"/>
<rect x="502" y="839" width="8" height="1" fill="#2a2a2a"/>
<rect x="506" y="841" width="4" height="1" fill="#2a2a2a"/>
<rect x="506" y="843" width="4" height="1" fill="#2a2a2a"/>
<rect x="506" y="845" width="4" height="1" fill="#2a2a2a"/>
<rect x="506" y="846" width="4" height="1" fill="#2a2a2a"/>
<rect x="506" y="848" width="4" height="1" fill="#2a2a2a"/>
<rect x="506" y="850" width="4" height="1" fill="#2a2a2a"/>
<rect x="506" y="852" width="4" height="1" fill="#2a2a2a"/>
<rect x="506" y="854" width="4" height="1" fill="#2a2a2a"/>
<rect x="506" y="856" width="4" height="1" fill="#2a2a2a"/>
<rect x="502" y="858" width="8" height="1" fill="#2a2a2a"/>
<rect x="506" y="859" width="4" height="1" fill="#2a2a2a"/>
<rect x="506" y="861" width="4" height="1" fill="#2a2a2a"/>
<rect x="506" y="863" width="4" height="1" fill="#2a2a2a"/>
<rect x="506" y="865" width="4" height="1" fill="#2a2a2a"/>
<rect x="506" y="867" width="4" height="1" fill="#2a2a2a"/>
<rect x="506" y="869" width="4" height="1" fill="#2a2a2a"/>
<rect x="506" y="870" width="4" height="1" fill="#2a2a2a"/>
<rect x="506" y="872" width="4" height="1" fill="#2a2a2a"/>
<rect x="506" y="874" width="4" height="1" fill="#2a2a2a"/>
<rect x="502" y="876" width="8" height="1" fill="#2a2a2a"/>
<rect x="506" y="878" width="4" height="1" fill="#2a2a2a"/>
<rect x="506" y="880" width="4" height="1" fill="#2a2a2a"/>
<rect x="506" y="882" width="4" height="1" fill="#2a2a2a"/>
<rect x="506" y="883" width="4" height="1" fill="#2a2a2a"/>
<rect x="506" y="885" width="4" height="1" fill="#2a2a2a"/>
<rect x="506" y="887" width="4" height="1" fill="#2a2a2a"/>
<rect x="506" y="889" width="4" height="1" fill="#2a2a2a"/>
<rect x="506" y="891" width="4" height="1" fill="#2a2a2a"/>
<rect x="506" y="893" width="4" height="1" fill="#2a2a2a"/>
<rect x="502" y="895" width="8" height="1" fill="#2a2a2a"/>
<rect x="506" y="896" width="4" height="1" fill="#2a2a2a"/>
<rect x="506" y="898" width="4" height="1" fill="#2a2a2a"/>
<rect x="506" y="900" width="4" height="1" fill="#2a2a2a"/>
<rect x="506" y="902" width="4" height="1" fill="#2a2a2a"/>
<rect x="506" y="904" width="4" height="1" fill="#2a2a2a"/>
<rect x="506" y="906" width="4" height="1" fill="#2a2a2a"/>
<rect x="506" y="907" width="4" height="1" fill="#2a2a2a"/>
<rect x="506" y="909" width="4" height="1" fill="#2a2a2a"/>
<rect x="506" y="911" width="4" height="1" fill="#2a2a2a"/>
<rect x="502" y="913" width="8" height="1" fill="#2a2a2a"/>
<rect x="506" y="915" width="4" height="1" fill="#2a2a2a"/>
<rect x="506" y="917" width="4" height="1" fill="#2a2a2a"/>
<rect x="506" y="919" width="4" height="1" fill="#2a2a2a"/>
<rect x="506" y="920" width="4" height="1" fill="#2a2a2a"/>
<rect x="506" y="922" width="4" height="1" fill="#2a2a2a"/>
<rect x="506" y="924" width="4" height="1" fill="#2a2a2a"/>
<rect x="506" y="926" width="4" height="1" fill="#2a2a2a"/>
<rect x="506" y="928" width="4" height="1" fill="#2a2a2a"/>
<rect x="506" y="930" width="4" height="1" fill="#2a2a2a"/>
<rect x="502" y="932" width="8" height="1" fill="#2a2a2a"/>
<rect x="506" y="933" width="4" height="1" fill="#2a2a2a"/>
<rect x="506" y="935" width="4" height="1" fill="#2a2a2a"/>
<rect x="506" y="937" width="4" height="1" fill="#2a2a2a"/>
<rect x="506" y="939" width="4" height="1" fill="#2a2a2a"/>
<rect x="506" y="941" width="4" height="1" fill="#2a2a2a"/>
<rect x="506" y="943" width="4" height="1" fill="#2a2a2a"/>
<rect x="506" y="944" width="4" height="1" fill="#2a2a2a"/>
<rect x="506" y="946" width="4" height="1" fill="#2a2a2a"/>
<rect x="506" y="948" width="4" height="1" fill="#2a2a2a"/>
<rect x="502" y="950" width="8" height="1" fill="#2a2a2a"/>
<text x="495.5" y="807.0" text-anchor="end" font-size="12" >40.</text>
<text x="495.5" y="825.5" text-anchor="end" font-size="12" >30.</text>
<text x="495.5" y="844.0" text-anchor="end" font-size="12" >20.</text>
<text x="495.5" y="862.5" text-anchor="end" font-size="12" >10.</text>
<text x="495.5" y="881.0" text-anchor="end" font-size="12" >0.</text>
<text x="495.5" y="899.5" text-anchor="end" font-size="12" >-10.</text>
<text x="495.5" y="918.0" text-anchor="end" font-size="12" >-20.</text>
<text x="495.5" y="936.5" text-anchor="end" font-size="12" >-30.</text>
<text x="495.5" y="955.0" text-anchor="end" font-size="12" >-40.</text>
<rect x="509" y="950" width="1" height="8" fill="#2a2a2a"/>
<rect x="528" y="950" width="1" height="4" fill="#2a2a2a"/>
<rect x="547" y="950" width="1" height="8" fill="#2a2a2a"/>
<rect x="566" y="950" width="1" height="4" fill="#2a2a2a"/>
<rect x="585" y="950" width="1" height="8" fill="#2a2a2a"/>
<rect x="603" y="950" width="1" height="4" fill="#2a2a2a"/>
<rect x="622" y="950" width="1" height="8" fill="#2a2a2a"/>
<rect x="641" y="950" width="1" height="4" fill="#2a2a2a"/>
<rect x="660" y="950" width="1" height="8" fill="#2a2a2a"/>
<text x="509.5" y="975.0" text-anchor="middle" font-size="12" >40.</text>
<text x="547.2" y="975.0" text-anchor="middle" font-size="12" >20.</text>
<text x="585.0" y="975.0" text-anchor="middle" font-size="12" >0.</text>
<text x="622.8" y="975.0" text-anchor="middle" font-size="12" >-20.</text>
<text x="660.5" y="975.0" text-anchor="middle" font-size="12" >-40.</text>
<text x="585.0" y="992.0" text-anchor="middle" font-size="12"  class="t">KSM-X</text>
<text class="t" transform="translate(462.5,876.5) rotate(-90)" text-anchor="middle">KSM-Z</text>
<path fill="none" stroke="#0000ff" stroke-width="1.25" stroke-dasharray="2.2 1.2" d="M542.0 802.5C540.0 806.7 533.4 819.2 530.0 827.5C526.6 835.8 523.3 844.4 521.5 852.5C519.7 860.6 519.0 868.3 519.0 876.2C519.0 884.2 519.7 891.9 521.5 900.0C523.3 908.1 526.6 916.8 530.0 925.0C533.4 933.2 540.0 945.4 542.0 949.5"/>
<path fill="none" stroke="#6a3000" stroke-width="1.25" stroke-dasharray="2.2 1.2" d="M577.5 802.5C574.1 806.2 562.9 817.1 557.0 825.0C551.1 832.9 545.5 841.5 542.0 850.0C538.5 858.5 536.2 867.5 536.2 876.2C536.2 885.0 538.5 894.0 542.0 902.5C545.5 911.0 551.2 919.7 557.0 927.5C562.8 935.3 573.7 945.8 577.0 949.5"/>
<line x1="551.2" y1="893" x2="619.5" y2="860.7" stroke="#000" stroke-width="1.6"/>
<path fill="none" stroke="#000" stroke-width="1.25"  d="M520.0 862.5C521.9 864.5 527.3 871.2 531.2 874.5C535.2 877.8 538.8 879.9 543.8 882.0C548.8 884.1 554.8 886.2 561.2 887.0C567.7 887.8 576.0 888.0 582.5 887.0C589.0 886.0 595.2 883.7 600.0 881.2C604.8 878.8 608.9 875.2 611.2 872.5C613.6 869.8 614.0 867.2 614.2 865.0C614.5 862.8 613.2 860.4 613.0 859.5"/>
<rect x="583.5" y="875.5" width="3.5" height="2.5" fill="#fff" stroke="#000" stroke-width="0.9"/>
<line x1="545" y1="882.5" x2="560" y2="886.8" stroke="#0000ff" stroke-width="4" stroke-linecap="round"/>
<path d="M539 877l8.5 8.5M547.5 876.5l-9 9" stroke="#ff2020" stroke-width="1.1" fill="none"/>
<circle cx="602.5" cy="868.5" r="2.3" fill="#ff0000"/>
<rect x="803.5" y="802.5" width="151.0" height="148.0" fill="#fff" stroke="#2a2a2a"/>
<rect x="796" y="802" width="8" height="1" fill="#2a2a2a"/>
<rect x="800" y="804" width="4" height="1" fill="#2a2a2a"/>
<rect x="800" y="806" width="4" height="1" fill="#2a2a2a"/>
<rect x="800" y="808" width="4" height="1" fill="#2a2a2a"/>
<rect x="800" y="809" width="4" height="1" fill="#2a2a2a"/>
<rect x="800" y="811" width="4" height="1" fill="#2a2a2a"/>
<rect x="800" y="813" width="4" height="1" fill="#2a2a2a"/>
<rect x="800" y="815" width="4" height="1" fill="#2a2a2a"/>
<rect x="800" y="817" width="4" height="1" fill="#2a2a2a"/>
<rect x="800" y="819" width="4" height="1" fill="#2a2a2a"/>
<rect x="796" y="821" width="8" height="1" fill="#2a2a2a"/>
<rect x="800" y="822" width="4" height="1" fill="#2a2a2a"/>
<rect x="800" y="824" width="4" height="1" fill="#2a2a2a"/>
<rect x="800" y="826" width="4" height="1" fill="#2a2a2a"/>
<rect x="800" y="828" width="4" height="1" fill="#2a2a2a"/>
<rect x="800" y="830" width="4" height="1" fill="#2a2a2a"/>
<rect x="800" y="832" width="4" height="1" fill="#2a2a2a"/>
<rect x="800" y="833" width="4" height="1" fill="#2a2a2a"/>
<rect x="800" y="835" width="4" height="1" fill="#2a2a2a"/>
<rect x="800" y="837" width="4" height="1" fill="#2a2a2a"/>
<rect x="796" y="839" width="8" height="1" fill="#2a2a2a"/>
<rect x="800" y="841" width="4" height="1" fill="#2a2a2a"/>
<rect x="800" y="843" width="4" height="1" fill="#2a2a2a"/>
<rect x="800" y="845" width="4" height="1" fill="#2a2a2a"/>
<rect x="800" y="846" width="4" height="1" fill="#2a2a2a"/>
<rect x="800" y="848" width="4" height="1" fill="#2a2a2a"/>
<rect x="800" y="850" width="4" height="1" fill="#2a2a2a"/>
<rect x="800" y="852" width="4" height="1" fill="#2a2a2a"/>
<rect x="800" y="854" width="4" height="1" fill="#2a2a2a"/>
<rect x="800" y="856" width="4" height="1" fill="#2a2a2a"/>
<rect x="796" y="858" width="8" height="1" fill="#2a2a2a"/>
<rect x="800" y="859" width="4" height="1" fill="#2a2a2a"/>
<rect x="800" y="861" width="4" height="1" fill="#2a2a2a"/>
<rect x="800" y="863" width="4" height="1" fill="#2a2a2a"/>
<rect x="800" y="865" width="4" height="1" fill="#2a2a2a"/>
<rect x="800" y="867" width="4" height="1" fill="#2a2a2a"/>
<rect x="800" y="869" width="4" height="1" fill="#2a2a2a"/>
<rect x="800" y="870" width="4" height="1" fill="#2a2a2a"/>
<rect x="800" y="872" width="4" height="1" fill="#2a2a2a"/>
<rect x="800" y="874" width="4" height="1" fill="#2a2a2a"/>
<rect x="796" y="876" width="8" height="1" fill="#2a2a2a"/>
<rect x="800" y="878" width="4" height="1" fill="#2a2a2a"/>
<rect x="800" y="880" width="4" height="1" fill="#2a2a2a"/>
<rect x="800" y="882" width="4" height="1" fill="#2a2a2a"/>
<rect x="800" y="883" width="4" height="1" fill="#2a2a2a"/>
<rect x="800" y="885" width="4" height="1" fill="#2a2a2a"/>
<rect x="800" y="887" width="4" height="1" fill="#2a2a2a"/>
<rect x="800" y="889" width="4" height="1" fill="#2a2a2a"/>
<rect x="800" y="891" width="4" height="1" fill="#2a2a2a"/>
<rect x="800" y="893" width="4" height="1" fill="#2a2a2a"/>
<rect x="796" y="895" width="8" height="1" fill="#2a2a2a"/>
<rect x="800" y="896" width="4" height="1" fill="#2a2a2a"/>
<rect x="800" y="898" width="4" height="1" fill="#2a2a2a"/>
<rect x="800" y="900" width="4" height="1" fill="#2a2a2a"/>
<rect x="800" y="902" width="4" height="1" fill="#2a2a2a"/>
<rect x="800" y="904" width="4" height="1" fill="#2a2a2a"/>
<rect x="800" y="906" width="4" height="1" fill="#2a2a2a"/>
<rect x="800" y="907" width="4" height="1" fill="#2a2a2a"/>
<rect x="800" y="909" width="4" height="1" fill="#2a2a2a"/>
<rect x="800" y="911" width="4" height="1" fill="#2a2a2a"/>
<rect x="796" y="913" width="8" height="1" fill="#2a2a2a"/>
<rect x="800" y="915" width="4" height="1" fill="#2a2a2a"/>
<rect x="800" y="917" width="4" height="1" fill="#2a2a2a"/>
<rect x="800" y="919" width="4" height="1" fill="#2a2a2a"/>
<rect x="800" y="920" width="4" height="1" fill="#2a2a2a"/>
<rect x="800" y="922" width="4" height="1" fill="#2a2a2a"/>
<rect x="800" y="924" width="4" height="1" fill="#2a2a2a"/>
<rect x="800" y="926" width="4" height="1" fill="#2a2a2a"/>
<rect x="800" y="928" width="4" height="1" fill="#2a2a2a"/>
<rect x="800" y="930" width="4" height="1" fill="#2a2a2a"/>
<rect x="796" y="932" width="8" height="1" fill="#2a2a2a"/>
<rect x="800" y="933" width="4" height="1" fill="#2a2a2a"/>
<rect x="800" y="935" width="4" height="1" fill="#2a2a2a"/>
<rect x="800" y="937" width="4" height="1" fill="#2a2a2a"/>
<rect x="800" y="939" width="4" height="1" fill="#2a2a2a"/>
<rect x="800" y="941" width="4" height="1" fill="#2a2a2a"/>
<rect x="800" y="943" width="4" height="1" fill="#2a2a2a"/>
<rect x="800" y="944" width="4" height="1" fill="#2a2a2a"/>
<rect x="800" y="946" width="4" height="1" fill="#2a2a2a"/>
<rect x="800" y="948" width="4" height="1" fill="#2a2a2a"/>
<rect x="796" y="950" width="8" height="1" fill="#2a2a2a"/>
<text x="789.5" y="807.0" text-anchor="end" font-size="12" >40.</text>
<text x="789.5" y="825.5" text-anchor="end" font-size="12" >30.</text>
<text x="789.5" y="844.0" text-anchor="end" font-size="12" >20.</text>
<text x="789.5" y="862.5" text-anchor="end" font-size="12" >10.</text>
<text x="789.5" y="881.0" text-anchor="end" font-size="12" >0.</text>
<text x="789.5" y="899.5" text-anchor="end" font-size="12" >-10.</text>
<text x="789.5" y="918.0" text-anchor="end" font-size="12" >-20.</text>
<text x="789.5" y="936.5" text-anchor="end" font-size="12" >-30.</text>
<text x="789.5" y="955.0" text-anchor="end" font-size="12" >-40.</text>
<rect x="803" y="950" width="1" height="8" fill="#2a2a2a"/>
<rect x="822" y="950" width="1" height="4" fill="#2a2a2a"/>
<rect x="841" y="950" width="1" height="8" fill="#2a2a2a"/>
<rect x="860" y="950" width="1" height="4" fill="#2a2a2a"/>
<rect x="879" y="950" width="1" height="8" fill="#2a2a2a"/>
<rect x="897" y="950" width="1" height="4" fill="#2a2a2a"/>
<rect x="916" y="950" width="1" height="8" fill="#2a2a2a"/>
<rect x="935" y="950" width="1" height="4" fill="#2a2a2a"/>
<rect x="954" y="950" width="1" height="8" fill="#2a2a2a"/>
<text x="803.5" y="975.0" text-anchor="middle" font-size="12" >-40.</text>
<text x="841.2" y="975.0" text-anchor="middle" font-size="12" >-20.</text>
<text x="879.0" y="975.0" text-anchor="middle" font-size="12" >0.</text>
<text x="916.8" y="975.0" text-anchor="middle" font-size="12" >20.</text>
<text x="954.5" y="975.0" text-anchor="middle" font-size="12" >40.</text>
<text x="879.0" y="992.0" text-anchor="middle" font-size="12"  class="t">KSM-Y</text>
<text class="t" transform="translate(756.5,876.5) rotate(-90)" text-anchor="middle">KSM-Z</text>
<clipPath id="c3"><rect x="804" y="802.5" width="150" height="147"/></clipPath>
<ellipse cx="879.2" cy="876.8" rx="86" ry="84" fill="none" stroke="#0000ff" stroke-dasharray="2.2 1.2" stroke-width="1.25" clip-path="url(#c3)"/>
<ellipse cx="879.2" cy="876.5" rx="45.3" ry="44" fill="none" stroke="#6a3000" stroke-dasharray="2.2 1.2" stroke-width="1.25"/>
<ellipse cx="880.3" cy="876.8" rx="38.3" ry="16.4" fill="none" stroke="#000" stroke-width="1.25"/>
<path fill="none" stroke="#000" stroke-width="1.25"  d="M843.8 862.5L870.0 875.0L896.2 887.0L890.0 881.2L870.0 868.2L854.2 859.2"/>
<ellipse cx="879.5" cy="876.3" rx="2.2" ry="1.8" fill="none" stroke="#000" stroke-width="1"/>
<line x1="883" y1="881.5" x2="893" y2="886" stroke="#0000ff" stroke-width="4" stroke-linecap="round"/>
<path d="M877 877l8.5 8.5M885.5 876.5l-9 9" stroke="#ff2020" stroke-width="1.1" fill="none"/>
<circle cx="913.3" cy="868.5" r="2.3" fill="#ff0000"/>
</svg>
</body></html>
